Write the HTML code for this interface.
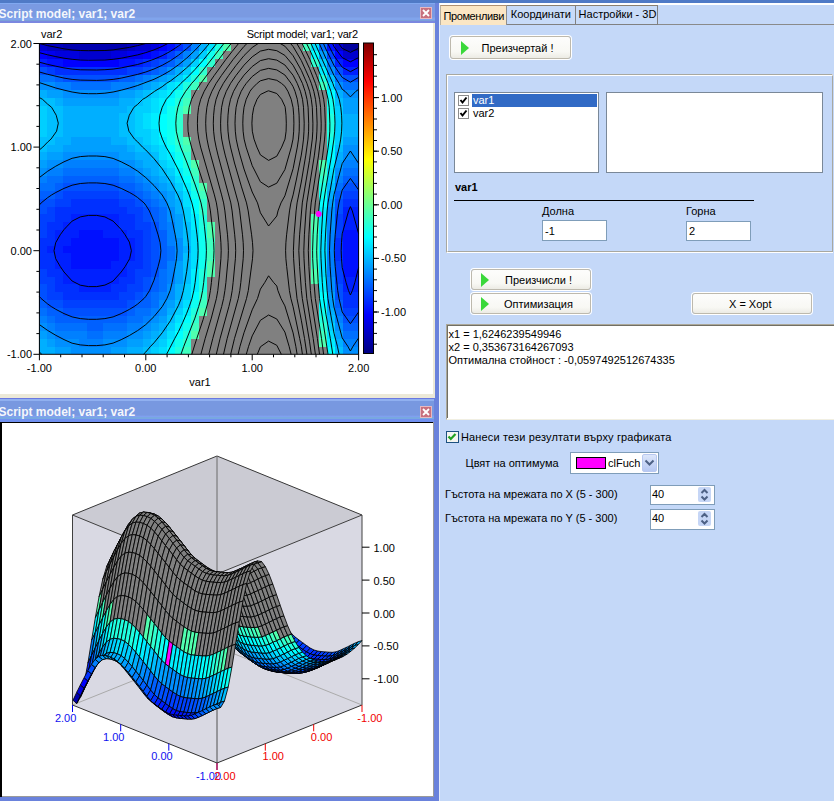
<!DOCTYPE html>
<html><head><meta charset="utf-8"><style>
html,body{margin:0;padding:0}
body{width:834px;height:801px;position:relative;overflow:hidden;background:#c4d8f8;font-family:"Liberation Sans", sans-serif}
.abs{position:absolute}
.t{position:absolute;white-space:nowrap;line-height:1}
.title{position:absolute;background:linear-gradient(#80a8f0 0,#80a8f0 1px,#7a9ae2 2px,#7a9ae2 14px,#80a4ec 17px,#7aa0d8 18.5px,#7b88e0 19px,#7b88e0 20px)}
.ttext{position:absolute;left:-1.5px;color:#fff;font-weight:bold;font-size:12px;line-height:1;white-space:nowrap;opacity:.92}
.close{position:absolute;width:12px;height:12px;background:#c8707e;border:1px solid #e8b8c0;box-sizing:border-box}
.btn{position:absolute;box-sizing:border-box;border:1px solid #bdb9ad;border-radius:3px;background:linear-gradient(#fdfdfc,#f8f8f4 70%,#ecebe4);box-shadow:0 0 0 1px #fff}
.play{position:absolute;width:0;height:0;border-top:7px solid transparent;border-bottom:7px solid transparent;border-left:8.5px solid #3ad83a}
.edit{position:absolute;box-sizing:border-box;background:#fff;border:1px solid #7f9db9}
.cb{width:11px;height:11px;box-sizing:border-box;border:1px solid #8c8c8c;background:#fff}
.spin{width:13px;height:15px;box-sizing:border-box;border-radius:2px;background:#c6d6f6}
</style></head><body>
<!-- top blue strip -->
<div class="abs" style="left:0;top:0;width:834px;height:3px;background:#4f7ac6"></div>
<!-- ============ top-left window ============ -->
<div class="abs" style="left:0;top:3px;width:438.5px;height:395px;background:#6a82dc"></div>
<div class="abs" style="left:0;top:3px;width:435px;height:20px;background:linear-gradient(#80a8f0 0,#80a8f0 1.4px,#7a9ae2 1.4px,#7a9ae2 14px,#80a4ec 15px,#80a4ec 17px,#7aa0d8 17px,#7aa0d8 18.5px,#7b88e0 18.5px)"></div>
<div class="ttext" style="top:8px">Script model; var1; var2</div>
<div class="close" style="left:420px;top:7px"></div><svg class="abs" style="left:420px;top:7px" width="12" height="12"><path d="M3 3L9 9M9 3L3 9" stroke="#fff" stroke-width="1.8"/></svg>
<div class="abs" style="left:0;top:23px;width:435px;height:374.5px;background:#ece9d8"></div>
<div class="abs" style="left:0;top:23px;width:433px;height:371px;background:#fff;overflow:hidden">
  <div class="abs" style="left:0;top:-23px"><svg class="abs" style="left:0;top:0" width="434" height="400" font-family='"Liberation Sans", sans-serif'><path fill="#00afff" shape-rendering="crispEdges" d="M39.4 346.5h16.0v7.8h-16.0zM127.2 346.5h16.0v7.8h-16.0zM39.4 338.8h8.0v7.8h-8.0zM143.1 338.8h8.0v7.8h-8.0zM334.7 338.8h8.0v7.8h-8.0zM151.1 331.0h8.0v7.8h-8.0zM159.1 323.2h8.0v7.8h-8.0zM167.1 307.7h8.0v7.8h-8.0zM326.7 307.7h8.0v7.8h-8.0zM175.1 292.1h8.0v7.8h-8.0zM175.1 284.4h8.0v7.8h-8.0zM183.0 245.5h8.0v7.8h-8.0zM175.1 206.7h8.0v7.8h-8.0zM175.1 198.9h8.0v7.8h-8.0zM326.7 191.1h8.0v7.8h-8.0zM167.1 183.4h8.0v7.8h-8.0zM159.1 175.6h8.0v7.8h-8.0zM151.1 167.8h8.0v7.8h-8.0zM143.1 160.1h16.0v7.8h-16.0zM39.4 152.3h8.0v7.8h-8.0zM135.2 152.3h16.0v7.8h-16.0zM334.7 152.3h8.0v7.8h-8.0zM47.4 144.5h16.0v7.8h-16.0zM127.2 144.5h8.0v7.8h-8.0zM55.4 136.7h16.0v7.8h-16.0zM111.2 136.7h16.0v7.8h-16.0zM63.3 129.0h55.9v7.8h-55.9zM342.6 129.0h16.0v7.8h-16.0zM63.3 121.2h55.9v7.8h-55.9zM342.6 121.2h16.0v7.8h-16.0zM63.3 113.4h55.9v7.8h-55.9zM342.6 113.4h16.0v7.8h-16.0zM63.3 105.7h63.8v7.8h-63.8zM55.4 97.9h8.0v7.8h-8.0zM119.2 97.9h16.0v7.8h-16.0zM39.4 90.1h8.0v7.8h-8.0zM135.2 90.1h8.0v7.8h-8.0zM334.7 90.1h8.0v7.8h-8.0zM151.1 82.4h8.0v7.8h-8.0zM167.1 74.6h8.0v7.8h-8.0zM175.1 66.8h8.0v7.8h-8.0zM199.0 43.5h8.0v7.8h-8.0z"/>
<path fill="#009fff" shape-rendering="crispEdges" d="M55.4 346.5h16.0v7.8h-16.0zM111.2 346.5h16.0v7.8h-16.0zM47.4 338.8h8.0v7.8h-8.0zM127.2 338.8h16.0v7.8h-16.0zM39.4 331.0h8.0v7.8h-8.0zM143.1 331.0h8.0v7.8h-8.0zM334.7 331.0h8.0v7.8h-8.0zM151.1 323.2h8.0v7.8h-8.0zM159.1 315.4h8.0v7.8h-8.0zM167.1 299.9h8.0v7.8h-8.0zM326.7 299.9h8.0v7.8h-8.0zM326.7 292.1h8.0v7.8h-8.0zM175.1 276.6h8.0v7.8h-8.0zM175.1 268.8h8.0v7.8h-8.0zM175.1 261.1h8.0v7.8h-8.0zM175.1 230.0h8.0v7.8h-8.0zM175.1 222.2h8.0v7.8h-8.0zM175.1 214.4h8.0v7.8h-8.0zM167.1 198.9h8.0v7.8h-8.0zM326.7 198.9h8.0v7.8h-8.0zM167.1 191.1h8.0v7.8h-8.0zM159.1 183.4h8.0v7.8h-8.0zM151.1 175.6h8.0v7.8h-8.0zM143.1 167.8h8.0v7.8h-8.0zM39.4 160.1h8.0v7.8h-8.0zM135.2 160.1h8.0v7.8h-8.0zM334.7 160.1h8.0v7.8h-8.0zM47.4 152.3h16.0v7.8h-16.0zM119.2 152.3h16.0v7.8h-16.0zM63.3 144.5h63.8v7.8h-63.8zM71.3 136.7h39.9v7.8h-39.9zM342.6 136.7h16.0v7.8h-16.0zM342.6 105.7h16.0v7.8h-16.0zM63.3 97.9h55.9v7.8h-55.9zM342.6 97.9h16.0v7.8h-16.0zM47.4 90.1h16.0v7.8h-16.0zM119.2 90.1h16.0v7.8h-16.0zM143.1 82.4h8.0v7.8h-8.0zM159.1 74.6h8.0v7.8h-8.0zM183.0 59.0h8.0v7.8h-8.0zM191.0 51.3h8.0v7.8h-8.0zM318.7 51.3h8.0v7.8h-8.0z"/>
<path fill="#008fff" shape-rendering="crispEdges" d="M71.3 346.5h39.9v7.8h-39.9zM342.6 346.5h16.0v7.8h-16.0zM55.4 338.8h23.9v7.8h-23.9zM103.2 338.8h23.9v7.8h-23.9zM47.4 331.0h8.0v7.8h-8.0zM127.2 331.0h16.0v7.8h-16.0zM39.4 323.2h8.0v7.8h-8.0zM143.1 323.2h8.0v7.8h-8.0zM334.7 323.2h8.0v7.8h-8.0zM151.1 315.4h8.0v7.8h-8.0zM159.1 307.7h8.0v7.8h-8.0zM159.1 299.9h8.0v7.8h-8.0zM167.1 292.1h8.0v7.8h-8.0zM167.1 284.4h8.0v7.8h-8.0zM326.7 284.4h8.0v7.8h-8.0zM326.7 276.6h8.0v7.8h-8.0zM175.1 253.3h8.0v7.8h-8.0zM175.1 245.5h8.0v7.8h-8.0zM175.1 237.8h8.0v7.8h-8.0zM326.7 222.2h8.0v7.8h-8.0zM167.1 214.4h8.0v7.8h-8.0zM326.7 214.4h8.0v7.8h-8.0zM167.1 206.7h8.0v7.8h-8.0zM326.7 206.7h8.0v7.8h-8.0zM159.1 191.1h8.0v7.8h-8.0zM151.1 183.4h8.0v7.8h-8.0zM143.1 175.6h8.0v7.8h-8.0zM39.4 167.8h8.0v7.8h-8.0zM135.2 167.8h8.0v7.8h-8.0zM334.7 167.8h8.0v7.8h-8.0zM47.4 160.1h16.0v7.8h-16.0zM119.2 160.1h16.0v7.8h-16.0zM63.3 152.3h55.9v7.8h-55.9zM342.6 152.3h16.0v7.8h-16.0zM342.6 144.5h16.0v7.8h-16.0zM63.3 90.1h55.9v7.8h-55.9zM342.6 90.1h16.0v7.8h-16.0zM39.4 82.4h16.0v7.8h-16.0zM135.2 82.4h8.0v7.8h-8.0zM334.7 82.4h8.0v7.8h-8.0zM151.1 74.6h8.0v7.8h-8.0zM167.1 66.8h8.0v7.8h-8.0zM326.7 66.8h8.0v7.8h-8.0z"/>
<path fill="#00bfff" shape-rendering="crispEdges" d="M143.1 346.5h8.0v7.8h-8.0zM334.7 346.5h8.0v7.8h-8.0zM151.1 338.8h8.0v7.8h-8.0zM159.1 331.0h8.0v7.8h-8.0zM167.1 315.4h8.0v7.8h-8.0zM326.7 315.4h8.0v7.8h-8.0zM175.1 299.9h8.0v7.8h-8.0zM183.0 276.6h8.0v7.8h-8.0zM183.0 268.8h8.0v7.8h-8.0zM183.0 261.1h8.0v7.8h-8.0zM183.0 253.3h8.0v7.8h-8.0zM183.0 237.8h8.0v7.8h-8.0zM183.0 230.0h8.0v7.8h-8.0zM183.0 222.2h8.0v7.8h-8.0zM175.1 191.1h8.0v7.8h-8.0zM326.7 183.4h8.0v7.8h-8.0zM167.1 175.6h8.0v7.8h-8.0zM159.1 167.8h8.0v7.8h-8.0zM151.1 152.3h8.0v7.8h-8.0zM39.4 144.5h8.0v7.8h-8.0zM135.2 144.5h16.0v7.8h-16.0zM334.7 144.5h8.0v7.8h-8.0zM39.4 136.7h16.0v7.8h-16.0zM127.2 136.7h16.0v7.8h-16.0zM47.4 129.0h16.0v7.8h-16.0zM119.2 129.0h16.0v7.8h-16.0zM47.4 121.2h16.0v7.8h-16.0zM119.2 121.2h16.0v7.8h-16.0zM47.4 113.4h16.0v7.8h-16.0zM119.2 113.4h16.0v7.8h-16.0zM47.4 105.7h16.0v7.8h-16.0zM127.2 105.7h8.0v7.8h-8.0zM39.4 97.9h16.0v7.8h-16.0zM135.2 97.9h8.0v7.8h-8.0zM334.7 97.9h8.0v7.8h-8.0zM143.1 90.1h8.0v7.8h-8.0zM159.1 82.4h8.0v7.8h-8.0zM326.7 74.6h8.0v7.8h-8.0z"/>
<path fill="#00cfff" shape-rendering="crispEdges" d="M151.1 346.5h8.0v7.8h-8.0zM159.1 338.8h8.0v7.8h-8.0zM167.1 323.2h8.0v7.8h-8.0zM326.7 323.2h8.0v7.8h-8.0zM175.1 307.7h8.0v7.8h-8.0zM183.0 292.1h8.0v7.8h-8.0zM183.0 284.4h8.0v7.8h-8.0zM183.0 214.4h8.0v7.8h-8.0zM183.0 206.7h8.0v7.8h-8.0zM175.1 183.4h8.0v7.8h-8.0zM326.7 175.6h8.0v7.8h-8.0zM167.1 167.8h8.0v7.8h-8.0zM159.1 160.1h8.0v7.8h-8.0zM151.1 144.5h8.0v7.8h-8.0zM143.1 136.7h8.0v7.8h-8.0zM334.7 136.7h8.0v7.8h-8.0zM39.4 129.0h8.0v7.8h-8.0zM135.2 129.0h16.0v7.8h-16.0zM334.7 129.0h8.0v7.8h-8.0zM39.4 121.2h8.0v7.8h-8.0zM135.2 121.2h8.0v7.8h-8.0zM334.7 121.2h8.0v7.8h-8.0zM39.4 113.4h8.0v7.8h-8.0zM135.2 113.4h8.0v7.8h-8.0zM334.7 113.4h8.0v7.8h-8.0zM39.4 105.7h8.0v7.8h-8.0zM135.2 105.7h16.0v7.8h-16.0zM334.7 105.7h8.0v7.8h-8.0zM143.1 97.9h8.0v7.8h-8.0zM151.1 90.1h8.0v7.8h-8.0zM175.1 74.6h8.0v7.8h-8.0zM183.0 66.8h8.0v7.8h-8.0zM191.0 59.0h8.0v7.8h-8.0zM318.7 59.0h8.0v7.8h-8.0zM199.0 51.3h8.0v7.8h-8.0z"/>
<path fill="#00dfff" shape-rendering="crispEdges" d="M159.1 346.5h8.0v7.8h-8.0zM167.1 331.0h8.0v7.8h-8.0zM326.7 331.0h8.0v7.8h-8.0zM175.1 315.4h8.0v7.8h-8.0zM183.0 299.9h8.0v7.8h-8.0zM318.7 268.8h8.0v7.8h-8.0zM191.0 261.1h8.0v7.8h-8.0zM318.7 261.1h8.0v7.8h-8.0zM191.0 253.3h8.0v7.8h-8.0zM318.7 253.3h8.0v7.8h-8.0zM191.0 245.5h8.0v7.8h-8.0zM318.7 245.5h8.0v7.8h-8.0zM191.0 237.8h8.0v7.8h-8.0zM318.7 237.8h8.0v7.8h-8.0zM191.0 230.0h8.0v7.8h-8.0zM318.7 230.0h8.0v7.8h-8.0zM183.0 198.9h8.0v7.8h-8.0zM183.0 191.1h8.0v7.8h-8.0zM175.1 175.6h8.0v7.8h-8.0zM326.7 167.8h8.0v7.8h-8.0zM167.1 160.1h8.0v7.8h-8.0zM159.1 152.3h8.0v7.8h-8.0zM159.1 144.5h8.0v7.8h-8.0zM151.1 136.7h8.0v7.8h-8.0zM151.1 129.0h8.0v7.8h-8.0zM143.1 121.2h8.0v7.8h-8.0zM143.1 113.4h8.0v7.8h-8.0zM151.1 105.7h8.0v7.8h-8.0zM151.1 97.9h8.0v7.8h-8.0zM159.1 90.1h8.0v7.8h-8.0zM167.1 82.4h8.0v7.8h-8.0zM326.7 82.4h8.0v7.8h-8.0zM207.0 43.5h8.0v7.8h-8.0zM310.7 43.5h8.0v7.8h-8.0z"/>
<path fill="#00ffff" shape-rendering="crispEdges" d="M167.1 346.5h8.0v7.8h-8.0zM326.7 346.5h8.0v7.8h-8.0zM175.1 331.0h8.0v7.8h-8.0zM183.0 315.4h8.0v7.8h-8.0zM318.7 299.9h8.0v7.8h-8.0zM191.0 292.1h8.0v7.8h-8.0zM318.7 292.1h8.0v7.8h-8.0zM191.0 206.7h8.0v7.8h-8.0zM191.0 198.9h8.0v7.8h-8.0zM318.7 198.9h8.0v7.8h-8.0zM183.0 175.6h8.0v7.8h-8.0zM175.1 160.1h8.0v7.8h-8.0zM326.7 152.3h8.0v7.8h-8.0zM167.1 144.5h8.0v7.8h-8.0zM326.7 144.5h8.0v7.8h-8.0zM159.1 129.0h8.0v7.8h-8.0zM159.1 121.2h8.0v7.8h-8.0zM159.1 113.4h8.0v7.8h-8.0zM167.1 97.9h8.0v7.8h-8.0zM326.7 90.1h8.0v7.8h-8.0zM191.0 66.8h8.0v7.8h-8.0zM199.0 59.0h8.0v7.8h-8.0zM310.7 51.3h8.0v7.8h-8.0z"/>
<path fill="#20ffdf" shape-rendering="crispEdges" d="M175.1 346.5h8.0v7.8h-8.0zM183.0 331.0h8.0v7.8h-8.0zM318.7 315.4h8.0v7.8h-8.0zM191.0 307.7h8.0v7.8h-8.0zM199.0 284.4h8.0v7.8h-8.0zM199.0 276.6h8.0v7.8h-8.0zM199.0 268.8h8.0v7.8h-8.0zM199.0 222.2h8.0v7.8h-8.0zM199.0 214.4h8.0v7.8h-8.0zM191.0 183.4h8.0v7.8h-8.0zM318.7 183.4h8.0v7.8h-8.0zM183.0 160.1h8.0v7.8h-8.0zM175.1 144.5h8.0v7.8h-8.0zM326.7 129.0h8.0v7.8h-8.0zM326.7 121.2h8.0v7.8h-8.0zM326.7 113.4h8.0v7.8h-8.0zM175.1 97.9h8.0v7.8h-8.0zM183.0 82.4h8.0v7.8h-8.0zM191.0 74.6h8.0v7.8h-8.0zM318.7 74.6h8.0v7.8h-8.0zM215.0 43.5h8.0v7.8h-8.0z"/>
<path fill="#40ffbf" shape-rendering="crispEdges" d="M183.0 346.5h8.0v7.8h-8.0zM318.7 331.0h8.0v7.8h-8.0zM191.0 323.2h8.0v7.8h-8.0zM199.0 299.9h8.0v7.8h-8.0zM310.7 261.1h8.0v7.8h-8.0zM207.0 253.3h8.0v7.8h-8.0zM310.7 253.3h8.0v7.8h-8.0zM207.0 245.5h8.0v7.8h-8.0zM310.7 245.5h8.0v7.8h-8.0zM207.0 237.8h8.0v7.8h-8.0zM310.7 237.8h8.0v7.8h-8.0zM310.7 230.0h8.0v7.8h-8.0zM199.0 191.1h8.0v7.8h-8.0zM191.0 167.8h8.0v7.8h-8.0zM318.7 167.8h8.0v7.8h-8.0zM183.0 144.5h8.0v7.8h-8.0zM183.0 97.9h8.0v7.8h-8.0zM191.0 82.4h8.0v7.8h-8.0zM318.7 82.4h8.0v7.8h-8.0zM215.0 51.3h8.0v7.8h-8.0zM302.7 43.5h8.0v7.8h-8.0z"/>
<path fill="#808080" shape-rendering="crispEdges" d="M191.0 346.5h135.7v7.8h-135.7zM191.0 338.8h127.7v7.8h-127.7zM199.0 331.0h119.7v7.8h-119.7zM199.0 323.2h119.7v7.8h-119.7zM199.0 315.4h119.7v7.8h-119.7zM207.0 307.7h111.7v7.8h-111.7zM207.0 299.9h111.7v7.8h-111.7zM207.0 292.1h111.7v7.8h-111.7zM207.0 284.4h111.7v7.8h-111.7zM207.0 276.6h103.7v7.8h-103.7zM215.0 268.8h95.8v7.8h-95.8zM215.0 261.1h95.8v7.8h-95.8zM215.0 253.3h95.8v7.8h-95.8zM215.0 245.5h95.8v7.8h-95.8zM215.0 237.8h95.8v7.8h-95.8zM215.0 230.0h95.8v7.8h-95.8zM215.0 222.2h95.8v7.8h-95.8zM207.0 214.4h103.7v7.8h-103.7zM207.0 206.7h111.7v7.8h-111.7zM207.0 198.9h111.7v7.8h-111.7zM207.0 191.1h111.7v7.8h-111.7zM207.0 183.4h111.7v7.8h-111.7zM199.0 175.6h119.7v7.8h-119.7zM199.0 167.8h119.7v7.8h-119.7zM199.0 160.1h119.7v7.8h-119.7zM191.0 152.3h135.7v7.8h-135.7zM191.0 144.5h135.7v7.8h-135.7zM191.0 136.7h135.7v7.8h-135.7zM183.0 129.0h143.6v7.8h-143.6zM183.0 121.2h143.6v7.8h-143.6zM183.0 113.4h143.6v7.8h-143.6zM191.0 105.7h135.7v7.8h-135.7zM191.0 97.9h135.7v7.8h-135.7zM191.0 90.1h135.7v7.8h-135.7zM199.0 82.4h119.7v7.8h-119.7zM207.0 74.6h111.7v7.8h-111.7zM207.0 66.8h111.7v7.8h-111.7zM215.0 59.0h95.8v7.8h-95.8zM222.9 51.3h87.8v7.8h-87.8zM230.9 43.5h71.8v7.8h-71.8z"/>
<path fill="#0080ff" shape-rendering="crispEdges" d="M79.3 338.8h23.9v7.8h-23.9zM342.6 338.8h16.0v7.8h-16.0zM55.4 331.0h31.9v7.8h-31.9zM103.2 331.0h23.9v7.8h-23.9zM47.4 323.2h8.0v7.8h-8.0zM127.2 323.2h16.0v7.8h-16.0zM39.4 315.4h8.0v7.8h-8.0zM143.1 315.4h8.0v7.8h-8.0zM334.7 315.4h8.0v7.8h-8.0zM151.1 307.7h8.0v7.8h-8.0zM159.1 292.1h8.0v7.8h-8.0zM167.1 276.6h8.0v7.8h-8.0zM167.1 268.8h8.0v7.8h-8.0zM326.7 268.8h8.0v7.8h-8.0zM167.1 261.1h8.0v7.8h-8.0zM326.7 261.1h8.0v7.8h-8.0zM326.7 253.3h8.0v7.8h-8.0zM326.7 245.5h8.0v7.8h-8.0zM167.1 237.8h8.0v7.8h-8.0zM326.7 237.8h8.0v7.8h-8.0zM167.1 230.0h8.0v7.8h-8.0zM326.7 230.0h8.0v7.8h-8.0zM167.1 222.2h8.0v7.8h-8.0zM159.1 198.9h8.0v7.8h-8.0zM151.1 191.1h8.0v7.8h-8.0zM143.1 183.4h8.0v7.8h-8.0zM39.4 175.6h8.0v7.8h-8.0zM135.2 175.6h8.0v7.8h-8.0zM334.7 175.6h8.0v7.8h-8.0zM47.4 167.8h16.0v7.8h-16.0zM119.2 167.8h16.0v7.8h-16.0zM63.3 160.1h55.9v7.8h-55.9zM342.6 160.1h16.0v7.8h-16.0zM55.4 82.4h16.0v7.8h-16.0zM111.2 82.4h23.9v7.8h-23.9zM143.1 74.6h8.0v7.8h-8.0zM175.1 59.0h8.0v7.8h-8.0zM183.0 51.3h8.0v7.8h-8.0zM191.0 43.5h8.0v7.8h-8.0z"/>
<path fill="#00efff" shape-rendering="crispEdges" d="M167.1 338.8h8.0v7.8h-8.0zM326.7 338.8h8.0v7.8h-8.0zM175.1 323.2h8.0v7.8h-8.0zM183.0 307.7h8.0v7.8h-8.0zM191.0 284.4h8.0v7.8h-8.0zM318.7 284.4h8.0v7.8h-8.0zM191.0 276.6h8.0v7.8h-8.0zM318.7 276.6h8.0v7.8h-8.0zM191.0 268.8h8.0v7.8h-8.0zM191.0 222.2h8.0v7.8h-8.0zM318.7 222.2h8.0v7.8h-8.0zM191.0 214.4h8.0v7.8h-8.0zM318.7 214.4h8.0v7.8h-8.0zM318.7 206.7h8.0v7.8h-8.0zM183.0 183.4h8.0v7.8h-8.0zM175.1 167.8h8.0v7.8h-8.0zM326.7 160.1h8.0v7.8h-8.0zM167.1 152.3h8.0v7.8h-8.0zM159.1 136.7h8.0v7.8h-8.0zM151.1 121.2h8.0v7.8h-8.0zM151.1 113.4h8.0v7.8h-8.0zM159.1 105.7h8.0v7.8h-8.0zM159.1 97.9h8.0v7.8h-8.0zM167.1 90.1h8.0v7.8h-8.0zM175.1 82.4h8.0v7.8h-8.0zM183.0 74.6h8.0v7.8h-8.0zM318.7 66.8h8.0v7.8h-8.0z"/>
<path fill="#10ffef" shape-rendering="crispEdges" d="M175.1 338.8h8.0v7.8h-8.0zM183.0 323.2h8.0v7.8h-8.0zM318.7 307.7h8.0v7.8h-8.0zM191.0 299.9h8.0v7.8h-8.0zM199.0 261.1h8.0v7.8h-8.0zM199.0 253.3h8.0v7.8h-8.0zM199.0 245.5h8.0v7.8h-8.0zM199.0 237.8h8.0v7.8h-8.0zM199.0 230.0h8.0v7.8h-8.0zM191.0 191.1h8.0v7.8h-8.0zM318.7 191.1h8.0v7.8h-8.0zM183.0 167.8h8.0v7.8h-8.0zM175.1 152.3h8.0v7.8h-8.0zM167.1 136.7h8.0v7.8h-8.0zM326.7 136.7h8.0v7.8h-8.0zM167.1 129.0h8.0v7.8h-8.0zM167.1 121.2h8.0v7.8h-8.0zM167.1 113.4h8.0v7.8h-8.0zM167.1 105.7h8.0v7.8h-8.0zM326.7 105.7h8.0v7.8h-8.0zM326.7 97.9h8.0v7.8h-8.0zM175.1 90.1h8.0v7.8h-8.0zM207.0 51.3h8.0v7.8h-8.0z"/>
<path fill="#30ffcf" shape-rendering="crispEdges" d="M183.0 338.8h8.0v7.8h-8.0zM318.7 323.2h8.0v7.8h-8.0zM191.0 315.4h8.0v7.8h-8.0zM199.0 292.1h8.0v7.8h-8.0zM199.0 206.7h8.0v7.8h-8.0zM199.0 198.9h8.0v7.8h-8.0zM191.0 175.6h8.0v7.8h-8.0zM318.7 175.6h8.0v7.8h-8.0zM183.0 152.3h8.0v7.8h-8.0zM175.1 136.7h8.0v7.8h-8.0zM175.1 129.0h8.0v7.8h-8.0zM175.1 121.2h8.0v7.8h-8.0zM175.1 113.4h8.0v7.8h-8.0zM175.1 105.7h8.0v7.8h-8.0zM183.0 90.1h8.0v7.8h-8.0zM199.0 66.8h8.0v7.8h-8.0zM207.0 59.0h8.0v7.8h-8.0zM310.7 59.0h8.0v7.8h-8.0z"/>
<path fill="#50ffaf" shape-rendering="crispEdges" d="M318.7 338.8h8.0v7.8h-8.0zM191.0 331.0h8.0v7.8h-8.0zM199.0 307.7h8.0v7.8h-8.0zM310.7 276.6h8.0v7.8h-8.0zM207.0 268.8h8.0v7.8h-8.0zM310.7 268.8h8.0v7.8h-8.0zM207.0 261.1h8.0v7.8h-8.0zM207.0 230.0h8.0v7.8h-8.0zM207.0 222.2h8.0v7.8h-8.0zM310.7 222.2h8.0v7.8h-8.0zM310.7 214.4h8.0v7.8h-8.0zM199.0 183.4h8.0v7.8h-8.0zM191.0 160.1h8.0v7.8h-8.0zM318.7 160.1h8.0v7.8h-8.0zM183.0 136.7h8.0v7.8h-8.0zM183.0 105.7h8.0v7.8h-8.0zM199.0 74.6h8.0v7.8h-8.0zM222.9 43.5h8.0v7.8h-8.0z"/>
<path fill="#0070ff" shape-rendering="crispEdges" d="M87.3 331.0h16.0v7.8h-16.0zM342.6 331.0h16.0v7.8h-16.0zM55.4 323.2h31.9v7.8h-31.9zM103.2 323.2h23.9v7.8h-23.9zM47.4 315.4h8.0v7.8h-8.0zM127.2 315.4h16.0v7.8h-16.0zM39.4 307.7h8.0v7.8h-8.0zM135.2 307.7h16.0v7.8h-16.0zM334.7 307.7h8.0v7.8h-8.0zM151.1 299.9h8.0v7.8h-8.0zM151.1 292.1h8.0v7.8h-8.0zM159.1 284.4h8.0v7.8h-8.0zM159.1 276.6h8.0v7.8h-8.0zM159.1 268.8h8.0v7.8h-8.0zM167.1 253.3h8.0v7.8h-8.0zM167.1 245.5h8.0v7.8h-8.0zM159.1 222.2h8.0v7.8h-8.0zM159.1 214.4h8.0v7.8h-8.0zM159.1 206.7h8.0v7.8h-8.0zM151.1 198.9h8.0v7.8h-8.0zM143.1 191.1h8.0v7.8h-8.0zM39.4 183.4h16.0v7.8h-16.0zM135.2 183.4h8.0v7.8h-8.0zM334.7 183.4h8.0v7.8h-8.0zM47.4 175.6h16.0v7.8h-16.0zM119.2 175.6h16.0v7.8h-16.0zM63.3 167.8h55.9v7.8h-55.9zM342.6 167.8h16.0v7.8h-16.0zM71.3 82.4h39.9v7.8h-39.9zM342.6 82.4h16.0v7.8h-16.0zM39.4 74.6h16.0v7.8h-16.0zM135.2 74.6h8.0v7.8h-8.0zM334.7 74.6h8.0v7.8h-8.0zM159.1 66.8h8.0v7.8h-8.0zM326.7 59.0h8.0v7.8h-8.0zM318.7 43.5h8.0v7.8h-8.0z"/>
<path fill="#0060ff" shape-rendering="crispEdges" d="M87.3 323.2h16.0v7.8h-16.0zM342.6 323.2h16.0v7.8h-16.0zM55.4 315.4h71.8v7.8h-71.8zM47.4 307.7h16.0v7.8h-16.0zM127.2 307.7h8.0v7.8h-8.0zM39.4 299.9h8.0v7.8h-8.0zM135.2 299.9h16.0v7.8h-16.0zM334.7 299.9h8.0v7.8h-8.0zM143.1 292.1h8.0v7.8h-8.0zM151.1 284.4h8.0v7.8h-8.0zM151.1 276.6h8.0v7.8h-8.0zM159.1 261.1h8.0v7.8h-8.0zM159.1 253.3h8.0v7.8h-8.0zM159.1 245.5h8.0v7.8h-8.0zM159.1 237.8h8.0v7.8h-8.0zM159.1 230.0h8.0v7.8h-8.0zM151.1 214.4h8.0v7.8h-8.0zM151.1 206.7h8.0v7.8h-8.0zM143.1 198.9h8.0v7.8h-8.0zM39.4 191.1h16.0v7.8h-16.0zM135.2 191.1h8.0v7.8h-8.0zM334.7 191.1h8.0v7.8h-8.0zM55.4 183.4h8.0v7.8h-8.0zM119.2 183.4h16.0v7.8h-16.0zM63.3 175.6h55.9v7.8h-55.9zM342.6 175.6h16.0v7.8h-16.0zM55.4 74.6h8.0v7.8h-8.0zM119.2 74.6h16.0v7.8h-16.0zM151.1 66.8h8.0v7.8h-8.0zM167.1 59.0h8.0v7.8h-8.0zM175.1 51.3h8.0v7.8h-8.0z"/>
<path fill="#0050ff" shape-rendering="crispEdges" d="M342.6 315.4h16.0v7.8h-16.0zM63.3 307.7h63.8v7.8h-63.8zM47.4 299.9h16.0v7.8h-16.0zM127.2 299.9h8.0v7.8h-8.0zM39.4 292.1h8.0v7.8h-8.0zM135.2 292.1h8.0v7.8h-8.0zM334.7 292.1h8.0v7.8h-8.0zM39.4 284.4h8.0v7.8h-8.0zM143.1 284.4h8.0v7.8h-8.0zM334.7 284.4h8.0v7.8h-8.0zM143.1 276.6h8.0v7.8h-8.0zM151.1 268.8h8.0v7.8h-8.0zM151.1 261.1h8.0v7.8h-8.0zM151.1 253.3h8.0v7.8h-8.0zM151.1 245.5h8.0v7.8h-8.0zM151.1 237.8h8.0v7.8h-8.0zM151.1 230.0h8.0v7.8h-8.0zM151.1 222.2h8.0v7.8h-8.0zM143.1 214.4h8.0v7.8h-8.0zM39.4 206.7h8.0v7.8h-8.0zM143.1 206.7h8.0v7.8h-8.0zM334.7 206.7h8.0v7.8h-8.0zM39.4 198.9h16.0v7.8h-16.0zM135.2 198.9h8.0v7.8h-8.0zM334.7 198.9h8.0v7.8h-8.0zM55.4 191.1h8.0v7.8h-8.0zM119.2 191.1h16.0v7.8h-16.0zM63.3 183.4h55.9v7.8h-55.9zM342.6 183.4h16.0v7.8h-16.0zM63.3 74.6h55.9v7.8h-55.9zM342.6 74.6h16.0v7.8h-16.0zM39.4 66.8h8.0v7.8h-8.0zM143.1 66.8h8.0v7.8h-8.0zM334.7 66.8h8.0v7.8h-8.0zM159.1 59.0h8.0v7.8h-8.0zM183.0 43.5h8.0v7.8h-8.0z"/>
<path fill="#0040ff" shape-rendering="crispEdges" d="M342.6 307.7h16.0v7.8h-16.0zM63.3 299.9h63.8v7.8h-63.8zM47.4 292.1h16.0v7.8h-16.0zM119.2 292.1h16.0v7.8h-16.0zM47.4 284.4h8.0v7.8h-8.0zM127.2 284.4h16.0v7.8h-16.0zM39.4 276.6h16.0v7.8h-16.0zM135.2 276.6h8.0v7.8h-8.0zM334.7 276.6h8.0v7.8h-8.0zM39.4 268.8h8.0v7.8h-8.0zM135.2 268.8h16.0v7.8h-16.0zM334.7 268.8h8.0v7.8h-8.0zM143.1 261.1h8.0v7.8h-8.0zM334.7 261.1h8.0v7.8h-8.0zM143.1 253.3h8.0v7.8h-8.0zM143.1 245.5h8.0v7.8h-8.0zM143.1 237.8h8.0v7.8h-8.0zM39.4 230.0h8.0v7.8h-8.0zM143.1 230.0h8.0v7.8h-8.0zM334.7 230.0h8.0v7.8h-8.0zM39.4 222.2h8.0v7.8h-8.0zM135.2 222.2h16.0v7.8h-16.0zM334.7 222.2h8.0v7.8h-8.0zM39.4 214.4h16.0v7.8h-16.0zM135.2 214.4h8.0v7.8h-8.0zM334.7 214.4h8.0v7.8h-8.0zM47.4 206.7h8.0v7.8h-8.0zM127.2 206.7h16.0v7.8h-16.0zM55.4 198.9h16.0v7.8h-16.0zM119.2 198.9h16.0v7.8h-16.0zM63.3 191.1h55.9v7.8h-55.9zM342.6 191.1h16.0v7.8h-16.0zM47.4 66.8h8.0v7.8h-8.0zM127.2 66.8h16.0v7.8h-16.0zM151.1 59.0h8.0v7.8h-8.0zM167.1 51.3h8.0v7.8h-8.0zM326.7 51.3h8.0v7.8h-8.0z"/>
<path fill="#0030ff" shape-rendering="crispEdges" d="M342.6 299.9h16.0v7.8h-16.0zM63.3 292.1h55.9v7.8h-55.9zM342.6 292.1h16.0v7.8h-16.0zM55.4 284.4h23.9v7.8h-23.9zM111.2 284.4h16.0v7.8h-16.0zM55.4 276.6h8.0v7.8h-8.0zM119.2 276.6h16.0v7.8h-16.0zM47.4 268.8h16.0v7.8h-16.0zM127.2 268.8h8.0v7.8h-8.0zM39.4 261.1h16.0v7.8h-16.0zM127.2 261.1h16.0v7.8h-16.0zM39.4 253.3h16.0v7.8h-16.0zM135.2 253.3h8.0v7.8h-8.0zM334.7 253.3h8.0v7.8h-8.0zM39.4 245.5h8.0v7.8h-8.0zM135.2 245.5h8.0v7.8h-8.0zM334.7 245.5h8.0v7.8h-8.0zM39.4 237.8h16.0v7.8h-16.0zM135.2 237.8h8.0v7.8h-8.0zM334.7 237.8h8.0v7.8h-8.0zM47.4 230.0h8.0v7.8h-8.0zM127.2 230.0h16.0v7.8h-16.0zM47.4 222.2h16.0v7.8h-16.0zM119.2 222.2h16.0v7.8h-16.0zM55.4 214.4h16.0v7.8h-16.0zM119.2 214.4h16.0v7.8h-16.0zM55.4 206.7h71.8v7.8h-71.8zM71.3 198.9h47.9v7.8h-47.9zM342.6 198.9h16.0v7.8h-16.0zM55.4 66.8h71.8v7.8h-71.8zM143.1 59.0h8.0v7.8h-8.0zM175.1 43.5h8.0v7.8h-8.0z"/>
<path fill="#0020ff" shape-rendering="crispEdges" d="M79.3 284.4h31.9v7.8h-31.9zM342.6 284.4h16.0v7.8h-16.0zM63.3 276.6h55.9v7.8h-55.9zM342.6 276.6h16.0v7.8h-16.0zM63.3 268.8h63.8v7.8h-63.8zM55.4 261.1h16.0v7.8h-16.0zM111.2 261.1h16.0v7.8h-16.0zM55.4 253.3h16.0v7.8h-16.0zM119.2 253.3h16.0v7.8h-16.0zM47.4 245.5h16.0v7.8h-16.0zM119.2 245.5h16.0v7.8h-16.0zM55.4 237.8h16.0v7.8h-16.0zM119.2 237.8h16.0v7.8h-16.0zM55.4 230.0h23.9v7.8h-23.9zM103.2 230.0h23.9v7.8h-23.9zM63.3 222.2h55.9v7.8h-55.9zM342.6 222.2h16.0v7.8h-16.0zM71.3 214.4h47.9v7.8h-47.9zM342.6 214.4h16.0v7.8h-16.0zM342.6 206.7h16.0v7.8h-16.0zM342.6 66.8h16.0v7.8h-16.0zM39.4 59.0h8.0v7.8h-8.0zM135.2 59.0h8.0v7.8h-8.0zM334.7 59.0h8.0v7.8h-8.0zM159.1 51.3h8.0v7.8h-8.0z"/>
<path fill="#0010ff" shape-rendering="crispEdges" d="M342.6 268.8h16.0v7.8h-16.0zM71.3 261.1h39.9v7.8h-39.9zM342.6 261.1h16.0v7.8h-16.0zM71.3 253.3h47.9v7.8h-47.9zM342.6 253.3h16.0v7.8h-16.0zM63.3 245.5h55.9v7.8h-55.9zM342.6 245.5h16.0v7.8h-16.0zM71.3 237.8h47.9v7.8h-47.9zM342.6 237.8h16.0v7.8h-16.0zM79.3 230.0h23.9v7.8h-23.9zM342.6 230.0h16.0v7.8h-16.0zM47.4 59.0h16.0v7.8h-16.0zM119.2 59.0h16.0v7.8h-16.0zM151.1 51.3h8.0v7.8h-8.0zM167.1 43.5h8.0v7.8h-8.0zM326.7 43.5h8.0v7.8h-8.0z"/>
<path fill="#0000ff" shape-rendering="crispEdges" d="M63.3 59.0h55.9v7.8h-55.9zM342.6 59.0h16.0v7.8h-16.0zM39.4 51.3h8.0v7.8h-8.0zM143.1 51.3h8.0v7.8h-8.0zM334.7 51.3h8.0v7.8h-8.0zM159.1 43.5h8.0v7.8h-8.0z"/>
<path fill="#0000ef" shape-rendering="crispEdges" d="M47.4 51.3h8.0v7.8h-8.0zM127.2 51.3h16.0v7.8h-16.0z"/>
<path fill="#0000df" shape-rendering="crispEdges" d="M55.4 51.3h23.9v7.8h-23.9zM111.2 51.3h16.0v7.8h-16.0zM151.1 43.5h8.0v7.8h-8.0z"/>
<path fill="#0000cf" shape-rendering="crispEdges" d="M79.3 51.3h31.9v7.8h-31.9zM342.6 51.3h16.0v7.8h-16.0zM39.4 43.5h8.0v7.8h-8.0zM135.2 43.5h16.0v7.8h-16.0zM334.7 43.5h8.0v7.8h-8.0z"/>
<path fill="#0000bf" shape-rendering="crispEdges" d="M47.4 43.5h16.0v7.8h-16.0zM127.2 43.5h8.0v7.8h-8.0z"/>
<path fill="#0000af" shape-rendering="crispEdges" d="M63.3 43.5h63.8v7.8h-63.8z"/>
<path fill="#00009f" shape-rendering="crispEdges" d="M342.6 43.5h16.0v7.8h-16.0z"/>
<path d="M358.6 48.3L350.4 52.3L342.2 48.3L338.6 43.5M145.7 43.5L137.6 45.6L129.4 47.4L113.1 49.9L104.9 50.5L88.5 50.7L80.3 50.5L72.1 50.0L64.0 48.8L47.6 45.6L39.4 43.5M167.8 43.5L162.2 46.4L154.0 49.9L145.8 52.6L137.6 54.9L121.2 58.2L113.1 59.3L104.9 60.0L88.5 60.2L80.3 60.0L72.1 59.3L64.0 58.2L55.8 56.6L47.6 54.8L39.4 52.7M358.6 57.6L350.4 61.8L342.2 57.6L334.0 46.6L332.5 43.5M358.6 267.7L354.8 282.6L352.4 290.5L350.4 295.0L348.5 290.5L346.1 282.6L342.2 267.5L341.5 258.7L341.2 250.7L341.5 242.7L342.2 233.8L348.6 210.9L350.4 206.6L352.3 210.9L358.6 233.7M108.6 218.8L113.1 221.1L121.2 229.5L125.1 234.8L129.4 242.1L131.4 250.7L129.7 258.7L125.1 266.6L121.2 272.0L113.1 281.0L110.2 282.6L104.9 285.1L96.7 286.6L88.5 286.6L80.3 285.2L72.1 281.0L64.0 272.0L60.3 266.6L55.7 258.7L54.0 250.7L55.7 242.7L60.2 234.8L64.0 229.6L66.6 226.8L72.1 221.1L80.3 216.9L88.5 215.4L96.7 215.4L104.9 216.9L108.6 218.8M181.7 43.5L178.5 46.0L170.4 51.3L162.2 55.7L154.0 59.2L145.8 62.1L137.6 64.5L121.2 67.9L113.1 69.1L104.9 69.7L96.7 70.0L80.3 69.8L72.1 69.1L64.0 67.9L55.8 66.2L47.6 64.4L39.4 62.2M358.6 67.3L350.4 71.7L342.2 67.2L334.0 55.8L327.7 43.5M358.6 312.0L350.4 323.7L342.2 312.0L339.0 298.5L337.7 290.5L335.2 266.6L334.6 258.7L334.3 250.7L334.6 242.7L335.2 234.8L337.7 210.9L339.0 202.9L342.2 190.0L350.4 178.4L358.6 189.9M39.4 205.0L41.2 202.9L47.6 197.7L51.7 194.9L55.8 192.5L64.0 188.4L72.1 185.2L80.3 183.5L88.5 182.9L96.7 182.9L104.9 183.5L113.1 185.2L121.2 188.4L129.4 192.4L133.8 194.9L137.6 197.5L144.0 202.9L145.8 205.2L149.4 210.9L154.0 221.8L158.1 234.8L160.1 242.7L160.9 250.7L160.1 258.7L158.1 266.6L154.0 280.2L149.6 290.5L145.8 296.4L144.0 298.5L137.6 304.1L134.2 306.5L129.4 309.4L121.2 313.6L113.1 316.9L104.9 318.6L96.7 319.3L88.5 319.3L80.3 318.6L72.1 316.9L64.0 313.6L55.8 309.3L51.2 306.5L47.6 303.9L41.1 298.5L39.4 296.5M192.4 43.5L186.7 48.7L178.5 55.2L170.4 60.7L162.2 65.3L154.0 69.0L145.8 72.0L137.6 74.4L121.2 78.1L113.1 79.4L104.9 80.1L96.7 80.4L80.3 80.1L72.1 79.4L64.0 78.1L47.6 74.3L39.4 72.0M358.6 77.4L350.4 82.2L342.2 77.4L334.0 65.4L325.9 49.0L323.4 43.5M358.6 338.0L353.0 346.3L350.4 351.0L347.8 346.3L342.2 337.9L334.0 307.1L332.7 298.5L331.8 290.5L330.1 266.6L329.5 250.7L330.1 234.8L331.8 210.9L332.7 202.9L334.0 194.6L342.2 163.5L350.4 151.0L358.6 163.4M39.4 177.5L47.6 171.3L55.8 166.2L64.0 161.8L72.1 158.3L80.3 156.6L88.5 156.0L96.7 156.0L104.9 156.6L113.1 158.4L121.2 161.8L129.4 166.0L137.6 171.1L145.8 177.6L154.0 185.5L162.2 195.0L166.9 202.9L170.1 210.9L171.9 218.8L175.2 234.8L176.5 242.7L177.1 250.7L176.5 258.7L175.2 266.6L172.1 282.6L170.2 290.5L166.9 298.5L162.2 306.7L154.0 316.6L145.8 324.6L137.6 330.6L129.4 335.5L121.2 339.7L113.1 343.1L104.9 344.9L96.7 345.6L88.5 345.6L80.3 344.9L72.1 343.2L64.0 339.6L55.8 335.3L47.6 330.4L39.4 324.6M201.4 43.5L194.9 50.4L186.7 58.1L178.5 64.8L170.4 70.6L162.2 75.3L154.0 79.3L137.6 85.5L129.4 88.0L121.2 90.2L113.1 92.0L104.9 93.2L96.7 93.7L88.5 93.7L80.3 93.3L72.1 92.0L64.0 90.1L55.8 88.0L39.4 82.6M358.6 89.4L355.9 91.3L350.4 96.9L345.0 91.3L342.2 89.3L339.1 83.3L334.0 75.4L325.9 58.4L319.3 43.5M41.8 354.3L39.4 352.1M209.4 43.5L203.1 50.9L194.9 59.8L186.7 67.8L178.5 74.8L170.4 81.0L166.5 83.3L162.2 86.7L154.6 91.3L145.8 97.6L142.7 99.3L137.6 104.4L133.9 107.3L129.3 115.2L127.1 123.2L128.9 131.2L134.5 139.1L137.6 141.8L142.5 147.1L145.8 150.0L154.0 158.7L162.2 168.8L170.4 181.4L177.8 194.9L181.2 202.9L183.3 210.9L186.7 230.2L188.3 242.7L188.7 250.7L188.3 258.7L186.7 271.3L183.4 290.5L181.2 298.5L178.5 305.3L170.4 320.8L162.2 332.8L154.0 342.8L150.6 346.3L145.8 352.0L143.4 354.3M339.1 354.3L337.4 346.3L334.0 333.2L327.9 298.5L327.1 290.5L325.9 273.8L324.9 250.7L325.1 242.7L325.9 227.9L327.1 210.9L328.0 202.9L334.0 168.4L339.3 147.1L340.7 139.1L341.6 131.2L341.9 123.2L341.6 115.2L340.8 107.3L339.2 99.3L336.4 91.3L334.0 86.9L332.8 83.3L315.1 43.5M39.4 149.9L42.8 147.1L47.6 142.1L51.0 139.1L56.6 131.2L58.3 123.2L56.2 115.2L51.6 107.3L47.6 104.1L42.5 99.3L39.4 97.6M216.7 43.5L203.1 60.3L194.9 69.6L186.7 78.0L180.9 83.3L178.5 86.0L172.9 91.3L170.4 94.8L166.3 99.3L162.2 107.3L159.8 115.2L159.0 123.2L159.7 131.2L162.4 139.1L166.1 147.1L170.4 154.4L178.5 170.1L186.7 188.7L189.2 194.9L191.9 202.9L193.8 210.9L195.0 218.8L197.0 234.8L197.8 242.7L198.1 250.7L197.8 258.7L195.1 282.6L193.8 290.5L192.0 298.5L189.3 306.5L186.7 313.3L182.8 322.4L178.5 331.6L174.8 338.4L166.6 354.3M332.8 354.3L330.3 338.4L325.9 314.2L323.6 298.5L322.3 282.6L321.0 258.7L320.8 250.7L321.4 234.8L322.8 210.9L323.6 202.9L325.9 187.8L331.6 155.1L333.9 139.1L334.7 131.2L335.0 123.2L334.7 115.2L334.0 107.3L332.9 99.3L330.9 91.3L328.1 83.3L321.5 67.4L311.0 43.5M223.9 43.5L203.1 70.1L194.9 79.9L191.7 83.3L185.6 91.3L180.7 99.3L177.9 107.3L176.4 115.2L175.8 123.2L176.3 131.2L178.1 139.1L180.6 147.1L186.7 162.0L194.9 184.0L198.6 194.9L201.0 202.9L202.6 210.9L204.5 226.8L206.1 242.7L206.4 250.7L206.1 258.7L203.7 282.6L202.6 290.5L201.0 298.5L198.7 306.5L194.9 318.1L183.8 346.3L181.0 354.3M328.0 354.3L319.5 298.5L318.2 282.6L316.9 258.7L316.7 250.7L317.2 234.8L318.7 210.9L319.5 202.9L328.2 147.1L329.2 139.1L329.8 131.2L329.9 123.2L329.2 107.3L328.1 99.3L326.2 91.3L323.7 83.3L320.6 75.4L314.0 59.4L309.5 49.3L306.6 43.5M231.2 43.5L224.8 51.5L200.8 83.3L195.6 91.3L191.6 99.3L189.2 107.3L188.2 115.2L187.8 123.2L188.1 131.2L189.4 139.1L191.5 147.1L203.1 182.6L206.8 194.9L209.0 202.9L210.4 210.9L212.2 226.8L213.7 242.7L214.0 250.7L213.7 258.7L211.4 282.6L210.4 290.5L209.0 298.5L203.1 319.6L196.8 338.4L191.8 354.3M323.6 354.3L321.5 338.4L315.3 298.5L314.0 282.6L312.7 258.7L312.6 250.7L313.1 234.8L314.6 210.9L315.3 202.9L322.7 155.1L324.6 139.1L325.2 131.2L325.3 123.2L324.7 107.3L323.7 99.3L322.0 91.3L319.6 83.3L316.5 75.4L309.8 59.4L302.1 43.5M238.6 43.5L232.1 51.5L225.9 59.4L214.3 75.4L208.8 83.3L204.2 91.3L200.7 99.3L198.6 107.3L197.7 115.2L197.4 123.2L197.7 131.2L198.8 139.1L200.6 147.1L214.4 194.9L216.4 202.9L217.7 210.9L220.3 234.8L220.9 242.7L221.2 250.7L220.9 258.7L219.5 274.9L217.8 290.5L216.4 298.5L211.3 318.1L205.2 338.4L200.9 354.3M319.5 354.3L317.4 338.4L311.2 298.5L310.4 290.5L308.9 266.6L308.3 250.7L308.9 234.8L310.4 210.9L311.2 202.9L318.6 155.1L320.5 139.1L321.1 131.2L321.2 123.2L320.6 107.3L319.6 99.3L317.9 91.3L315.4 83.3L309.5 68.4L305.3 59.4L301.3 51.1L296.8 43.5M247.0 43.5L244.0 46.4L233.2 59.4L221.5 75.4L216.2 83.3L211.9 91.3L208.7 99.3L206.9 107.3L206.0 115.2L205.7 123.2L206.0 131.2L207.0 139.1L208.6 147.1L210.7 155.1L221.6 194.9L223.6 202.9L224.9 210.9L227.5 234.8L228.1 242.7L228.4 250.7L228.1 258.7L225.9 282.6L224.9 290.5L223.6 298.5L221.7 306.5L212.8 338.4L208.8 354.3M315.4 354.3L313.2 338.4L306.8 298.5L305.4 282.6L304.0 258.7L303.8 250.7L304.4 234.8L306.0 210.9L306.8 202.9L314.4 155.1L316.4 139.1L316.9 131.2L317.1 123.2L316.5 107.3L315.5 99.3L313.8 91.3L311.3 83.3L309.5 78.7L301.3 60.5L293.1 46.5L290.5 43.5M258.2 43.5L252.2 47.5L244.0 55.6L235.8 65.7L228.7 75.4L223.4 83.3L219.1 91.3L216.1 99.3L214.4 107.3L213.6 115.2L213.3 123.2L213.6 131.2L214.5 139.1L216.1 147.1L218.0 155.1L230.8 202.9L232.1 210.9L234.7 234.8L235.4 242.7L235.7 250.7L235.4 258.7L233.1 282.6L232.2 290.5L230.8 298.5L228.9 306.5L220.1 338.4L216.3 354.3M311.3 354.3L309.5 341.2L302.3 298.5L301.4 290.5L299.6 266.6L298.8 250.7L299.6 234.8L302.3 202.9L309.5 160.3L312.3 139.1L312.8 131.2L312.9 123.2L312.3 107.3L311.3 99.3L309.6 91.3L306.9 83.3L301.3 70.3L293.1 55.7L284.9 46.2L280.2 43.5M306.9 354.3L304.5 338.4L301.3 320.2L297.0 298.5L295.3 282.6L293.6 258.7L293.4 250.7L294.1 234.8L296.1 210.9L297.1 202.9L301.3 182.0L305.8 155.1L308.0 139.1L308.6 131.2L308.7 123.2L308.1 107.3L307.0 99.3L305.1 91.3L302.4 83.3L298.6 75.4L293.1 65.3L284.9 55.4L276.8 50.7L268.6 49.3L260.4 51.1L252.2 56.8L244.0 65.2L235.8 75.7L230.6 83.3L226.3 91.3L223.3 99.3L221.6 107.3L220.9 115.2L220.6 123.2L220.8 131.2L221.7 139.1L223.3 147.1L225.2 155.1L238.3 202.9L239.7 210.9L242.5 234.8L243.2 242.7L243.5 250.7L243.2 258.7L240.8 282.6L239.8 290.5L238.3 298.5L227.2 338.4L223.5 354.3M302.4 354.3L301.3 346.3L299.7 338.4L293.1 306.8L290.9 298.5L289.4 290.5L286.7 266.6L285.9 258.7L285.6 250.7L285.9 242.7L286.6 234.8L289.5 210.9L290.9 202.9L293.1 194.9L296.5 179.0L301.3 155.1L302.5 147.1L303.5 139.1L304.0 131.2L304.2 123.2L303.5 107.3L302.5 99.3L300.4 91.3L297.2 83.3L293.1 75.3L284.9 65.0L276.8 60.1L268.6 58.7L260.4 60.6L252.2 66.5L244.0 75.2L238.1 83.3L233.6 91.3L230.5 99.3L228.8 107.3L228.0 115.2L227.7 123.2L228.0 131.2L228.9 139.1L230.5 147.1L234.5 163.0L241.5 186.9L246.5 202.9L248.2 210.9L251.6 234.8L252.5 242.7L253.0 250.7L252.5 258.7L248.3 290.5L246.5 298.5L234.5 338.4L230.7 354.3M297.1 354.3L295.8 346.3L293.1 332.9L284.9 305.9L281.0 298.5L277.9 290.5L276.8 286.0L273.7 282.6L268.6 275.8L264.7 282.6L260.4 289.1L257.5 298.5L252.2 309.8L244.0 332.7L240.0 346.3L238.1 354.3M284.9 75.0L276.8 69.9L268.6 68.4L260.4 70.4L252.2 76.5L246.3 83.3L244.0 86.6L241.2 91.3L238.0 99.3L236.1 107.3L235.3 115.2L235.0 123.2L235.3 131.2L236.2 139.1L237.9 147.1L240.0 155.1L244.0 169.0L247.5 179.0L252.2 192.0L257.5 202.9L260.4 212.8L268.6 226.0L276.8 216.0L278.0 210.9L281.0 202.9L284.9 195.8L293.1 168.7L297.3 147.1L298.5 139.1L299.2 131.2L299.3 123.2L299.1 115.2L298.5 107.3L297.3 99.3L295.0 91.3L293.1 86.7L291.1 83.3L284.9 75.0M291.1 354.3L289.1 346.3L284.9 332.1L276.8 319.0L268.6 315.0L260.4 320.3L252.2 335.9L248.6 346.3L246.3 354.3M276.8 80.3L268.6 78.6L260.4 80.8L257.2 83.3L252.2 88.3L250.0 91.3L246.2 99.3L244.0 107.3L243.1 115.2L242.8 123.2L243.1 131.2L244.1 139.1L246.1 147.1L252.2 165.6L260.4 181.8L268.6 187.1L276.8 183.2L284.9 169.6L291.3 147.1L293.0 139.1L293.7 131.2L293.9 123.2L293.7 115.2L293.1 107.7L291.2 99.3L287.9 91.3L284.9 86.3L281.4 83.3L276.8 80.3M281.3 354.3L276.8 345.3L268.6 341.1L260.4 346.8L257.3 354.3M268.6 90.8L267.1 91.3L260.4 94.5L257.0 99.3L253.8 107.3L252.4 115.2L251.9 123.2L252.3 131.2L254.0 139.1L256.9 147.1L260.4 154.9L268.6 160.4L276.8 156.2L281.7 147.1L285.0 139.1L286.1 131.2L286.3 123.2L286.0 115.2L285.2 107.3L284.9 106.3L281.6 99.3L276.8 93.5L268.6 90.8" fill="none" stroke="#000" stroke-width="0.95"/><circle cx="318.7" cy="214.1" r="3" fill="#ff00ff"/><rect x="39.4" y="43.5" width="319.2" height="310.8" fill="none" stroke="#000" stroke-width="1"/>
<line x1="39.4" y1="354.3" x2="39.4" y2="360.3" stroke="#000"/>
<line x1="60.7" y1="354.3" x2="60.7" y2="357.3" stroke="#000"/>
<line x1="82.0" y1="354.3" x2="82.0" y2="357.3" stroke="#000"/>
<line x1="103.2" y1="354.3" x2="103.2" y2="357.3" stroke="#000"/>
<line x1="124.5" y1="354.3" x2="124.5" y2="357.3" stroke="#000"/>
<line x1="145.8" y1="354.3" x2="145.8" y2="360.3" stroke="#000"/>
<line x1="167.1" y1="354.3" x2="167.1" y2="357.3" stroke="#000"/>
<line x1="188.4" y1="354.3" x2="188.4" y2="357.3" stroke="#000"/>
<line x1="209.6" y1="354.3" x2="209.6" y2="357.3" stroke="#000"/>
<line x1="230.9" y1="354.3" x2="230.9" y2="357.3" stroke="#000"/>
<line x1="252.2" y1="354.3" x2="252.2" y2="360.3" stroke="#000"/>
<line x1="273.5" y1="354.3" x2="273.5" y2="357.3" stroke="#000"/>
<line x1="294.8" y1="354.3" x2="294.8" y2="357.3" stroke="#000"/>
<line x1="316.0" y1="354.3" x2="316.0" y2="357.3" stroke="#000"/>
<line x1="337.3" y1="354.3" x2="337.3" y2="357.3" stroke="#000"/>
<line x1="358.6" y1="354.3" x2="358.6" y2="360.3" stroke="#000"/>
<line x1="33.4" y1="354.3" x2="39.4" y2="354.3" stroke="#000"/>
<line x1="36.4" y1="333.6" x2="39.4" y2="333.6" stroke="#000"/>
<line x1="36.4" y1="312.9" x2="39.4" y2="312.9" stroke="#000"/>
<line x1="36.4" y1="292.1" x2="39.4" y2="292.1" stroke="#000"/>
<line x1="36.4" y1="271.4" x2="39.4" y2="271.4" stroke="#000"/>
<line x1="33.4" y1="250.7" x2="39.4" y2="250.7" stroke="#000"/>
<line x1="36.4" y1="230.0" x2="39.4" y2="230.0" stroke="#000"/>
<line x1="36.4" y1="209.3" x2="39.4" y2="209.3" stroke="#000"/>
<line x1="36.4" y1="188.5" x2="39.4" y2="188.5" stroke="#000"/>
<line x1="36.4" y1="167.8" x2="39.4" y2="167.8" stroke="#000"/>
<line x1="33.4" y1="147.1" x2="39.4" y2="147.1" stroke="#000"/>
<line x1="36.4" y1="126.4" x2="39.4" y2="126.4" stroke="#000"/>
<line x1="36.4" y1="105.7" x2="39.4" y2="105.7" stroke="#000"/>
<line x1="36.4" y1="84.9" x2="39.4" y2="84.9" stroke="#000"/>
<line x1="36.4" y1="64.2" x2="39.4" y2="64.2" stroke="#000"/>
<line x1="33.4" y1="43.5" x2="39.4" y2="43.5" stroke="#000"/>
<text x="39.4" y="371.5" font-size="11" fill="#000" text-anchor="middle">-1.00</text>
<text x="32" y="358.3" font-size="11" fill="#000" text-anchor="end">-1.00</text>
<text x="145.8" y="371.5" font-size="11" fill="#000" text-anchor="middle">0.00</text>
<text x="32" y="254.7" font-size="11" fill="#000" text-anchor="end">0.00</text>
<text x="252.20000000000005" y="371.5" font-size="11" fill="#000" text-anchor="middle">1.00</text>
<text x="32" y="151.1" font-size="11" fill="#000" text-anchor="end">1.00</text>
<text x="358.6" y="371.5" font-size="11" fill="#000" text-anchor="middle">2.00</text>
<text x="32" y="47.5" font-size="11" fill="#000" text-anchor="end">2.00</text>
<text x="200" y="386" font-size="11" fill="#000" text-anchor="middle">var1</text>
<text x="41" y="38" font-size="11" fill="#000" text-anchor="start">var2</text>
<text x="358" y="38" font-size="11" text-anchor="end" letter-spacing="-0.2">Script model; var1; var2</text><defs><linearGradient id="jetg" x1="0" y1="1" x2="0" y2="0">
<stop offset="0.000" stop-color="#00007f"/>
<stop offset="0.125" stop-color="#0000ff"/>
<stop offset="0.250" stop-color="#007fff"/>
<stop offset="0.375" stop-color="#00ffff"/>
<stop offset="0.500" stop-color="#7fff7f"/>
<stop offset="0.625" stop-color="#ffff00"/>
<stop offset="0.750" stop-color="#ff7f00"/>
<stop offset="0.875" stop-color="#ff0000"/>
<stop offset="1.000" stop-color="#7f0000"/>
</linearGradient></defs>
<rect x="363.5" y="43.0" width="10.0" height="310.5" fill="url(#jetg)" stroke="#000"/>
<line x1="373.5" y1="344.2" x2="377" y2="344.2" stroke="#000"/>
<line x1="373.5" y1="333.4" x2="377" y2="333.4" stroke="#000"/>
<line x1="373.5" y1="322.7" x2="377" y2="322.7" stroke="#000"/>
<line x1="373.5" y1="312.0" x2="377" y2="312.0" stroke="#000"/>
<line x1="373.5" y1="301.3" x2="377" y2="301.3" stroke="#000"/>
<line x1="373.5" y1="290.6" x2="377" y2="290.6" stroke="#000"/>
<line x1="373.5" y1="279.8" x2="377" y2="279.8" stroke="#000"/>
<line x1="373.5" y1="269.1" x2="377" y2="269.1" stroke="#000"/>
<line x1="373.5" y1="258.4" x2="377" y2="258.4" stroke="#000"/>
<line x1="373.5" y1="247.7" x2="377" y2="247.7" stroke="#000"/>
<line x1="373.5" y1="237.0" x2="377" y2="237.0" stroke="#000"/>
<line x1="373.5" y1="226.2" x2="377" y2="226.2" stroke="#000"/>
<line x1="373.5" y1="215.5" x2="377" y2="215.5" stroke="#000"/>
<line x1="373.5" y1="204.8" x2="377" y2="204.8" stroke="#000"/>
<line x1="373.5" y1="194.1" x2="377" y2="194.1" stroke="#000"/>
<line x1="373.5" y1="183.4" x2="377" y2="183.4" stroke="#000"/>
<line x1="373.5" y1="172.6" x2="377" y2="172.6" stroke="#000"/>
<line x1="373.5" y1="161.9" x2="377" y2="161.9" stroke="#000"/>
<line x1="373.5" y1="151.2" x2="377" y2="151.2" stroke="#000"/>
<line x1="373.5" y1="140.5" x2="377" y2="140.5" stroke="#000"/>
<line x1="373.5" y1="129.8" x2="377" y2="129.8" stroke="#000"/>
<line x1="373.5" y1="119.0" x2="377" y2="119.0" stroke="#000"/>
<line x1="373.5" y1="108.3" x2="377" y2="108.3" stroke="#000"/>
<line x1="373.5" y1="97.6" x2="377" y2="97.6" stroke="#000"/>
<line x1="373.5" y1="86.9" x2="377" y2="86.9" stroke="#000"/>
<line x1="373.5" y1="76.2" x2="377" y2="76.2" stroke="#000"/>
<line x1="373.5" y1="65.4" x2="377" y2="65.4" stroke="#000"/>
<line x1="373.5" y1="54.7" x2="377" y2="54.7" stroke="#000"/>
<line x1="373.5" y1="97.6" x2="379" y2="97.6" stroke="#000"/>
<text x="381" y="101.60000000000001" font-size="11" fill="#000" text-anchor="start">1.00</text>
<line x1="373.5" y1="151.2" x2="379" y2="151.2" stroke="#000"/>
<text x="381" y="155.20000000000002" font-size="11" fill="#000" text-anchor="start">0.50</text>
<line x1="373.5" y1="204.8" x2="379" y2="204.8" stroke="#000"/>
<text x="381" y="208.8" font-size="11" fill="#000" text-anchor="start">0.00</text>
<line x1="373.5" y1="258.4" x2="379" y2="258.4" stroke="#000"/>
<text x="381" y="262.40000000000003" font-size="11" fill="#000" text-anchor="start">-0.50</text>
<line x1="373.5" y1="312.0" x2="379" y2="312.0" stroke="#000"/>
<text x="381" y="316.0" font-size="11" fill="#000" text-anchor="start">-1.00</text></svg></div>
</div>
<!-- ============ bottom-left window ============ -->
<div class="abs" style="left:0;top:397.5px;width:438.5px;height:403.5px;background:#6a82dc"></div>
<div class="abs" style="left:0;top:398px;width:434px;height:23.5px;background:linear-gradient(#6a78e0 0,#6a78e0 1.5px,#90b0f0 1.5px,#90b0f0 3px,#7898e0 3px,#7898e0 17px,#80a0f0 18.5px,#80a0f0 19.5px,#78a8e0 19.5px,#78a8e0 21px,#7090f0 21px)"></div>
<div class="ttext" style="top:406px">Script model; var1; var2</div>
<div class="close" style="left:420px;top:405.5px"></div><svg class="abs" style="left:420px;top:405.5px" width="12" height="12"><path d="M3 3L9 9M9 3L3 9" stroke="#fff" stroke-width="1.8"/></svg>
<div class="abs" style="left:0;top:421.5px;width:433.5px;height:375.5px;background:#9a9a9a"></div>
<div class="abs" style="left:2px;top:423px;width:430.5px;height:373px;background:#fff;overflow:hidden">
  <div class="abs" style="left:-2px;top:-423px"><svg class="abs" style="left:0;top:0" width="434" height="801" font-family='"Liberation Sans", sans-serif'><polygon points="72.5,515.0 217.0,456.0 362.0,515.0 362.0,705.0 217.0,763.0 72.5,705.0" fill="#d9d9e3" />
<polygon points="72.5,515.0 217.0,456.0 362.0,515.0 217.0,574.0" fill="#cbcbd3" />
<line x1="72.5" y1="515.0" x2="217.0" y2="456.0" stroke="#383838" stroke-width="1"/>
<line x1="217.0" y1="456.0" x2="362.0" y2="515.0" stroke="#383838" stroke-width="1"/>
<line x1="217.0" y1="456.0" x2="217.0" y2="647.0" stroke="#6a6a6a" stroke-width="1"/>
<line x1="72.5" y1="515.0" x2="72.5" y2="705.0" stroke="#404040" stroke-width="1"/>
<line x1="362.0" y1="515.0" x2="362.0" y2="705.0" stroke="#404040" stroke-width="1"/>
<line x1="72.5" y1="515.0" x2="217.0" y2="574.0" stroke="#404040" stroke-width="1"/>
<line x1="217.0" y1="574.0" x2="362.0" y2="515.0" stroke="#404040" stroke-width="1"/>
<line x1="217.0" y1="574.0" x2="217.0" y2="763.0" stroke="#505050" stroke-width="1"/>
<line x1="72.5" y1="705.0" x2="217.0" y2="647.0" stroke="#aaa" stroke-width="1"/>
<line x1="217.0" y1="647.0" x2="362.0" y2="705.0" stroke="#aaa" stroke-width="1"/>
<line x1="72.5" y1="705.0" x2="217.0" y2="763.0" stroke="#303030" stroke-width="1"/>
<line x1="217.0" y1="763.0" x2="362.0" y2="705.0" stroke="#303030" stroke-width="1"/><g stroke="#000" stroke-width="0.85"><path fill="#0000cf" d="M221.7 628.8L218.0 632.8L214.3 640.6L218.0 636.7z"/>
<path fill="#0000ff" d="M225.4 621.3L221.7 625.2L218.0 632.8L221.7 628.8z"/>
<path fill="#0000bf" d="M218.0 632.8L214.3 636.3L210.6 644.1L214.3 640.6z"/>
<path fill="#0020ff" d="M229.1 614.1L225.4 618.0L221.7 625.2L225.4 621.3z"/>
<path fill="#0000ef" d="M221.7 625.2L217.9 628.8L214.3 636.3L218.0 632.8z"/>
<path fill="#0000bf" d="M214.3 636.3L210.5 639.5L206.8 647.4L210.6 644.1z"/>
<path fill="#0050ff" d="M232.8 607.1L229.1 611.0L225.4 618.0L229.1 614.1z"/>
<path fill="#0020ff" d="M225.4 618.0L221.6 621.5L217.9 628.8L221.7 625.2z"/>
<path fill="#0000df" d="M217.9 628.8L214.2 632.0L210.5 639.5L214.3 636.3z"/>
<path fill="#0000af" d="M210.5 639.5L206.8 642.4L203.1 650.2L206.8 647.4z"/>
<path fill="#0070ff" d="M236.5 600.7L232.7 604.6L229.1 611.0L232.8 607.1z"/>
<path fill="#0040ff" d="M229.1 611.0L225.3 614.5L221.6 621.5L225.4 618.0z"/>
<path fill="#0010ff" d="M221.6 621.5L217.9 624.8L214.2 632.0L217.9 628.8z"/>
<path fill="#0000df" d="M214.2 632.0L210.5 634.8L206.8 642.4L210.5 639.5z"/>
<path fill="#0000af" d="M206.8 642.4L203.1 644.5L199.4 652.4L203.1 650.2z"/>
<path fill="#009fff" d="M240.2 595.8L236.4 599.7L232.7 604.6L236.5 600.7z"/>
<path fill="#0000df" d="M210.5 634.8L206.8 637.0L203.1 644.5L206.8 642.4z"/>
<path fill="#0070ff" d="M232.7 604.6L229.0 608.1L225.3 614.5L229.1 611.0z"/>
<path fill="#0040ff" d="M225.3 614.5L221.6 617.8L217.9 624.8L221.6 621.5z"/>
<path fill="#0010ff" d="M217.9 624.8L214.2 627.6L210.5 634.8L214.2 632.0z"/>
<path fill="#0000af" d="M203.1 644.5L199.4 646.3L195.7 654.1L199.4 652.4z"/>
<path fill="#00afff" d="M243.8 592.8L240.1 596.7L236.4 599.7L240.2 595.8z"/>
<path fill="#008fff" d="M236.4 599.7L232.7 603.2L229.0 608.1L232.7 604.6z"/>
<path fill="#0060ff" d="M229.0 608.1L225.3 611.4L221.6 617.8L225.3 614.5z"/>
<path fill="#0030ff" d="M221.6 617.8L217.9 620.6L214.2 627.6L217.9 624.8z"/>
<path fill="#0000ff" d="M214.2 627.6L210.5 629.7L206.8 637.0L210.5 634.8z"/>
<path fill="#0000cf" d="M206.8 637.0L203.1 638.7L199.4 646.3L203.1 644.5z"/>
<path fill="#0000af" d="M199.4 646.3L195.7 647.7L192.0 655.6L195.7 654.1z"/>
<path fill="#00afff" d="M240.1 596.7L236.4 600.3L232.7 603.2L236.4 599.7z"/>
<path fill="#0080ff" d="M232.7 603.2L229.0 606.4L225.3 611.4L229.0 608.1z"/>
<path fill="#00bfff" d="M247.5 591.8L243.8 595.7L240.1 596.7L243.8 592.8z"/>
<path fill="#0060ff" d="M225.3 611.4L221.6 614.2L217.9 620.6L221.6 617.8z"/>
<path fill="#0030ff" d="M217.9 620.6L214.2 622.8L210.5 629.7L214.2 627.6z"/>
<path fill="#0000ff" d="M210.5 629.7L206.8 631.5L203.1 638.7L206.8 637.0z"/>
<path fill="#0000cf" d="M203.1 638.7L199.4 640.2L195.7 647.7L199.4 646.3z"/>
<path fill="#0000af" d="M195.7 647.7L191.9 649.0L188.3 656.8L192.0 655.6z"/>
<path fill="#00cfff" d="M251.2 592.1L247.5 596.1L243.8 595.7L247.5 591.8z"/>
<path fill="#009fff" d="M236.4 600.3L232.7 603.5L229.0 606.4L232.7 603.2z"/>
<path fill="#0080ff" d="M229.0 606.4L225.3 609.3L221.6 614.2L225.3 611.4z"/>
<path fill="#0050ff" d="M221.6 614.2L217.9 616.4L214.2 622.8L217.9 620.6z"/>
<path fill="#0000cf" d="M199.4 640.2L195.6 641.5L191.9 649.0L195.7 647.7z"/>
<path fill="#0000af" d="M191.9 649.0L188.2 649.8L184.5 657.6L188.3 656.8z"/>
<path fill="#00bfff" d="M243.8 595.7L240.1 599.2L236.4 600.3L240.1 596.7z"/>
<path fill="#0030ff" d="M214.2 622.8L210.5 624.5L206.8 631.5L210.5 629.7z"/>
<path fill="#0000ff" d="M206.8 631.5L203.1 633.0L199.4 640.2L203.1 638.7z"/>
<path fill="#00cfff" d="M254.9 593.2L251.2 597.1L247.5 596.1L251.2 592.1z"/>
<path fill="#00bfff" d="M247.5 596.1L243.8 599.6L240.1 599.2L243.8 595.7z"/>
<path fill="#00afff" d="M240.1 599.2L236.4 602.5L232.7 603.5L236.4 600.3z"/>
<path fill="#008fff" d="M232.7 603.5L229.0 606.3L225.3 609.3L229.0 606.4z"/>
<path fill="#0080ff" d="M225.3 609.3L221.6 611.4L217.9 616.4L221.6 614.2z"/>
<path fill="#0050ff" d="M217.9 616.4L214.2 618.1L210.5 624.5L214.2 622.8z"/>
<path fill="#0030ff" d="M210.5 624.5L206.7 626.0L203.1 633.0L206.8 631.5z"/>
<path fill="#0000ff" d="M203.1 633.0L199.3 634.2L195.6 641.5L199.4 640.2z"/>
<path fill="#0000df" d="M195.6 641.5L191.9 642.3L188.2 649.8L191.9 649.0z"/>
<path fill="#0000af" d="M188.2 649.8L184.5 650.0L180.8 657.8L184.5 657.6z"/>
<path fill="#00cfff" d="M258.6 595.0L254.9 599.0L251.2 597.1L254.9 593.2z"/>
<path fill="#00bfff" d="M251.2 597.1L247.5 600.6L243.8 599.6L247.5 596.1z"/>
<path fill="#00bfff" d="M243.8 599.6L240.1 602.8L236.4 602.5L240.1 599.2z"/>
<path fill="#008fff" d="M229.0 606.3L225.3 608.5L221.6 611.4L225.3 609.3z"/>
<path fill="#0070ff" d="M221.6 611.4L217.8 613.2L214.2 618.1L217.9 616.4z"/>
<path fill="#0000df" d="M191.9 642.3L188.2 642.4L184.5 650.0L188.2 649.8z"/>
<path fill="#00afff" d="M236.4 602.5L232.7 605.3L229.0 606.3L232.7 603.5z"/>
<path fill="#0050ff" d="M214.2 618.1L210.4 619.6L206.7 626.0L210.5 624.5z"/>
<path fill="#0030ff" d="M206.7 626.0L203.0 627.2L199.3 634.2L203.1 633.0z"/>
<path fill="#0000ff" d="M199.3 634.2L195.6 635.0L191.9 642.3L195.6 641.5z"/>
<path fill="#0000bf" d="M184.5 650.0L180.8 649.7L177.1 657.6L180.8 657.8z"/>
<path fill="#00cfff" d="M262.3 597.9L258.6 601.8L254.9 599.0L258.6 595.0z"/>
<path fill="#00bfff" d="M254.9 599.0L251.2 602.5L247.5 600.6L251.2 597.1z"/>
<path fill="#00bfff" d="M247.5 600.6L243.8 603.9L240.1 602.8L243.8 599.6z"/>
<path fill="#00afff" d="M240.1 602.8L236.4 605.7L232.7 605.3L236.4 602.5z"/>
<path fill="#009fff" d="M232.7 605.3L228.9 607.5L225.3 608.5L229.0 606.3z"/>
<path fill="#008fff" d="M225.3 608.5L221.5 610.2L217.8 613.2L221.6 611.4z"/>
<path fill="#0070ff" d="M217.8 613.2L214.1 614.7L210.4 619.6L214.2 618.1z"/>
<path fill="#0050ff" d="M210.4 619.6L206.7 620.8L203.0 627.2L206.7 626.0z"/>
<path fill="#0030ff" d="M203.0 627.2L199.3 628.0L195.6 635.0L199.3 634.2z"/>
<path fill="#0010ff" d="M195.6 635.0L191.9 635.2L188.2 642.4L191.9 642.3z"/>
<path fill="#0000df" d="M188.2 642.4L184.5 642.2L180.8 649.7L184.5 650.0z"/>
<path fill="#0000bf" d="M180.8 649.7L177.1 649.2L173.4 657.1L177.1 657.6z"/>
<path fill="#00bfff" d="M266.0 601.7L262.3 605.6L258.6 601.8L262.3 597.9z"/>
<path fill="#00bfff" d="M258.6 601.8L254.9 605.3L251.2 602.5L254.9 599.0z"/>
<path fill="#00bfff" d="M251.2 602.5L247.5 605.7L243.8 603.9L247.5 600.6z"/>
<path fill="#00afff" d="M243.8 603.9L240.1 606.7L236.4 605.7L240.1 602.8z"/>
<path fill="#00afff" d="M236.4 605.7L232.6 607.8L228.9 607.5L232.7 605.3z"/>
<path fill="#009fff" d="M228.9 607.5L225.2 609.2L221.5 610.2L225.3 608.5z"/>
<path fill="#008fff" d="M221.5 610.2L217.8 611.7L214.1 614.7L217.8 613.2z"/>
<path fill="#0070ff" d="M214.1 614.7L210.4 615.9L206.7 620.8L210.4 619.6z"/>
<path fill="#0050ff" d="M206.7 620.8L203.0 621.6L199.3 628.0L203.0 627.2z"/>
<path fill="#0030ff" d="M199.3 628.0L195.6 628.2L191.9 635.2L195.6 635.0z"/>
<path fill="#0010ff" d="M191.9 635.2L188.2 635.0L184.5 642.2L188.2 642.4z"/>
<path fill="#0000ef" d="M184.5 642.2L180.8 641.7L177.1 649.2L180.8 649.7z"/>
<path fill="#0000cf" d="M177.1 649.2L173.4 648.1L169.7 656.0L173.4 657.1z"/>
<path fill="#00bfff" d="M254.9 605.3L251.2 608.6L247.5 605.7L251.2 602.5z"/>
<path fill="#00afff" d="M247.5 605.7L243.7 608.6L240.1 606.7L243.8 603.9z"/>
<path fill="#00afff" d="M240.1 606.7L236.3 608.9L232.6 607.8L236.4 605.7z"/>
<path fill="#008fff" d="M217.8 611.7L214.1 613.0L210.4 615.9L214.1 614.7z"/>
<path fill="#0080ff" d="M210.4 615.9L206.7 616.7L203.0 621.6L206.7 620.8z"/>
<path fill="#0000ff" d="M180.8 641.7L177.1 640.6L173.4 648.1L177.1 649.2z"/>
<path fill="#00afff" d="M269.7 606.0L266.0 609.9L262.3 605.6L266.0 601.7z"/>
<path fill="#00bfff" d="M262.3 605.6L258.6 609.1L254.9 605.3L258.6 601.8z"/>
<path fill="#00afff" d="M232.6 607.8L228.9 609.6L225.2 609.2L228.9 607.5z"/>
<path fill="#009fff" d="M225.2 609.2L221.5 610.7L217.8 611.7L221.5 610.2z"/>
<path fill="#0060ff" d="M203.0 621.6L199.3 621.8L195.6 628.2L199.3 628.0z"/>
<path fill="#0040ff" d="M195.6 628.2L191.9 628.0L188.2 635.0L191.9 635.2z"/>
<path fill="#0000df" d="M173.4 648.1L169.6 646.4L165.9 654.3L169.7 656.0z"/>
<path fill="#0020ff" d="M188.2 635.0L184.5 634.4L180.8 641.7L184.5 642.2z"/>
<path fill="#00afff" d="M273.4 610.6L269.7 614.5L266.0 609.9L269.7 606.0z"/>
<path fill="#00afff" d="M266.0 609.9L262.3 613.4L258.6 609.1L262.3 605.6z"/>
<path fill="#00afff" d="M258.6 609.1L254.8 612.3L251.2 608.6L254.9 605.3z"/>
<path fill="#00afff" d="M251.2 608.6L247.4 611.4L243.7 608.6L247.5 605.7z"/>
<path fill="#00afff" d="M243.7 608.6L240.0 610.7L236.3 608.9L240.1 606.7z"/>
<path fill="#00afff" d="M236.3 608.9L232.6 610.6L228.9 609.6L232.6 607.8z"/>
<path fill="#00afff" d="M228.9 609.6L225.2 611.0L221.5 610.7L225.2 609.2z"/>
<path fill="#009fff" d="M221.5 610.7L217.8 611.9L214.1 613.0L217.8 611.7z"/>
<path fill="#008fff" d="M214.1 613.0L210.4 613.8L206.7 616.7L210.4 615.9z"/>
<path fill="#0080ff" d="M206.7 616.7L203.0 616.9L199.3 621.8L203.0 621.6z"/>
<path fill="#0060ff" d="M199.3 621.8L195.6 621.6L191.9 628.0L195.6 628.2z"/>
<path fill="#0040ff" d="M191.9 628.0L188.2 627.4L184.5 634.4L188.2 635.0z"/>
<path fill="#0020ff" d="M184.5 634.4L180.7 633.4L177.1 640.6L180.8 641.7z"/>
<path fill="#0000ff" d="M177.1 640.6L173.3 638.9L169.6 646.4L173.4 648.1z"/>
<path fill="#0000ef" d="M169.6 646.4L165.9 643.9L162.2 651.8L165.9 654.3z"/>
<path fill="#00afff" d="M247.4 611.4L243.7 613.6L240.0 610.7L243.7 608.6z"/>
<path fill="#009fff" d="M277.1 615.2L273.4 619.2L269.7 614.5L273.4 610.6z"/>
<path fill="#00afff" d="M240.0 610.7L236.3 612.4L232.6 610.6L236.3 608.9z"/>
<path fill="#00afff" d="M232.6 610.6L228.9 612.1L225.2 611.0L228.9 609.6z"/>
<path fill="#008fff" d="M210.4 613.8L206.7 613.9L203.0 616.9L206.7 616.7z"/>
<path fill="#0080ff" d="M203.0 616.9L199.3 616.6L195.6 621.6L199.3 621.8z"/>
<path fill="#009fff" d="M269.7 614.5L265.9 618.0L262.3 613.4L266.0 609.9z"/>
<path fill="#009fff" d="M262.3 613.4L258.5 616.7L254.8 612.3L258.6 609.1z"/>
<path fill="#00afff" d="M254.8 612.3L251.1 615.2L247.4 611.4L251.2 608.6z"/>
<path fill="#00afff" d="M225.2 611.0L221.5 612.3L217.8 611.9L221.5 610.7z"/>
<path fill="#009fff" d="M217.8 611.9L214.1 612.7L210.4 613.8L214.1 613.0z"/>
<path fill="#0070ff" d="M195.6 621.6L191.8 621.0L188.2 627.4L191.9 628.0z"/>
<path fill="#0050ff" d="M188.2 627.4L184.4 626.4L180.7 633.4L184.5 634.4z"/>
<path fill="#0030ff" d="M180.7 633.4L177.0 631.7L173.3 638.9L177.1 640.6z"/>
<path fill="#0020ff" d="M173.3 638.9L169.6 636.4L165.9 643.9L169.6 646.4z"/>
<path fill="#0000ff" d="M165.9 643.9L162.2 640.4L158.5 648.2L162.2 651.8z"/>
<path fill="#008fff" d="M280.8 619.9L277.1 623.8L273.4 619.2L277.1 615.2z"/>
<path fill="#008fff" d="M273.4 619.2L269.6 622.7L265.9 618.0L269.7 614.5z"/>
<path fill="#008fff" d="M265.9 618.0L262.2 621.3L258.5 616.7L262.3 613.4z"/>
<path fill="#009fff" d="M251.1 615.2L247.4 617.3L243.7 613.6L247.4 611.4z"/>
<path fill="#00afff" d="M243.7 613.6L240.0 615.3L236.3 612.4L240.0 610.7z"/>
<path fill="#00afff" d="M236.3 612.4L232.6 613.9L228.9 612.1L232.6 610.6z"/>
<path fill="#00afff" d="M228.9 612.1L225.2 613.3L221.5 612.3L225.2 611.0z"/>
<path fill="#00afff" d="M221.5 612.3L217.8 613.1L214.1 612.7L217.8 611.9z"/>
<path fill="#009fff" d="M206.7 613.9L202.9 613.7L199.3 616.6L203.0 616.9z"/>
<path fill="#008fff" d="M199.3 616.6L195.5 616.1L191.8 621.0L195.6 621.6z"/>
<path fill="#0070ff" d="M191.8 621.0L188.1 620.0L184.4 626.4L188.2 627.4z"/>
<path fill="#0030ff" d="M169.6 636.4L165.9 632.9L162.2 640.4L165.9 643.9z"/>
<path fill="#0020ff" d="M162.2 640.4L158.5 635.7L154.8 643.6L158.5 648.2z"/>
<path fill="#009fff" d="M258.5 616.7L254.8 619.5L251.1 615.2L254.8 612.3z"/>
<path fill="#00afff" d="M214.1 612.7L210.4 612.9L206.7 613.9L210.4 613.8z"/>
<path fill="#0060ff" d="M184.4 626.4L180.7 624.7L177.0 631.7L180.7 633.4z"/>
<path fill="#0040ff" d="M177.0 631.7L173.3 629.1L169.6 636.4L173.3 638.9z"/>
<path fill="#00afff" d="M240.0 615.3L236.3 616.8L232.6 613.9L236.3 612.4z"/>
<path fill="#0080ff" d="M284.5 624.6L280.7 628.5L277.1 623.8L280.8 619.9z"/>
<path fill="#0080ff" d="M277.1 623.8L273.3 627.3L269.6 622.7L273.4 619.2z"/>
<path fill="#0080ff" d="M269.6 622.7L265.9 625.9L262.2 621.3L265.9 618.0z"/>
<path fill="#008fff" d="M262.2 621.3L258.5 624.1L254.8 619.5L258.5 616.7z"/>
<path fill="#008fff" d="M254.8 619.5L251.1 621.7L247.4 617.3L251.1 615.2z"/>
<path fill="#009fff" d="M247.4 617.3L243.7 619.1L240.0 615.3L243.7 613.6z"/>
<path fill="#00afff" d="M232.6 613.9L228.9 615.2L225.2 613.3L228.9 612.1z"/>
<path fill="#00afff" d="M225.2 613.3L221.5 614.1L217.8 613.1L221.5 612.3z"/>
<path fill="#00afff" d="M217.8 613.1L214.1 613.2L210.4 612.9L214.1 612.7z"/>
<path fill="#00afff" d="M210.4 612.9L206.6 612.7L202.9 613.7L206.7 613.9z"/>
<path fill="#00afff" d="M202.9 613.7L199.2 613.2L195.5 616.1L199.3 616.6z"/>
<path fill="#009fff" d="M195.5 616.1L191.8 615.1L188.1 620.0L191.8 621.0z"/>
<path fill="#0080ff" d="M188.1 620.0L184.4 618.3L180.7 624.7L184.4 626.4z"/>
<path fill="#0070ff" d="M180.7 624.7L177.0 622.1L173.3 629.1L177.0 631.7z"/>
<path fill="#0060ff" d="M173.3 629.1L169.6 625.6L165.9 632.9L169.6 636.4z"/>
<path fill="#0050ff" d="M165.9 632.9L162.2 628.2L158.5 635.7L162.2 640.4z"/>
<path fill="#0040ff" d="M158.5 635.7L154.8 629.7L151.1 637.6L154.8 643.6z"/>
<path fill="#0070ff" d="M273.3 627.3L269.6 630.6L265.9 625.9L269.6 622.7z"/>
<path fill="#00afff" d="M236.3 616.8L232.6 618.0L228.9 615.2L232.6 613.9z"/>
<path fill="#00afff" d="M228.9 615.2L225.2 616.0L221.5 614.1L225.2 613.3z"/>
<path fill="#00afff" d="M199.2 613.2L195.5 612.1L191.8 615.1L195.5 616.1z"/>
<path fill="#0070ff" d="M162.2 628.2L158.5 622.2L154.8 629.7L158.5 635.7z"/>
<path fill="#0070ff" d="M288.2 629.5L284.4 633.4L280.7 628.5L284.5 624.6z"/>
<path fill="#0070ff" d="M280.7 628.5L277.0 632.0L273.3 627.3L277.1 623.8z"/>
<path fill="#0080ff" d="M265.9 625.9L262.2 628.8L258.5 624.1L262.2 621.3z"/>
<path fill="#008fff" d="M258.5 624.1L254.8 626.2L251.1 621.7L254.8 619.5z"/>
<path fill="#009fff" d="M243.7 619.1L240.0 620.6L236.3 616.8L240.0 615.3z"/>
<path fill="#00afff" d="M221.5 614.1L217.7 614.3L214.1 613.2L217.8 613.1z"/>
<path fill="#00bfff" d="M214.1 613.2L210.3 613.0L206.6 612.7L210.4 612.9z"/>
<path fill="#009fff" d="M191.8 615.1L188.1 613.3L184.4 618.3L188.1 620.0z"/>
<path fill="#0060ff" d="M154.8 629.7L151.1 622.4L147.4 630.3L151.1 637.6z"/>
<path fill="#008fff" d="M251.1 621.7L247.4 623.4L243.7 619.1L247.4 617.3z"/>
<path fill="#00bfff" d="M206.6 612.7L202.9 612.2L199.2 613.2L202.9 613.7z"/>
<path fill="#008fff" d="M184.4 618.3L180.7 615.7L177.0 622.1L180.7 624.7z"/>
<path fill="#0080ff" d="M177.0 622.1L173.3 618.6L169.6 625.6L173.3 629.1z"/>
<path fill="#0070ff" d="M169.6 625.6L165.9 620.9L162.2 628.2L165.9 632.9z"/>
<path fill="#0060ff" d="M291.8 633.9L288.1 637.8L284.4 633.4L288.2 629.5z"/>
<path fill="#0060ff" d="M284.4 633.4L280.7 636.9L277.0 632.0L280.7 628.5z"/>
<path fill="#0060ff" d="M277.0 632.0L273.3 635.3L269.6 630.6L273.3 627.3z"/>
<path fill="#0070ff" d="M269.6 630.6L265.9 633.4L262.2 628.8L265.9 625.9z"/>
<path fill="#0080ff" d="M262.2 628.8L258.5 630.9L254.8 626.2L258.5 624.1z"/>
<path fill="#0080ff" d="M254.8 626.2L251.1 628.0L247.4 623.4L251.1 621.7z"/>
<path fill="#009fff" d="M240.0 620.6L236.3 621.8L232.6 618.0L236.3 616.8z"/>
<path fill="#00afff" d="M232.6 618.0L228.8 618.8L225.2 616.0L228.9 615.2z"/>
<path fill="#00afff" d="M225.2 616.0L221.4 616.1L217.7 614.3L221.5 614.1z"/>
<path fill="#00bfff" d="M217.7 614.3L214.0 614.1L210.3 613.0L214.1 613.2z"/>
<path fill="#00bfff" d="M210.3 613.0L206.6 612.5L202.9 612.2L206.6 612.7z"/>
<path fill="#00bfff" d="M202.9 612.2L199.2 611.1L195.5 612.1L199.2 613.2z"/>
<path fill="#00bfff" d="M195.5 612.1L191.8 610.4L188.1 613.3L191.8 615.1z"/>
<path fill="#00bfff" d="M188.1 613.3L184.4 610.8L180.7 615.7L184.4 618.3z"/>
<path fill="#00afff" d="M180.7 615.7L177.0 612.2L173.3 618.6L177.0 622.1z"/>
<path fill="#009fff" d="M173.3 618.6L169.6 613.9L165.9 620.9L169.6 625.6z"/>
<path fill="#008fff" d="M165.9 620.9L162.2 614.9L158.5 622.2L162.2 628.2z"/>
<path fill="#008fff" d="M158.5 622.2L154.7 614.9L151.1 622.4L154.8 629.7z"/>
<path fill="#008fff" d="M151.1 622.4L147.3 613.8L143.6 621.7L147.4 630.3z"/>
<path fill="#008fff" d="M247.4 623.4L243.7 624.9L240.0 620.6L243.7 619.1z"/>
<path fill="#0070ff" d="M265.9 633.4L262.2 635.6L258.5 630.9L262.2 628.8z"/>
<path fill="#00afff" d="M228.8 618.8L225.1 619.0L221.4 616.1L225.2 616.0z"/>
<path fill="#00bfff" d="M221.4 616.1L217.7 615.9L214.0 614.1L217.7 614.3z"/>
<path fill="#0050ff" d="M295.5 637.3L291.8 641.3L288.1 637.8L291.8 633.9z"/>
<path fill="#0050ff" d="M288.1 637.8L284.4 641.3L280.7 636.9L284.4 633.4z"/>
<path fill="#0050ff" d="M280.7 636.9L277.0 640.2L273.3 635.3L277.0 632.0z"/>
<path fill="#0060ff" d="M273.3 635.3L269.6 638.1L265.9 633.4L269.6 630.6z"/>
<path fill="#0070ff" d="M258.5 630.9L254.8 632.7L251.1 628.0L254.8 626.2z"/>
<path fill="#0080ff" d="M251.1 628.0L247.4 629.5L243.7 624.9L247.4 623.4z"/>
<path fill="#008fff" d="M243.7 624.9L239.9 626.1L236.3 621.8L240.0 620.6z"/>
<path fill="#009fff" d="M236.3 621.8L232.5 622.6L228.8 618.8L232.6 618.0z"/>
<path fill="#00bfff" d="M214.0 614.1L210.3 613.5L206.6 612.5L210.3 613.0z"/>
<path fill="#00cfff" d="M206.6 612.5L202.9 611.4L199.2 611.1L202.9 612.2z"/>
<path fill="#00cfff" d="M199.2 611.1L195.5 609.4L191.8 610.4L195.5 612.1z"/>
<path fill="#00cfff" d="M191.8 610.4L188.1 607.9L184.4 610.8L188.1 613.3z"/>
<path fill="#00cfff" d="M184.4 610.8L180.7 607.3L177.0 612.2L180.7 615.7z"/>
<path fill="#00bfff" d="M177.0 612.2L173.3 607.5L169.6 613.9L173.3 618.6z"/>
<path fill="#00bfff" d="M169.6 613.9L165.8 607.9L162.2 614.9L165.9 620.9z"/>
<path fill="#00bfff" d="M162.2 614.9L158.4 607.6L154.7 614.9L158.5 622.2z"/>
<path fill="#00bfff" d="M154.7 614.9L151.0 606.3L147.3 613.8L151.1 622.4z"/>
<path fill="#00bfff" d="M147.3 613.8L143.6 604.1L139.9 611.9L143.6 621.7z"/>
<path fill="#0040ff" d="M284.4 641.3L280.7 644.6L277.0 640.2L280.7 636.9z"/>
<path fill="#0060ff" d="M269.6 638.1L265.9 640.3L262.2 635.6L265.9 633.4z"/>
<path fill="#0060ff" d="M262.2 635.6L258.5 637.3L254.8 632.7L258.5 630.9z"/>
<path fill="#00bfff" d="M225.1 619.0L221.4 618.8L217.7 615.9L221.4 616.1z"/>
<path fill="#00bfff" d="M217.7 615.9L214.0 615.4L210.3 613.5L214.0 614.1z"/>
<path fill="#00cfff" d="M210.3 613.5L206.6 612.5L202.9 611.4L206.6 612.5z"/>
<path fill="#00efff" d="M188.1 607.9L184.4 604.4L180.7 607.3L184.4 610.8z"/>
<path fill="#00efff" d="M180.7 607.3L176.9 602.6L173.3 607.5L177.0 612.2z"/>
<path fill="#00dfff" d="M173.3 607.5L169.5 601.5L165.8 607.9L169.6 613.9z"/>
<path fill="#00efff" d="M151.0 606.3L147.3 596.5L143.6 604.1L147.3 613.8z"/>
<path fill="#0050ff" d="M299.2 640.1L295.5 644.1L291.8 641.3L295.5 637.3z"/>
<path fill="#0040ff" d="M291.8 641.3L288.1 644.8L284.4 641.3L288.1 637.8z"/>
<path fill="#0050ff" d="M277.0 640.2L273.3 643.0L269.6 638.1L273.3 635.3z"/>
<path fill="#0070ff" d="M254.8 632.7L251.1 634.1L247.4 629.5L251.1 628.0z"/>
<path fill="#0080ff" d="M247.4 629.5L243.6 630.7L239.9 626.1L243.7 624.9z"/>
<path fill="#008fff" d="M239.9 626.1L236.2 626.9L232.5 622.6L236.3 621.8z"/>
<path fill="#00afff" d="M232.5 622.6L228.8 622.8L225.1 619.0L228.8 618.8z"/>
<path fill="#00dfff" d="M202.9 611.4L199.2 609.7L195.5 609.4L199.2 611.1z"/>
<path fill="#00dfff" d="M165.8 607.9L162.1 600.7L158.4 607.6L162.2 614.9z"/>
<path fill="#00ffff" d="M143.6 604.1L139.9 593.5L136.2 601.3L139.9 611.9z"/>
<path fill="#00dfff" d="M195.5 609.4L191.8 606.9L188.1 607.9L191.8 610.4z"/>
<path fill="#00efff" d="M158.4 607.6L154.7 599.1L151.0 606.3L154.7 614.9z"/>
<path fill="#0040ff" d="M302.9 642.9L299.2 646.8L295.5 644.1L299.2 640.1z"/>
<path fill="#0040ff" d="M295.5 644.1L291.8 647.6L288.1 644.8L291.8 641.3z"/>
<path fill="#0040ff" d="M288.1 644.8L284.4 648.0L280.7 644.6L284.4 641.3z"/>
<path fill="#0040ff" d="M280.7 644.6L277.0 647.4L273.3 643.0L277.0 640.2z"/>
<path fill="#0050ff" d="M273.3 643.0L269.6 645.2L265.9 640.3L269.6 638.1z"/>
<path fill="#0060ff" d="M265.9 640.3L262.2 642.0L258.5 637.3L262.2 635.6z"/>
<path fill="#0060ff" d="M258.5 637.3L254.7 638.8L251.1 634.1L254.8 632.7z"/>
<path fill="#0070ff" d="M251.1 634.1L247.3 635.4L243.6 630.7L247.4 629.5z"/>
<path fill="#008fff" d="M243.6 630.7L239.9 631.5L236.2 626.9L239.9 626.1z"/>
<path fill="#009fff" d="M236.2 626.9L232.5 627.1L228.8 622.8L232.5 622.6z"/>
<path fill="#00afff" d="M228.8 622.8L225.1 622.6L221.4 618.8L225.1 619.0z"/>
<path fill="#00bfff" d="M221.4 618.8L217.7 618.2L214.0 615.4L217.7 615.9z"/>
<path fill="#00cfff" d="M214.0 615.4L210.3 614.3L206.6 612.5L210.3 613.5z"/>
<path fill="#00dfff" d="M206.6 612.5L202.9 610.8L199.2 609.7L202.9 611.4z"/>
<path fill="#00efff" d="M199.2 609.7L195.5 607.2L191.8 606.9L195.5 609.4z"/>
<path fill="#00ffff" d="M191.8 606.9L188.1 603.3L184.4 604.4L188.1 607.9z"/>
<path fill="#00ffff" d="M184.4 604.4L180.6 599.7L176.9 602.6L180.7 607.3z"/>
<path fill="#10ffef" d="M176.9 602.6L173.2 596.6L169.5 601.5L173.3 607.5z"/>
<path fill="#10ffef" d="M169.5 601.5L165.8 594.3L162.1 600.7L165.8 607.9z"/>
<path fill="#10ffef" d="M162.1 600.7L158.4 592.1L154.7 599.1L158.4 607.6z"/>
<path fill="#20ffdf" d="M154.7 599.1L151.0 589.3L147.3 596.5L151.0 606.3z"/>
<path fill="#30ffcf" d="M147.3 596.5L143.6 586.0L139.9 593.5L143.6 604.1z"/>
<path fill="#40ffbf" d="M139.9 593.5L136.2 582.8L132.5 590.6L136.2 601.3z"/>
<path fill="#00cfff" d="M217.7 618.2L214.0 617.2L210.3 614.3L214.0 615.4z"/>
<path fill="#20ffdf" d="M180.6 599.7L176.9 593.7L173.2 596.6L176.9 602.6z"/>
<path fill="#0040ff" d="M306.6 645.6L302.9 649.5L299.2 646.8L302.9 642.9z"/>
<path fill="#0040ff" d="M277.0 647.4L273.3 649.6L269.6 645.2L273.3 643.0z"/>
<path fill="#0050ff" d="M262.2 642.0L258.4 643.5L254.7 638.8L258.5 637.3z"/>
<path fill="#0070ff" d="M254.7 638.8L251.0 640.0L247.3 635.4L251.1 634.1z"/>
<path fill="#0080ff" d="M247.3 635.4L243.6 636.2L239.9 631.5L243.6 630.7z"/>
<path fill="#008fff" d="M239.9 631.5L236.2 631.7L232.5 627.1L236.2 626.9z"/>
<path fill="#00dfff" d="M210.3 614.3L206.6 612.6L202.9 610.8L206.6 612.5z"/>
<path fill="#30ffcf" d="M173.2 596.6L169.5 589.3L165.8 594.3L169.5 601.5z"/>
<path fill="#0030ff" d="M299.2 646.8L295.5 650.3L291.8 647.6L295.5 644.1z"/>
<path fill="#0030ff" d="M291.8 647.6L288.1 650.8L284.4 648.0L288.1 644.8z"/>
<path fill="#0030ff" d="M284.4 648.0L280.7 650.9L277.0 647.4L280.7 644.6z"/>
<path fill="#0050ff" d="M269.6 645.2L265.8 646.9L262.2 642.0L265.9 640.3z"/>
<path fill="#009fff" d="M232.5 627.1L228.8 626.9L225.1 622.6L228.8 622.8z"/>
<path fill="#00bfff" d="M225.1 622.6L221.4 622.0L217.7 618.2L221.4 618.8z"/>
<path fill="#00efff" d="M202.9 610.8L199.2 608.2L195.5 607.2L199.2 609.7z"/>
<path fill="#00ffff" d="M195.5 607.2L191.7 603.7L188.1 603.3L191.8 606.9z"/>
<path fill="#10ffef" d="M188.1 603.3L184.3 598.6L180.6 599.7L184.4 604.4z"/>
<path fill="#40ffbf" d="M165.8 594.3L162.1 585.7L158.4 592.1L162.1 600.7z"/>
<path fill="#50ffaf" d="M158.4 592.1L154.7 582.3L151.0 589.3L154.7 599.1z"/>
<path fill="#808080" d="M151.0 589.3L147.3 578.7L143.6 586.0L147.3 596.5z"/>
<path fill="#808080" d="M143.6 586.0L139.9 575.3L136.2 582.8L139.9 593.5z"/>
<path fill="#808080" d="M136.2 582.8L132.5 572.3L128.8 580.1L132.5 590.6z"/>
<path fill="#0030ff" d="M310.3 648.1L306.6 652.0L302.9 649.5L306.6 645.6z"/>
<path fill="#0030ff" d="M302.9 649.5L299.2 653.1L295.5 650.3L299.2 646.8z"/>
<path fill="#0030ff" d="M295.5 650.3L291.8 653.6L288.1 650.8L291.8 647.6z"/>
<path fill="#0030ff" d="M280.7 650.9L276.9 653.0L273.3 649.6L277.0 647.4z"/>
<path fill="#0040ff" d="M273.3 649.6L269.5 651.3L265.8 646.9L269.6 645.2z"/>
<path fill="#0060ff" d="M258.4 643.5L254.7 644.7L251.0 640.0L254.7 638.8z"/>
<path fill="#0070ff" d="M251.0 640.0L247.3 640.8L243.6 636.2L247.3 635.4z"/>
<path fill="#0080ff" d="M243.6 636.2L239.9 636.3L236.2 631.7L239.9 631.5z"/>
<path fill="#00bfff" d="M221.4 622.0L217.7 621.0L214.0 617.2L217.7 618.2z"/>
<path fill="#00dfff" d="M214.0 617.2L210.3 615.5L206.6 612.6L210.3 614.3z"/>
<path fill="#00efff" d="M206.6 612.6L202.8 610.1L199.2 608.2L202.9 610.8z"/>
<path fill="#00ffff" d="M199.2 608.2L195.4 604.7L191.7 603.7L195.5 607.2z"/>
<path fill="#20ffdf" d="M191.7 603.7L188.0 599.0L184.3 598.6L188.1 603.3z"/>
<path fill="#30ffcf" d="M184.3 598.6L180.6 592.7L176.9 593.7L180.6 599.7z"/>
<path fill="#50ffaf" d="M176.9 593.7L173.2 586.4L169.5 589.3L173.2 596.6z"/>
<path fill="#808080" d="M169.5 589.3L165.8 580.7L162.1 585.7L165.8 594.3z"/>
<path fill="#808080" d="M162.1 585.7L158.4 575.9L154.7 582.3L158.4 592.1z"/>
<path fill="#808080" d="M139.9 575.3L136.2 564.8L132.5 572.3L136.2 582.8z"/>
<path fill="#808080" d="M132.5 572.3L128.7 562.6L125.1 570.5L128.8 580.1z"/>
<path fill="#0030ff" d="M288.1 650.8L284.4 653.7L280.7 650.9L284.4 648.0z"/>
<path fill="#0040ff" d="M265.8 646.9L262.1 648.4L258.4 643.5L262.2 642.0z"/>
<path fill="#008fff" d="M236.2 631.7L232.5 631.5L228.8 626.9L232.5 627.1z"/>
<path fill="#00afff" d="M228.8 626.9L225.1 626.3L221.4 622.0L225.1 622.6z"/>
<path fill="#808080" d="M154.7 582.3L151.0 571.7L147.3 578.7L151.0 589.3z"/>
<path fill="#808080" d="M147.3 578.7L143.6 568.0L139.9 575.3L143.6 586.0z"/>
<path fill="#0070ff" d="M247.3 640.8L243.6 641.0L239.9 636.3L243.6 636.2z"/>
<path fill="#0030ff" d="M314.0 650.0L310.3 653.9L306.6 652.0L310.3 648.1z"/>
<path fill="#0030ff" d="M306.6 652.0L302.9 655.5L299.2 653.1L302.9 649.5z"/>
<path fill="#0020ff" d="M299.2 653.1L295.5 656.3L291.8 653.6L295.5 650.3z"/>
<path fill="#0020ff" d="M291.8 653.6L288.1 656.4L284.4 653.7L288.1 650.8z"/>
<path fill="#0020ff" d="M284.4 653.7L280.6 655.8L276.9 653.0L280.7 650.9z"/>
<path fill="#0030ff" d="M276.9 653.0L273.2 654.8L269.5 651.3L273.3 649.6z"/>
<path fill="#0040ff" d="M269.5 651.3L265.8 652.8L262.1 648.4L265.8 646.9z"/>
<path fill="#0050ff" d="M262.1 648.4L258.4 649.6L254.7 644.7L258.4 643.5z"/>
<path fill="#0060ff" d="M254.7 644.7L251.0 645.5L247.3 640.8L251.0 640.0z"/>
<path fill="#0080ff" d="M239.9 636.3L236.2 636.1L232.5 631.5L236.2 631.7z"/>
<path fill="#009fff" d="M232.5 631.5L228.8 630.9L225.1 626.3L228.8 626.9z"/>
<path fill="#00afff" d="M225.1 626.3L221.4 625.3L217.7 621.0L221.4 622.0z"/>
<path fill="#00cfff" d="M217.7 621.0L213.9 619.2L210.3 615.5L214.0 617.2z"/>
<path fill="#00efff" d="M210.3 615.5L206.5 613.0L202.8 610.1L206.6 612.6z"/>
<path fill="#00ffff" d="M202.8 610.1L199.1 606.6L195.4 604.7L199.2 608.2z"/>
<path fill="#20ffdf" d="M195.4 604.7L191.7 600.0L188.0 599.0L191.7 603.7z"/>
<path fill="#40ffbf" d="M188.0 599.0L184.3 593.0L180.6 592.7L184.3 598.6z"/>
<path fill="#808080" d="M180.6 592.7L176.9 585.4L173.2 586.4L176.9 593.7z"/>
<path fill="#808080" d="M173.2 586.4L169.5 577.8L165.8 580.7L169.5 589.3z"/>
<path fill="#808080" d="M165.8 580.7L162.1 571.0L158.4 575.9L162.1 585.7z"/>
<path fill="#808080" d="M158.4 575.9L154.7 565.3L151.0 571.7L154.7 582.3z"/>
<path fill="#808080" d="M136.2 564.8L132.4 555.1L128.7 562.6L132.5 572.3z"/>
<path fill="#808080" d="M128.7 562.6L125.0 554.8L121.3 562.6L125.1 570.5z"/>
<path fill="#808080" d="M151.0 571.7L147.3 561.0L143.6 568.0L147.3 578.7z"/>
<path fill="#808080" d="M143.6 568.0L139.8 557.5L136.2 564.8L139.9 575.3z"/>
<path fill="#0020ff" d="M302.9 655.5L299.2 658.8L295.5 656.3L299.2 653.1z"/>
<path fill="#00ffff" d="M206.5 613.0L202.8 609.4L199.1 606.6L202.8 610.1z"/>
<path fill="#20ffdf" d="M199.1 606.6L195.4 601.9L191.7 600.0L195.4 604.7z"/>
<path fill="#40ffbf" d="M191.7 600.0L188.0 594.1L184.3 593.0L188.0 599.0z"/>
<path fill="#808080" d="M169.5 577.8L165.8 568.0L162.1 571.0L165.8 580.7z"/>
<path fill="#808080" d="M132.4 555.1L128.7 547.3L125.0 554.8L128.7 562.6z"/>
<path fill="#0030ff" d="M317.7 651.0L314.0 655.0L310.3 653.9L314.0 650.0z"/>
<path fill="#0030ff" d="M310.3 653.9L306.6 657.4L302.9 655.5L306.6 652.0z"/>
<path fill="#0020ff" d="M295.5 656.3L291.7 659.1L288.1 656.4L291.8 653.6z"/>
<path fill="#0020ff" d="M288.1 656.4L284.3 658.6L280.6 655.8L284.4 653.7z"/>
<path fill="#0030ff" d="M273.2 654.8L269.5 656.2L265.8 652.8L269.5 651.3z"/>
<path fill="#0040ff" d="M265.8 652.8L262.1 654.0L258.4 649.6L262.1 648.4z"/>
<path fill="#0050ff" d="M258.4 649.6L254.7 650.4L251.0 645.5L254.7 644.7z"/>
<path fill="#0060ff" d="M251.0 645.5L247.3 645.7L243.6 641.0L247.3 640.8z"/>
<path fill="#0070ff" d="M243.6 641.0L239.9 640.8L236.2 636.1L239.9 636.3z"/>
<path fill="#008fff" d="M236.2 636.1L232.5 635.6L228.8 630.9L232.5 631.5z"/>
<path fill="#00afff" d="M228.8 630.9L225.1 629.9L221.4 625.3L225.1 626.3z"/>
<path fill="#808080" d="M184.3 593.0L180.6 585.7L176.9 585.4L180.6 592.7z"/>
<path fill="#808080" d="M162.1 571.0L158.4 560.4L154.7 565.3L158.4 575.9z"/>
<path fill="#808080" d="M125.0 554.8L121.3 549.8L117.6 557.7L121.3 562.6z"/>
<path fill="#0020ff" d="M280.6 655.8L276.9 657.6L273.2 654.8L276.9 653.0z"/>
<path fill="#00bfff" d="M221.4 625.3L217.6 623.6L213.9 619.2L217.7 621.0z"/>
<path fill="#00dfff" d="M213.9 619.2L210.2 616.7L206.5 613.0L210.3 615.5z"/>
<path fill="#808080" d="M176.9 585.4L173.2 576.8L169.5 577.8L173.2 586.4z"/>
<path fill="#808080" d="M154.7 565.3L150.9 554.6L147.3 561.0L151.0 571.7z"/>
<path fill="#808080" d="M147.3 561.0L143.5 550.5L139.8 557.5L143.6 568.0z"/>
<path fill="#808080" d="M139.8 557.5L136.1 547.8L132.4 555.1L136.2 564.8z"/>
<path fill="#20ffdf" d="M202.8 609.4L199.1 604.7L195.4 601.9L199.1 606.6z"/>
<path fill="#40ffbf" d="M195.4 601.9L191.7 595.9L188.0 594.1L191.7 600.0z"/>
<path fill="#0030ff" d="M321.4 651.6L317.7 655.5L314.0 655.0L317.7 651.0z"/>
<path fill="#0020ff" d="M306.6 657.4L302.8 660.7L299.2 658.8L302.9 655.5z"/>
<path fill="#0020ff" d="M299.2 658.8L295.4 661.6L291.7 659.1L295.5 656.3z"/>
<path fill="#0020ff" d="M291.7 659.1L288.0 661.3L284.3 658.6L288.1 656.4z"/>
<path fill="#0040ff" d="M262.1 654.0L258.4 654.8L254.7 650.4L258.4 649.6z"/>
<path fill="#0050ff" d="M254.7 650.4L251.0 650.6L247.3 645.7L251.0 645.5z"/>
<path fill="#0060ff" d="M247.3 645.7L243.6 645.5L239.9 640.8L243.6 641.0z"/>
<path fill="#0080ff" d="M239.9 640.8L236.2 640.2L232.5 635.6L236.2 636.1z"/>
<path fill="#009fff" d="M232.5 635.6L228.7 634.5L225.1 629.9L228.8 630.9z"/>
<path fill="#808080" d="M188.0 594.1L184.3 586.8L180.6 585.7L184.3 593.0z"/>
<path fill="#808080" d="M165.8 568.0L162.1 557.5L158.4 560.4L162.1 571.0z"/>
<path fill="#808080" d="M128.7 547.3L125.0 542.3L121.3 549.8L125.0 554.8z"/>
<path fill="#0030ff" d="M314.0 655.0L310.3 658.5L306.6 657.4L310.3 653.9z"/>
<path fill="#0020ff" d="M284.3 658.6L280.6 660.3L276.9 657.6L280.6 655.8z"/>
<path fill="#0030ff" d="M269.5 656.2L265.8 657.5L262.1 654.0L265.8 652.8z"/>
<path fill="#00afff" d="M225.1 629.9L221.3 628.2L217.6 623.6L221.4 625.3z"/>
<path fill="#00ffff" d="M210.2 616.7L206.5 613.2L202.8 609.4L206.5 613.0z"/>
<path fill="#808080" d="M180.6 585.7L176.9 577.1L173.2 576.8L176.9 585.4z"/>
<path fill="#808080" d="M173.2 576.8L169.5 567.0L165.8 568.0L169.5 577.8z"/>
<path fill="#808080" d="M158.4 560.4L154.6 549.7L150.9 554.6L154.7 565.3z"/>
<path fill="#808080" d="M150.9 554.6L147.2 544.1L143.5 550.5L147.3 561.0z"/>
<path fill="#808080" d="M143.5 550.5L139.8 540.9L136.1 547.8L139.8 557.5z"/>
<path fill="#808080" d="M136.1 547.8L132.4 540.0L128.7 547.3L132.4 555.1z"/>
<path fill="#0020ff" d="M276.9 657.6L273.2 659.0L269.5 656.2L273.2 654.8z"/>
<path fill="#00cfff" d="M217.6 623.6L213.9 621.0L210.2 616.7L213.9 619.2z"/>
<path fill="#808080" d="M121.3 549.8L117.6 549.2L113.9 557.0L117.6 557.7z"/>
<path fill="#40ffbf" d="M199.1 604.7L195.4 598.8L191.7 595.9L195.4 601.9z"/>
<path fill="#0040ff" d="M325.1 651.9L321.4 655.8L317.7 655.5L321.4 651.6z"/>
<path fill="#0010ff" d="M295.4 661.6L291.7 663.7L288.0 661.3L291.7 659.1z"/>
<path fill="#0040ff" d="M258.4 654.8L254.7 655.0L251.0 650.6L254.7 650.4z"/>
<path fill="#008fff" d="M236.2 640.2L232.4 639.2L228.7 634.5L232.5 635.6z"/>
<path fill="#808080" d="M191.7 595.9L188.0 588.6L184.3 586.8L188.0 594.1z"/>
<path fill="#0030ff" d="M317.7 655.5L313.9 659.0L310.3 658.5L314.0 655.0z"/>
<path fill="#0020ff" d="M310.3 658.5L306.5 661.7L302.8 660.7L306.6 657.4z"/>
<path fill="#0010ff" d="M302.8 660.7L299.1 663.5L295.4 661.6L299.2 658.8z"/>
<path fill="#0020ff" d="M288.0 661.3L284.3 663.0L280.6 660.3L284.3 658.6z"/>
<path fill="#0030ff" d="M265.8 657.5L262.1 658.3L258.4 654.8L262.1 654.0z"/>
<path fill="#0070ff" d="M243.6 645.5L239.8 644.9L236.2 640.2L239.9 640.8z"/>
<path fill="#009fff" d="M228.7 634.5L225.0 632.8L221.3 628.2L225.1 629.9z"/>
<path fill="#10ffef" d="M206.5 613.2L202.8 608.5L199.1 604.7L202.8 609.4z"/>
<path fill="#808080" d="M184.3 586.8L180.6 578.2L176.9 577.1L180.6 585.7z"/>
<path fill="#808080" d="M176.9 577.1L173.2 567.3L169.5 567.0L173.2 576.8z"/>
<path fill="#808080" d="M162.1 557.5L158.3 546.8L154.6 549.7L158.4 560.4z"/>
<path fill="#808080" d="M154.6 549.7L150.9 539.2L147.2 544.1L150.9 554.6z"/>
<path fill="#808080" d="M147.2 544.1L143.5 534.5L139.8 540.9L143.5 550.5z"/>
<path fill="#808080" d="M139.8 540.9L136.1 533.0L132.4 540.0L136.1 547.8z"/>
<path fill="#0020ff" d="M280.6 660.3L276.9 661.8L273.2 659.0L276.9 657.6z"/>
<path fill="#0020ff" d="M273.2 659.0L269.5 660.3L265.8 657.5L269.5 656.2z"/>
<path fill="#0050ff" d="M251.0 650.6L247.3 650.4L243.6 645.5L247.3 645.7z"/>
<path fill="#00cfff" d="M221.3 628.2L217.6 625.6L213.9 621.0L217.6 623.6z"/>
<path fill="#00efff" d="M213.9 621.0L210.2 617.5L206.5 613.2L210.2 616.7z"/>
<path fill="#808080" d="M169.5 567.0L165.7 556.4L162.1 557.5L165.8 568.0z"/>
<path fill="#808080" d="M132.4 540.0L128.7 535.0L125.0 542.3L128.7 547.3z"/>
<path fill="#808080" d="M125.0 542.3L121.3 541.6L117.6 549.2L121.3 549.8z"/>
<path fill="#808080" d="M117.6 549.2L113.9 552.3L110.2 560.1L113.9 557.0z"/>
<path fill="#808080" d="M195.4 598.8L191.7 591.5L188.0 588.6L191.7 595.9z"/>
<path fill="#0020ff" d="M313.9 659.0L310.2 662.2L306.5 661.7L310.3 658.5z"/>
<path fill="#0010ff" d="M299.1 663.5L295.4 665.7L291.7 663.7L295.4 661.6z"/>
<path fill="#0010ff" d="M291.7 663.7L288.0 665.5L284.3 663.0L288.0 661.3z"/>
<path fill="#0080ff" d="M239.8 644.9L236.1 643.9L232.4 639.2L236.2 640.2z"/>
<path fill="#009fff" d="M232.4 639.2L228.7 637.5L225.0 632.8L228.7 634.5z"/>
<path fill="#30ffcf" d="M202.8 608.5L199.1 602.5L195.4 598.8L199.1 604.7z"/>
<path fill="#808080" d="M188.0 588.6L184.3 580.0L180.6 578.2L184.3 586.8z"/>
<path fill="#808080" d="M180.6 578.2L176.8 568.4L173.2 567.3L176.9 577.1z"/>
<path fill="#808080" d="M158.3 546.8L154.6 536.3L150.9 539.2L154.6 549.7z"/>
<path fill="#808080" d="M150.9 539.2L147.2 529.5L143.5 534.5L147.2 544.1z"/>
<path fill="#808080" d="M143.5 534.5L139.8 526.6L136.1 533.0L139.8 540.9z"/>
<path fill="#0040ff" d="M328.8 652.2L325.1 656.1L321.4 655.8L325.1 651.9z"/>
<path fill="#0030ff" d="M321.4 655.8L317.6 659.3L313.9 659.0L317.7 655.5z"/>
<path fill="#0010ff" d="M306.5 661.7L302.8 664.6L299.1 663.5L302.8 660.7z"/>
<path fill="#0020ff" d="M284.3 663.0L280.6 664.5L276.9 661.8L280.6 660.3z"/>
<path fill="#0020ff" d="M276.9 661.8L273.2 663.0L269.5 660.3L273.2 659.0z"/>
<path fill="#0020ff" d="M269.5 660.3L265.8 661.1L262.1 658.3L265.8 657.5z"/>
<path fill="#0030ff" d="M262.1 658.3L258.4 658.5L254.7 655.0L258.4 654.8z"/>
<path fill="#0040ff" d="M254.7 655.0L250.9 654.8L247.3 650.4L251.0 650.6z"/>
<path fill="#0060ff" d="M247.3 650.4L243.5 649.8L239.8 644.9L243.6 645.5z"/>
<path fill="#00bfff" d="M225.0 632.8L221.3 630.3L217.6 625.6L221.3 628.2z"/>
<path fill="#00dfff" d="M217.6 625.6L213.9 622.1L210.2 617.5L213.9 621.0z"/>
<path fill="#00ffff" d="M210.2 617.5L206.5 612.8L202.8 608.5L206.5 613.2z"/>
<path fill="#808080" d="M173.2 567.3L169.4 556.8L165.7 556.4L169.5 567.0z"/>
<path fill="#808080" d="M136.1 533.0L132.4 528.0L128.7 535.0L132.4 540.0z"/>
<path fill="#808080" d="M121.3 541.6L117.6 544.7L113.9 552.3L117.6 549.2z"/>
<path fill="#808080" d="M113.9 552.3L110.2 559.2L106.5 567.0L110.2 560.1z"/>
<path fill="#808080" d="M165.7 556.4L162.0 545.7L158.3 546.8L162.1 557.5z"/>
<path fill="#808080" d="M128.7 535.0L125.0 534.4L121.3 541.6L125.0 542.3z"/>
<path fill="#808080" d="M191.7 591.5L187.9 582.9L184.3 580.0L188.0 588.6z"/>
<path fill="#808080" d="M184.3 580.0L180.5 570.2L176.8 568.4L180.6 578.2z"/>
<path fill="#808080" d="M154.6 536.3L150.9 526.6L147.2 529.5L150.9 539.2z"/>
<path fill="#808080" d="M147.2 529.5L143.5 521.7L139.8 526.6L143.5 534.5z"/>
<path fill="#0040ff" d="M332.5 652.3L328.7 656.2L325.1 656.1L328.8 652.2z"/>
<path fill="#0030ff" d="M325.1 656.1L321.3 659.6L317.6 659.3L321.4 655.8z"/>
<path fill="#0020ff" d="M317.6 659.3L313.9 662.6L310.2 662.2L313.9 659.0z"/>
<path fill="#0020ff" d="M310.2 662.2L306.5 665.1L302.8 664.6L306.5 661.7z"/>
<path fill="#0010ff" d="M302.8 664.6L299.1 666.7L295.4 665.7L299.1 663.5z"/>
<path fill="#0010ff" d="M295.4 665.7L291.7 667.4L288.0 665.5L291.7 663.7z"/>
<path fill="#0010ff" d="M288.0 665.5L284.3 667.0L280.6 664.5L284.3 663.0z"/>
<path fill="#0020ff" d="M280.6 664.5L276.9 665.7L273.2 663.0L276.9 661.8z"/>
<path fill="#0020ff" d="M273.2 663.0L269.5 663.8L265.8 661.1L269.5 660.3z"/>
<path fill="#0030ff" d="M265.8 661.1L262.1 661.2L258.4 658.5L262.1 658.3z"/>
<path fill="#0040ff" d="M258.4 658.5L254.6 658.2L250.9 654.8L254.7 655.0z"/>
<path fill="#0050ff" d="M250.9 654.8L247.2 654.2L243.5 649.8L247.3 650.4z"/>
<path fill="#0070ff" d="M243.5 649.8L239.8 648.8L236.1 643.9L239.8 644.9z"/>
<path fill="#008fff" d="M236.1 643.9L232.4 642.2L228.7 637.5L232.4 639.2z"/>
<path fill="#00afff" d="M228.7 637.5L225.0 634.9L221.3 630.3L225.0 632.8z"/>
<path fill="#00cfff" d="M221.3 630.3L217.6 626.8L213.9 622.1L217.6 625.6z"/>
<path fill="#00ffff" d="M213.9 622.1L210.2 617.4L206.5 612.8L210.2 617.5z"/>
<path fill="#30ffcf" d="M206.5 612.8L202.8 606.8L199.1 602.5L202.8 608.5z"/>
<path fill="#808080" d="M199.1 602.5L195.4 595.2L191.7 591.5L195.4 598.8z"/>
<path fill="#808080" d="M176.8 568.4L173.1 557.8L169.4 556.8L173.2 567.3z"/>
<path fill="#808080" d="M139.8 526.6L136.1 521.6L132.4 528.0L136.1 533.0z"/>
<path fill="#808080" d="M117.6 544.7L113.8 551.6L110.2 559.2L113.9 552.3z"/>
<path fill="#808080" d="M110.2 559.2L106.4 571.7L102.7 579.5L106.5 567.0z"/>
<path fill="#808080" d="M169.4 556.8L165.7 546.1L162.0 545.7L165.7 556.4z"/>
<path fill="#808080" d="M162.0 545.7L158.3 535.2L154.6 536.3L158.3 546.8z"/>
<path fill="#808080" d="M132.4 528.0L128.7 527.4L125.0 534.4L128.7 535.0z"/>
<path fill="#808080" d="M125.0 534.4L121.3 537.5L117.6 544.7L121.3 541.6z"/>
<path fill="#808080" d="M187.9 582.9L184.2 573.1L180.5 570.2L184.3 580.0z"/>
<path fill="#808080" d="M150.9 526.6L147.2 518.8L143.5 521.7L147.2 529.5z"/>
<path fill="#0050ff" d="M336.2 651.8L332.4 655.7L328.7 656.2L332.5 652.3z"/>
<path fill="#0030ff" d="M321.3 659.6L317.6 662.9L313.9 662.6L317.6 659.3z"/>
<path fill="#0020ff" d="M313.9 662.6L310.2 665.4L306.5 665.1L310.2 662.2z"/>
<path fill="#0010ff" d="M306.5 665.1L302.8 667.2L299.1 666.7L302.8 664.6z"/>
<path fill="#0010ff" d="M291.7 667.4L288.0 668.9L284.3 667.0L288.0 665.5z"/>
<path fill="#0010ff" d="M284.3 667.0L280.6 668.2L276.9 665.7L280.6 664.5z"/>
<path fill="#0020ff" d="M276.9 665.7L273.2 666.6L269.5 663.8L273.2 663.0z"/>
<path fill="#0020ff" d="M269.5 663.8L265.7 664.0L262.1 661.2L265.8 661.1z"/>
<path fill="#0060ff" d="M247.2 654.2L243.5 653.2L239.8 648.8L243.5 649.8z"/>
<path fill="#00bfff" d="M225.0 634.9L221.3 631.4L217.6 626.8L221.3 630.3z"/>
<path fill="#00efff" d="M217.6 626.8L213.9 622.1L210.2 617.4L213.9 622.1z"/>
<path fill="#20ffdf" d="M210.2 617.4L206.5 611.4L202.8 606.8L206.5 612.8z"/>
<path fill="#808080" d="M180.5 570.2L176.8 559.7L173.1 557.8L176.8 568.4z"/>
<path fill="#808080" d="M143.5 521.7L139.8 516.7L136.1 521.6L139.8 526.6z"/>
<path fill="#808080" d="M113.8 551.6L110.1 564.2L106.4 571.7L110.2 559.2z"/>
<path fill="#808080" d="M106.4 571.7L102.7 589.2L99.0 597.1L102.7 579.5z"/>
<path fill="#0040ff" d="M328.7 656.2L325.0 659.7L321.3 659.6L325.1 656.1z"/>
<path fill="#0010ff" d="M299.1 666.7L295.4 668.5L291.7 667.4L295.4 665.7z"/>
<path fill="#0040ff" d="M254.6 658.2L250.9 657.7L247.2 654.2L250.9 654.8z"/>
<path fill="#0080ff" d="M239.8 648.8L236.1 647.1L232.4 642.2L236.1 643.9z"/>
<path fill="#009fff" d="M232.4 642.2L228.7 639.6L225.0 634.9L228.7 637.5z"/>
<path fill="#50ffaf" d="M202.8 606.8L199.1 599.6L195.4 595.2L199.1 602.5z"/>
<path fill="#808080" d="M195.4 595.2L191.6 586.6L187.9 582.9L191.7 591.5z"/>
<path fill="#808080" d="M173.1 557.8L169.4 547.1L165.7 546.1L169.4 556.8z"/>
<path fill="#808080" d="M165.7 546.1L162.0 535.6L158.3 535.2L162.0 545.7z"/>
<path fill="#808080" d="M158.3 535.2L154.6 525.6L150.9 526.6L154.6 536.3z"/>
<path fill="#0030ff" d="M262.1 661.2L258.3 661.0L254.6 658.2L258.4 658.5z"/>
<path fill="#808080" d="M136.1 521.6L132.4 521.0L128.7 527.4L132.4 528.0z"/>
<path fill="#808080" d="M128.7 527.4L124.9 530.5L121.3 537.5L125.0 534.4z"/>
<path fill="#808080" d="M121.3 537.5L117.5 544.4L113.8 551.6L117.6 544.7z"/>
<path fill="#0010ff" d="M280.6 668.2L276.8 669.0L273.2 666.6L276.9 665.7z"/>
<path fill="#00dfff" d="M221.3 631.4L217.6 626.7L213.9 622.1L217.6 626.8z"/>
<path fill="#10ffef" d="M213.9 622.1L210.2 616.1L206.5 611.4L210.2 617.4z"/>
<path fill="#808080" d="M184.2 573.1L180.5 562.5L176.8 559.7L180.5 570.2z"/>
<path fill="#808080" d="M147.2 518.8L143.5 513.8L139.8 516.7L143.5 521.7z"/>
<path fill="#808080" d="M110.1 564.2L106.4 581.7L102.7 589.2L106.4 571.7z"/>
<path fill="#0060ff" d="M339.8 650.4L336.1 654.3L332.4 655.7L336.2 651.8z"/>
<path fill="#0020ff" d="M310.2 665.4L306.5 667.5L302.8 667.2L306.5 665.1z"/>
<path fill="#0020ff" d="M273.2 666.6L269.4 666.7L265.7 664.0L269.5 663.8z"/>
<path fill="#0040ff" d="M332.4 655.7L328.7 659.2L325.0 659.7L328.7 656.2z"/>
<path fill="#0030ff" d="M325.0 659.7L321.3 663.0L317.6 662.9L321.3 659.6z"/>
<path fill="#0010ff" d="M302.8 667.2L299.1 669.0L295.4 668.5L299.1 666.7z"/>
<path fill="#0010ff" d="M288.0 668.9L284.3 670.1L280.6 668.2L284.3 667.0z"/>
<path fill="#0050ff" d="M250.9 657.7L247.2 656.6L243.5 653.2L247.2 654.2z"/>
<path fill="#0070ff" d="M243.5 653.2L239.8 651.5L236.1 647.1L239.8 648.8z"/>
<path fill="#00afff" d="M228.7 639.6L225.0 636.1L221.3 631.4L225.0 634.9z"/>
<path fill="#40ffbf" d="M206.5 611.4L202.7 604.2L199.1 599.6L202.8 606.8z"/>
<path fill="#808080" d="M191.6 586.6L187.9 576.9L184.2 573.1L187.9 582.9z"/>
<path fill="#808080" d="M176.8 559.7L173.1 549.0L169.4 547.1L173.1 557.8z"/>
<path fill="#808080" d="M169.4 547.1L165.7 536.6L162.0 535.6L165.7 546.1z"/>
<path fill="#808080" d="M162.0 535.6L158.3 525.9L154.6 525.6L158.3 535.2z"/>
<path fill="#808080" d="M154.6 525.6L150.9 517.7L147.2 518.8L150.9 526.6z"/>
<path fill="#0020ff" d="M317.6 662.9L313.9 665.7L310.2 665.4L313.9 662.6z"/>
<path fill="#0010ff" d="M295.4 668.5L291.7 669.9L288.0 668.9L291.7 667.4z"/>
<path fill="#0030ff" d="M265.7 664.0L262.0 663.8L258.3 661.0L262.1 661.2z"/>
<path fill="#0040ff" d="M258.3 661.0L254.6 660.5L250.9 657.7L254.6 658.2z"/>
<path fill="#008fff" d="M236.1 647.1L232.4 644.5L228.7 639.6L232.4 642.2z"/>
<path fill="#808080" d="M199.1 599.6L195.3 591.0L191.6 586.6L195.4 595.2z"/>
<path fill="#808080" d="M139.8 516.7L136.1 516.1L132.4 521.0L136.1 521.6z"/>
<path fill="#808080" d="M132.4 521.0L128.6 524.1L124.9 530.5L128.7 527.4z"/>
<path fill="#808080" d="M124.9 530.5L121.2 537.4L117.5 544.4L121.3 537.5z"/>
<path fill="#808080" d="M117.5 544.4L113.8 556.9L110.1 564.2L113.8 551.6z"/>
<path fill="#50ffaf" d="M102.7 589.2L99.0 610.0L95.3 617.9L99.0 597.1z"/>
<path fill="#00ffff" d="M217.6 626.7L213.8 620.7L210.2 616.1L213.9 622.1z"/>
<path fill="#0020ff" d="M276.8 669.0L273.1 669.2L269.4 666.7L273.2 666.6z"/>
<path fill="#0070ff" d="M343.5 648.7L339.8 652.6L336.1 654.3L339.8 650.4z"/>
<path fill="#0040ff" d="M328.7 659.2L325.0 662.4L321.3 663.0L325.0 659.7z"/>
<path fill="#0010ff" d="M284.3 670.1L280.5 670.9L276.8 669.0L280.6 668.2z"/>
<path fill="#00cfff" d="M225.0 636.1L221.3 631.4L217.6 626.7L221.3 631.4z"/>
<path fill="#30ffcf" d="M210.2 616.1L206.4 608.8L202.7 604.2L206.5 611.4z"/>
<path fill="#808080" d="M180.5 562.5L176.8 551.8L173.1 549.0L176.8 559.7z"/>
<path fill="#808080" d="M173.1 549.0L169.4 538.5L165.7 536.6L169.4 547.1z"/>
<path fill="#808080" d="M165.7 536.6L162.0 527.0L158.3 525.9L162.0 535.6z"/>
<path fill="#808080" d="M158.3 525.9L154.6 518.1L150.9 517.7L154.6 525.6z"/>
<path fill="#0050ff" d="M336.1 654.3L332.4 657.9L328.7 659.2L332.4 655.7z"/>
<path fill="#0020ff" d="M313.9 665.7L310.2 667.8L306.5 667.5L310.2 665.4z"/>
<path fill="#0020ff" d="M306.5 667.5L302.8 669.3L299.1 669.0L302.8 667.2z"/>
<path fill="#0010ff" d="M299.1 669.0L295.4 670.4L291.7 669.9L295.4 668.5z"/>
<path fill="#0020ff" d="M269.4 666.7L265.7 666.5L262.0 663.8L265.7 664.0z"/>
<path fill="#0030ff" d="M321.3 663.0L317.6 665.8L313.9 665.7L317.6 662.9z"/>
<path fill="#0010ff" d="M291.7 669.9L287.9 671.2L284.3 670.1L288.0 668.9z"/>
<path fill="#0030ff" d="M262.0 663.8L258.3 663.3L254.6 660.5L258.3 661.0z"/>
<path fill="#0040ff" d="M254.6 660.5L250.9 659.4L247.2 656.6L250.9 657.7z"/>
<path fill="#0060ff" d="M247.2 656.6L243.5 654.9L239.8 651.5L243.5 653.2z"/>
<path fill="#0080ff" d="M239.8 651.5L236.1 648.9L232.4 644.5L236.1 647.1z"/>
<path fill="#009fff" d="M232.4 644.5L228.7 641.0L225.0 636.1L228.7 639.6z"/>
<path fill="#808080" d="M202.7 604.2L199.0 595.6L195.3 591.0L199.1 599.6z"/>
<path fill="#808080" d="M195.3 591.0L191.6 581.2L187.9 576.9L191.6 586.6z"/>
<path fill="#808080" d="M187.9 576.9L184.2 566.3L180.5 562.5L184.2 573.1z"/>
<path fill="#808080" d="M150.9 517.7L147.2 512.8L143.5 513.8L147.2 518.8z"/>
<path fill="#808080" d="M143.5 513.8L139.7 513.1L136.1 516.1L139.8 516.7z"/>
<path fill="#808080" d="M136.1 516.1L132.3 519.2L128.6 524.1L132.4 521.0z"/>
<path fill="#808080" d="M128.6 524.1L124.9 531.0L121.2 537.4L124.9 530.5z"/>
<path fill="#808080" d="M121.2 537.4L117.5 549.9L113.8 556.9L117.5 544.4z"/>
<path fill="#808080" d="M113.8 556.9L110.1 574.4L106.4 581.7L110.1 564.2z"/>
<path fill="#808080" d="M106.4 581.7L102.7 602.5L99.0 610.0L102.7 589.2z"/>
<path fill="#00efff" d="M99.0 610.0L95.3 632.6L91.6 640.4L95.3 617.9z"/>
<path fill="#00efff" d="M221.3 631.4L217.5 625.5L213.8 620.7L217.6 626.7z"/>
<path fill="#20ffdf" d="M213.8 620.7L210.1 613.5L206.4 608.8L210.2 616.1z"/>
<path fill="#808080" d="M176.8 551.8L173.1 541.3L169.4 538.5L173.1 549.0z"/>
<path fill="#808080" d="M169.4 538.5L165.7 528.8L162.0 527.0L165.7 536.6z"/>
<path fill="#808080" d="M162.0 527.0L158.3 519.1L154.6 518.1L158.3 525.9z"/>
<path fill="#0040ff" d="M332.4 657.9L328.7 661.1L325.0 662.4L328.7 659.2z"/>
<path fill="#0010ff" d="M280.5 670.9L276.8 671.1L273.1 669.2L276.8 669.0z"/>
<path fill="#0020ff" d="M273.1 669.2L269.4 669.0L265.7 666.5L269.4 666.7z"/>
<path fill="#0080ff" d="M347.2 647.0L343.5 650.9L339.8 652.6L343.5 648.7z"/>
<path fill="#0060ff" d="M339.8 652.6L336.1 656.1L332.4 657.9L336.1 654.3z"/>
<path fill="#0030ff" d="M325.0 662.4L321.3 665.3L317.6 665.8L321.3 663.0z"/>
<path fill="#0020ff" d="M317.6 665.8L313.9 668.0L310.2 667.8L313.9 665.7z"/>
<path fill="#0020ff" d="M302.8 669.3L299.1 670.8L295.4 670.4L299.1 669.0z"/>
<path fill="#0010ff" d="M295.4 670.4L291.6 671.7L287.9 671.2L291.7 669.9z"/>
<path fill="#0010ff" d="M287.9 671.2L284.2 672.0L280.5 670.9L284.3 670.1z"/>
<path fill="#0030ff" d="M265.7 666.5L262.0 666.0L258.3 663.3L262.0 663.8z"/>
<path fill="#0040ff" d="M258.3 663.3L254.6 662.2L250.9 659.4L254.6 660.5z"/>
<path fill="#008fff" d="M236.1 648.9L232.4 645.4L228.7 641.0L232.4 644.5z"/>
<path fill="#00bfff" d="M228.7 641.0L224.9 636.3L221.3 631.4L225.0 636.1z"/>
<path fill="#808080" d="M206.4 608.8L202.7 600.2L199.0 595.6L202.7 604.2z"/>
<path fill="#808080" d="M199.0 595.6L195.3 585.8L191.6 581.2L195.3 591.0z"/>
<path fill="#808080" d="M154.6 518.1L150.8 513.1L147.2 512.8L150.9 517.7z"/>
<path fill="#808080" d="M139.7 513.1L136.0 516.2L132.3 519.2L136.1 516.1z"/>
<path fill="#808080" d="M132.3 519.2L128.6 526.1L124.9 531.0L128.6 524.1z"/>
<path fill="#808080" d="M124.9 531.0L121.2 543.5L117.5 549.9L121.2 537.4z"/>
<path fill="#808080" d="M117.5 549.9L113.8 567.4L110.1 574.4L113.8 556.9z"/>
<path fill="#10ffef" d="M102.7 602.5L99.0 625.1L95.3 632.6L99.0 610.0z"/>
<path fill="#0080ff" d="M95.3 632.6L91.6 655.4L87.9 663.2L91.6 640.4z"/>
<path fill="#0020ff" d="M310.2 667.8L306.5 669.6L302.8 669.3L306.5 667.5z"/>
<path fill="#0050ff" d="M250.9 659.4L247.2 657.7L243.5 654.9L247.2 656.6z"/>
<path fill="#0070ff" d="M243.5 654.9L239.8 652.4L236.1 648.9L239.8 651.5z"/>
<path fill="#808080" d="M191.6 581.2L187.9 570.6L184.2 566.3L187.9 576.9z"/>
<path fill="#808080" d="M184.2 566.3L180.5 555.6L176.8 551.8L180.5 562.5z"/>
<path fill="#808080" d="M147.2 512.8L143.4 512.1L139.7 513.1L143.5 513.8z"/>
<path fill="#808080" d="M110.1 574.4L106.4 595.2L102.7 602.5L106.4 581.7z"/>
<path fill="#808080" d="M173.1 541.3L169.4 531.7L165.7 528.8L169.4 538.5z"/>
<path fill="#808080" d="M165.7 528.8L161.9 521.0L158.3 519.1L162.0 527.0z"/>
<path fill="#008fff" d="M350.9 645.1L347.2 649.0L343.5 650.9L347.2 647.0z"/>
<path fill="#0050ff" d="M336.1 656.1L332.4 659.3L328.7 661.1L332.4 657.9z"/>
<path fill="#0030ff" d="M321.3 665.3L317.6 667.4L313.9 668.0L317.6 665.8z"/>
<path fill="#0010ff" d="M291.6 671.7L287.9 672.5L284.2 672.0L287.9 671.2z"/>
<path fill="#0030ff" d="M269.4 669.0L265.7 668.4L262.0 666.0L265.7 666.5z"/>
<path fill="#0040ff" d="M262.0 666.0L258.3 664.9L254.6 662.2L258.3 663.3z"/>
<path fill="#00afff" d="M232.4 645.4L228.6 640.7L224.9 636.3L228.7 641.0z"/>
<path fill="#00dfff" d="M224.9 636.3L221.2 630.3L217.5 625.5L221.3 631.4z"/>
<path fill="#10ffef" d="M217.5 625.5L213.8 618.2L210.1 613.5L213.8 620.7z"/>
<path fill="#50ffaf" d="M210.1 613.5L206.4 604.9L202.7 600.2L206.4 608.8z"/>
<path fill="#808080" d="M202.7 600.2L199.0 590.4L195.3 585.8L199.0 595.6z"/>
<path fill="#808080" d="M158.3 519.1L154.5 514.1L150.8 513.1L154.6 518.1z"/>
<path fill="#808080" d="M136.0 516.2L132.3 523.1L128.6 526.1L132.3 519.2z"/>
<path fill="#808080" d="M128.6 526.1L124.9 538.6L121.2 543.5L124.9 531.0z"/>
<path fill="#808080" d="M121.2 543.5L117.5 561.0L113.8 567.4L117.5 549.9z"/>
<path fill="#00afff" d="M99.0 625.1L95.3 647.8L91.6 655.4L95.3 632.6z"/>
<path fill="#0020ff" d="M91.6 655.4L87.8 675.3L84.2 683.2L87.9 663.2z"/>
<path fill="#0040ff" d="M328.7 661.1L325.0 663.9L321.3 665.3L325.0 662.4z"/>
<path fill="#0020ff" d="M299.1 670.8L295.3 672.0L291.6 671.7L295.4 670.4z"/>
<path fill="#0010ff" d="M284.2 672.0L280.5 672.1L276.8 671.1L280.5 670.9z"/>
<path fill="#0020ff" d="M276.8 671.1L273.1 670.9L269.4 669.0L273.1 669.2z"/>
<path fill="#0070ff" d="M343.5 650.9L339.8 654.4L336.1 656.1L339.8 652.6z"/>
<path fill="#0020ff" d="M313.9 668.0L310.2 669.7L306.5 669.6L310.2 667.8z"/>
<path fill="#0020ff" d="M306.5 669.6L302.7 671.1L299.1 670.8L302.8 669.3z"/>
<path fill="#0050ff" d="M254.6 662.2L250.9 660.5L247.2 657.7L250.9 659.4z"/>
<path fill="#0080ff" d="M239.8 652.4L236.1 648.9L232.4 645.4L236.1 648.9z"/>
<path fill="#808080" d="M195.3 585.8L191.6 575.2L187.9 570.6L191.6 581.2z"/>
<path fill="#808080" d="M180.5 555.6L176.8 545.1L173.1 541.3L176.8 551.8z"/>
<path fill="#0060ff" d="M247.2 657.7L243.5 655.2L239.8 652.4L243.5 654.9z"/>
<path fill="#808080" d="M187.9 570.6L184.2 559.9L180.5 555.6L184.2 566.3z"/>
<path fill="#808080" d="M150.8 513.1L147.1 512.4L143.4 512.1L147.2 512.8z"/>
<path fill="#808080" d="M143.4 512.1L139.7 515.2L136.0 516.2L139.7 513.1z"/>
<path fill="#808080" d="M113.8 567.4L110.1 588.2L106.4 595.2L110.1 574.4z"/>
<path fill="#40ffbf" d="M106.4 595.2L102.7 617.8L99.0 625.1L102.7 602.5z"/>
<path fill="#808080" d="M169.4 531.7L165.6 523.8L161.9 521.0L165.7 528.8z"/>
<path fill="#0030ff" d="M265.7 668.4L262.0 667.4L258.3 664.9L262.0 666.0z"/>
<path fill="#00cfff" d="M228.6 640.7L224.9 634.8L221.2 630.3L224.9 636.3z"/>
<path fill="#808080" d="M206.4 604.9L202.7 595.1L199.0 590.4L202.7 600.2z"/>
<path fill="#808080" d="M161.9 521.0L158.2 516.0L154.5 514.1L158.3 519.1z"/>
<path fill="#808080" d="M132.3 523.1L128.6 535.6L124.9 538.6L128.6 526.1z"/>
<path fill="#808080" d="M124.9 538.6L121.2 556.1L117.5 561.0L121.2 543.5z"/>
<path fill="#0050ff" d="M95.3 647.8L91.5 667.8L87.8 675.3L91.6 655.4z"/>
<path fill="#0000cf" d="M87.8 675.3L84.1 689.4L80.4 697.3L84.2 683.2z"/>
<path fill="#0040ff" d="M325.0 663.9L321.3 666.1L317.6 667.4L321.3 665.3z"/>
<path fill="#0020ff" d="M295.3 672.0L291.6 672.8L287.9 672.5L291.6 671.7z"/>
<path fill="#0020ff" d="M287.9 672.5L284.2 672.7L280.5 672.1L284.2 672.0z"/>
<path fill="#009fff" d="M354.6 643.3L350.9 647.2L347.2 649.0L350.9 645.1z"/>
<path fill="#0080ff" d="M347.2 649.0L343.5 652.6L339.8 654.4L343.5 650.9z"/>
<path fill="#0060ff" d="M339.8 654.4L336.1 657.7L332.4 659.3L336.1 656.1z"/>
<path fill="#0050ff" d="M332.4 659.3L328.7 662.2L325.0 663.9L328.7 661.1z"/>
<path fill="#0030ff" d="M317.6 667.4L313.8 669.2L310.2 669.7L313.9 668.0z"/>
<path fill="#0020ff" d="M273.1 670.9L269.4 670.3L265.7 668.4L269.4 669.0z"/>
<path fill="#0050ff" d="M258.3 664.9L254.6 663.2L250.9 660.5L254.6 662.2z"/>
<path fill="#009fff" d="M236.1 648.9L232.3 644.2L228.6 640.7L232.4 645.4z"/>
<path fill="#00ffff" d="M221.2 630.3L217.5 623.1L213.8 618.2L217.5 625.5z"/>
<path fill="#40ffbf" d="M213.8 618.2L210.1 609.6L206.4 604.9L210.1 613.5z"/>
<path fill="#808080" d="M199.0 590.4L195.3 579.9L191.6 575.2L195.3 585.8z"/>
<path fill="#808080" d="M176.8 545.1L173.1 535.4L169.4 531.7L173.1 541.3z"/>
<path fill="#0020ff" d="M310.2 669.7L306.4 671.2L302.7 671.1L306.5 669.6z"/>
<path fill="#0020ff" d="M302.7 671.1L299.0 672.3L295.3 672.0L299.1 670.8z"/>
<path fill="#0020ff" d="M280.5 672.1L276.8 671.9L273.1 670.9L276.8 671.1z"/>
<path fill="#0060ff" d="M250.9 660.5L247.2 658.0L243.5 655.2L247.2 657.7z"/>
<path fill="#0080ff" d="M243.5 655.2L239.7 651.7L236.1 648.9L239.8 652.4z"/>
<path fill="#808080" d="M191.6 575.2L187.9 564.5L184.2 559.9L187.9 570.6z"/>
<path fill="#808080" d="M184.2 559.9L180.5 549.4L176.8 545.1L180.5 555.6z"/>
<path fill="#808080" d="M154.5 514.1L150.8 513.5L147.1 512.4L150.8 513.1z"/>
<path fill="#808080" d="M147.1 512.4L143.4 515.5L139.7 515.2L143.4 512.1z"/>
<path fill="#808080" d="M139.7 515.2L136.0 522.1L132.3 523.1L136.0 516.2z"/>
<path fill="#808080" d="M117.5 561.0L113.8 581.8L110.1 588.2L113.8 567.4z"/>
<path fill="#808080" d="M110.1 588.2L106.4 610.8L102.7 617.8L106.4 595.2z"/>
<path fill="#00dfff" d="M102.7 617.8L98.9 640.6L95.3 647.8L99.0 625.1z"/>
<path fill="#808080" d="M165.6 523.8L161.9 518.9L158.2 516.0L161.9 521.0z"/>
<path fill="#808080" d="M128.6 535.6L124.9 553.2L121.2 556.1L124.9 538.6z"/>
<path fill="#0000ff" d="M91.5 667.8L87.8 681.9L84.1 689.4L87.8 675.3z"/>
<path fill="#00afff" d="M358.3 641.7L354.6 645.6L350.9 647.2L354.6 643.3z"/>
<path fill="#0070ff" d="M343.5 652.6L339.8 655.8L336.1 657.7L339.8 654.4z"/>
<path fill="#0050ff" d="M328.7 662.2L324.9 664.3L321.3 666.1L325.0 663.9z"/>
<path fill="#0020ff" d="M291.6 672.8L287.9 673.0L284.2 672.7L287.9 672.5z"/>
<path fill="#0030ff" d="M269.4 670.3L265.7 669.3L262.0 667.4L265.7 668.4z"/>
<path fill="#0040ff" d="M262.0 667.4L258.3 665.7L254.6 663.2L258.3 664.9z"/>
<path fill="#00bfff" d="M232.3 644.2L228.6 638.2L224.9 634.8L228.6 640.7z"/>
<path fill="#00efff" d="M224.9 634.8L221.2 627.5L217.5 623.1L221.2 630.3z"/>
<path fill="#808080" d="M210.1 609.6L206.4 599.8L202.7 595.1L206.4 604.9z"/>
<path fill="#808080" d="M202.7 595.1L199.0 584.5L195.3 579.9L199.0 590.4z"/>
<path fill="#808080" d="M173.1 535.4L169.3 527.6L165.6 523.8L169.4 531.7z"/>
<path fill="#0040ff" d="M321.3 666.1L317.5 667.8L313.8 669.2L317.6 667.4z"/>
<path fill="#0030ff" d="M313.8 669.2L310.1 670.7L306.4 671.2L310.2 669.7z"/>
<path fill="#0020ff" d="M299.0 672.3L295.3 673.1L291.6 672.8L295.3 672.0z"/>
<path fill="#0020ff" d="M284.2 672.7L280.5 672.4L276.8 671.9L280.5 672.1z"/>
<path fill="#008fff" d="M350.9 647.2L347.2 650.7L343.5 652.6L347.2 649.0z"/>
<path fill="#0060ff" d="M336.1 657.7L332.4 660.5L328.7 662.2L332.4 659.3z"/>
<path fill="#0020ff" d="M306.4 671.2L302.7 672.4L299.0 672.3L302.7 671.1z"/>
<path fill="#0020ff" d="M276.8 671.9L273.1 671.4L269.4 670.3L273.1 670.9z"/>
<path fill="#0060ff" d="M254.6 663.2L250.8 660.7L247.2 658.0L250.9 660.5z"/>
<path fill="#0070ff" d="M247.2 658.0L243.4 654.4L239.7 651.7L243.5 655.2z"/>
<path fill="#009fff" d="M239.7 651.7L236.0 647.0L232.3 644.2L236.1 648.9z"/>
<path fill="#30ffcf" d="M217.5 623.1L213.8 614.5L210.1 609.6L213.8 618.2z"/>
<path fill="#808080" d="M195.3 579.9L191.6 569.2L187.9 564.5L191.6 575.2z"/>
<path fill="#808080" d="M187.9 564.5L184.2 554.0L180.5 549.4L184.2 559.9z"/>
<path fill="#808080" d="M180.5 549.4L176.7 539.8L173.1 535.4L176.8 545.1z"/>
<path fill="#808080" d="M158.2 516.0L154.5 515.3L150.8 513.5L154.5 514.1z"/>
<path fill="#808080" d="M150.8 513.5L147.1 516.6L143.4 515.5L147.1 512.4z"/>
<path fill="#808080" d="M143.4 515.5L139.7 522.4L136.0 522.1L139.7 515.2z"/>
<path fill="#808080" d="M136.0 522.1L132.3 534.6L128.6 535.6L132.3 523.1z"/>
<path fill="#808080" d="M121.2 556.1L117.5 576.9L113.8 581.8L117.5 561.0z"/>
<path fill="#808080" d="M113.8 581.8L110.1 604.4L106.4 610.8L110.1 588.2z"/>
<path fill="#00ffff" d="M106.4 610.8L102.6 633.6L98.9 640.6L102.7 617.8z"/>
<path fill="#0080ff" d="M98.9 640.6L95.2 660.5L91.5 667.8L95.3 647.8z"/>
<path fill="#0000af" d="M84.1 689.4L80.4 695.7L76.7 703.5L80.4 697.3z"/>
<path fill="#00afff" d="M362.0 640.6L358.3 644.5L354.6 645.6L358.3 641.7z"/>
<path fill="#009fff" d="M354.6 645.6L350.9 649.2L347.2 650.7L350.9 647.2z"/>
<path fill="#0080ff" d="M347.2 650.7L343.5 654.0L339.8 655.8L343.5 652.6z"/>
<path fill="#0070ff" d="M339.8 655.8L336.1 658.6L332.4 660.5L336.1 657.7z"/>
<path fill="#0060ff" d="M332.4 660.5L328.6 662.7L324.9 664.3L328.7 662.2z"/>
<path fill="#0040ff" d="M324.9 664.3L321.2 666.1L317.5 667.8L321.3 666.1z"/>
<path fill="#0040ff" d="M317.5 667.8L313.8 669.3L310.1 670.7L313.8 669.2z"/>
<path fill="#0030ff" d="M310.1 670.7L306.4 671.9L302.7 672.4L306.4 671.2z"/>
<path fill="#0020ff" d="M302.7 672.4L299.0 673.2L295.3 673.1L299.0 672.3z"/>
<path fill="#0020ff" d="M295.3 673.1L291.6 673.3L287.9 673.0L291.6 672.8z"/>
<path fill="#0020ff" d="M287.9 673.0L284.2 672.8L280.5 672.4L284.2 672.7z"/>
<path fill="#0030ff" d="M280.5 672.4L276.8 671.9L273.1 671.4L276.8 671.9z"/>
<path fill="#0030ff" d="M273.1 671.4L269.4 670.3L265.7 669.3L269.4 670.3z"/>
<path fill="#0040ff" d="M265.7 669.3L261.9 667.6L258.3 665.7L262.0 667.4z"/>
<path fill="#0050ff" d="M258.3 665.7L254.5 663.1L250.8 660.7L254.6 663.2z"/>
<path fill="#0070ff" d="M250.8 660.7L247.1 657.2L243.4 654.4L247.2 658.0z"/>
<path fill="#008fff" d="M243.4 654.4L239.7 649.8L236.0 647.0L239.7 651.7z"/>
<path fill="#00bfff" d="M236.0 647.0L232.3 641.0L228.6 638.2L232.3 644.2z"/>
<path fill="#00efff" d="M228.6 638.2L224.9 630.9L221.2 627.5L224.9 634.8z"/>
<path fill="#20ffdf" d="M221.2 627.5L217.5 618.9L213.8 614.5L217.5 623.1z"/>
<path fill="#808080" d="M213.8 614.5L210.1 604.7L206.4 599.8L210.1 609.6z"/>
<path fill="#808080" d="M206.4 599.8L202.7 589.2L199.0 584.5L202.7 595.1z"/>
<path fill="#808080" d="M199.0 584.5L195.3 573.8L191.6 569.2L195.3 579.9z"/>
<path fill="#808080" d="M191.6 569.2L187.8 558.7L184.2 554.0L187.9 564.5z"/>
<path fill="#808080" d="M184.2 554.0L180.4 544.4L176.7 539.8L180.5 549.4z"/>
<path fill="#808080" d="M176.7 539.8L173.0 531.9L169.3 527.6L173.1 535.4z"/>
<path fill="#808080" d="M169.3 527.6L165.6 522.6L161.9 518.9L165.6 523.8z"/>
<path fill="#808080" d="M161.9 518.9L158.2 518.2L154.5 515.3L158.2 516.0z"/>
<path fill="#808080" d="M154.5 515.3L150.8 518.4L147.1 516.6L150.8 513.5z"/>
<path fill="#808080" d="M147.1 516.6L143.4 523.5L139.7 522.4L143.4 515.5z"/>
<path fill="#808080" d="M139.7 522.4L136.0 535.0L132.3 534.6L136.0 522.1z"/>
<path fill="#808080" d="M132.3 534.6L128.6 552.2L124.9 553.2L128.6 535.6z"/>
<path fill="#808080" d="M124.9 553.2L121.2 574.0L117.5 576.9L121.2 556.1z"/>
<path fill="#808080" d="M117.5 576.9L113.7 599.5L110.1 604.4L113.8 581.8z"/>
<path fill="#30ffcf" d="M110.1 604.4L106.3 627.2L102.6 633.6L106.4 610.8z"/>
<path fill="#009fff" d="M102.6 633.6L98.9 653.5L95.2 660.5L98.9 640.6z"/>
<path fill="#0030ff" d="M95.2 660.5L91.5 674.7L87.8 681.9L91.5 667.8z"/>
<path fill="#0000df" d="M87.8 681.9L84.1 688.1L80.4 695.7L84.1 689.4z"/>
<path fill="#0000af" d="M80.4 695.7L76.7 692.4L73.0 700.3L76.7 703.5z"/>
<path fill="#008fff" d="M350.9 649.2L347.2 652.4L343.5 654.0L347.2 650.7z"/>
<path fill="#0070ff" d="M336.1 658.6L332.3 660.8L328.6 662.7L332.4 660.5z"/>
<path fill="#0030ff" d="M306.4 671.9L302.7 672.7L299.0 673.2L302.7 672.4z"/>
<path fill="#0030ff" d="M276.8 671.9L273.1 670.8L269.4 670.3L273.1 671.4z"/>
<path fill="#0070ff" d="M254.5 663.1L250.8 659.6L247.1 657.2L250.8 660.7z"/>
<path fill="#008fff" d="M247.1 657.2L243.4 652.5L239.7 649.8L243.4 654.4z"/>
<path fill="#00afff" d="M239.7 649.8L236.0 643.8L232.3 641.0L236.0 647.0z"/>
<path fill="#808080" d="M217.5 618.9L213.8 609.1L210.1 604.7L213.8 614.5z"/>
<path fill="#808080" d="M195.3 573.8L191.5 563.3L187.8 558.7L191.6 569.2z"/>
<path fill="#808080" d="M187.8 558.7L184.1 549.0L180.4 544.4L184.2 554.0z"/>
<path fill="#808080" d="M180.4 544.4L176.7 536.5L173.0 531.9L176.7 539.8z"/>
<path fill="#808080" d="M158.2 518.2L154.5 521.3L150.8 518.4L154.5 515.3z"/>
<path fill="#808080" d="M150.8 518.4L147.1 525.3L143.4 523.5L147.1 516.6z"/>
<path fill="#808080" d="M143.4 523.5L139.7 536.0L136.0 535.0L139.7 522.4z"/>
<path fill="#808080" d="M136.0 535.0L132.3 552.5L128.6 552.2L132.3 534.6z"/>
<path fill="#808080" d="M121.2 574.0L117.4 596.5L113.7 599.5L117.5 576.9z"/>
<path fill="#50ffaf" d="M113.7 599.5L110.0 622.3L106.3 627.2L110.1 604.4z"/>
<path fill="#00cfff" d="M106.3 627.2L102.6 647.1L98.9 653.5L102.6 633.6z"/>
<path fill="#0060ff" d="M98.9 653.5L95.2 667.7L91.5 674.7L95.2 660.5z"/>
<path fill="#0000df" d="M84.1 688.1L80.4 684.9L76.7 692.4L80.4 695.7z"/>
<path fill="#0040ff" d="M321.2 666.1L317.5 667.6L313.8 669.3L317.5 667.8z"/>
<path fill="#0040ff" d="M313.8 669.3L310.1 670.5L306.4 671.9L310.1 670.7z"/>
<path fill="#0030ff" d="M299.0 673.2L295.3 673.4L291.6 673.3L295.3 673.1z"/>
<path fill="#0030ff" d="M284.2 672.8L280.5 672.2L276.8 671.9L280.5 672.4z"/>
<path fill="#00afff" d="M358.3 644.5L354.6 648.1L350.9 649.2L354.6 645.6z"/>
<path fill="#0080ff" d="M343.5 654.0L339.7 656.8L336.1 658.6L339.8 655.8z"/>
<path fill="#0050ff" d="M328.6 662.7L324.9 664.4L321.2 666.1L324.9 664.3z"/>
<path fill="#0030ff" d="M291.6 673.3L287.9 673.1L284.2 672.8L287.9 673.0z"/>
<path fill="#0040ff" d="M269.4 670.3L265.6 668.6L261.9 667.6L265.7 669.3z"/>
<path fill="#0050ff" d="M261.9 667.6L258.2 665.0L254.5 663.1L258.3 665.7z"/>
<path fill="#00dfff" d="M232.3 641.0L228.6 633.7L224.9 630.9L228.6 638.2z"/>
<path fill="#10ffef" d="M224.9 630.9L221.2 622.3L217.5 618.9L221.2 627.5z"/>
<path fill="#808080" d="M210.1 604.7L206.4 594.1L202.7 589.2L206.4 599.8z"/>
<path fill="#808080" d="M202.7 589.2L198.9 578.5L195.3 573.8L199.0 584.5z"/>
<path fill="#808080" d="M173.0 531.9L169.3 526.9L165.6 522.6L169.3 527.6z"/>
<path fill="#808080" d="M165.6 522.6L161.9 522.0L158.2 518.2L161.9 518.9z"/>
<path fill="#808080" d="M128.6 552.2L124.8 573.0L121.2 574.0L124.9 553.2z"/>
<path fill="#0000ff" d="M91.5 674.7L87.8 680.9L84.1 688.1L87.8 681.9z"/>
<path fill="#0080ff" d="M250.8 659.6L247.1 654.9L243.4 652.5L247.1 657.2z"/>
<path fill="#00afff" d="M243.4 652.5L239.7 646.5L236.0 643.8L239.7 649.8z"/>
<path fill="#808080" d="M191.5 563.3L187.8 553.7L184.1 549.0L187.8 558.7z"/>
<path fill="#808080" d="M184.1 549.0L180.4 541.2L176.7 536.5L180.4 544.4z"/>
<path fill="#808080" d="M154.5 521.3L150.8 528.2L147.1 525.3L150.8 518.4z"/>
<path fill="#808080" d="M147.1 525.3L143.4 537.9L139.7 536.0L143.4 523.5z"/>
<path fill="#808080" d="M139.7 536.0L135.9 553.6L132.3 552.5L136.0 535.0z"/>
<path fill="#808080" d="M117.4 596.5L113.7 619.3L110.0 622.3L113.7 599.5z"/>
<path fill="#00efff" d="M110.0 622.3L106.3 642.2L102.6 647.1L106.3 627.2z"/>
<path fill="#0080ff" d="M102.6 647.1L98.9 661.3L95.2 667.7L98.9 653.5z"/>
<path fill="#0040ff" d="M310.1 670.5L306.4 671.3L302.7 672.7L306.4 671.9z"/>
<path fill="#0030ff" d="M302.7 672.7L299.0 672.9L295.3 673.4L299.0 673.2z"/>
<path fill="#0040ff" d="M280.5 672.2L276.7 671.2L273.1 670.8L276.8 671.9z"/>
<path fill="#009fff" d="M354.6 648.1L350.8 651.3L347.2 652.4L350.9 649.2z"/>
<path fill="#008fff" d="M347.2 652.4L343.4 655.2L339.7 656.8L343.5 654.0z"/>
<path fill="#0080ff" d="M339.7 656.8L336.0 659.0L332.3 660.8L336.1 658.6z"/>
<path fill="#0060ff" d="M332.3 660.8L328.6 662.5L324.9 664.4L328.6 662.7z"/>
<path fill="#0040ff" d="M317.5 667.6L313.8 668.8L310.1 670.5L313.8 669.3z"/>
<path fill="#0040ff" d="M273.1 670.8L269.3 669.1L265.6 668.6L269.4 670.3z"/>
<path fill="#0070ff" d="M258.2 665.0L254.5 661.5L250.8 659.6L254.5 663.1z"/>
<path fill="#00dfff" d="M236.0 643.8L232.3 636.5L228.6 633.7L232.3 641.0z"/>
<path fill="#50ffaf" d="M221.2 622.3L217.5 612.6L213.8 609.1L217.5 618.9z"/>
<path fill="#808080" d="M213.8 609.1L210.1 598.5L206.4 594.1L210.1 604.7z"/>
<path fill="#808080" d="M198.9 578.5L195.2 568.0L191.5 563.3L195.3 573.8z"/>
<path fill="#808080" d="M176.7 536.5L173.0 531.5L169.3 526.9L173.0 531.9z"/>
<path fill="#0050ff" d="M324.9 664.4L321.2 665.9L317.5 667.6L321.2 666.1z"/>
<path fill="#0030ff" d="M295.3 673.4L291.6 673.2L287.9 673.1L291.6 673.3z"/>
<path fill="#0030ff" d="M287.9 673.1L284.2 672.5L280.5 672.2L284.2 672.8z"/>
<path fill="#0050ff" d="M265.6 668.6L261.9 666.1L258.2 665.0L261.9 667.6z"/>
<path fill="#10ffef" d="M228.6 633.7L224.9 625.1L221.2 622.3L224.9 630.9z"/>
<path fill="#808080" d="M206.4 594.1L202.6 583.4L198.9 578.5L202.7 589.2z"/>
<path fill="#808080" d="M161.9 522.0L158.2 525.1L154.5 521.3L158.2 518.2z"/>
<path fill="#808080" d="M132.3 552.5L128.5 573.3L124.8 573.0L128.6 552.2z"/>
<path fill="#808080" d="M124.8 573.0L121.1 595.5L117.4 596.5L121.2 574.0z"/>
<path fill="#0030ff" d="M95.2 667.7L91.5 673.9L87.8 680.9L91.5 674.7z"/>
<path fill="#0000ff" d="M87.8 680.9L84.1 677.7L80.4 684.9L84.1 688.1z"/>
<path fill="#808080" d="M169.3 526.9L165.6 526.3L161.9 522.0L165.6 522.6z"/>
<path fill="#009fff" d="M247.1 654.9L243.4 648.9L239.7 646.5L243.4 652.5z"/>
<path fill="#808080" d="M187.8 553.7L184.1 545.8L180.4 541.2L184.1 549.0z"/>
<path fill="#808080" d="M150.8 528.2L147.1 540.7L143.4 537.9L147.1 525.3z"/>
<path fill="#808080" d="M143.4 537.9L139.6 555.4L135.9 553.6L139.7 536.0z"/>
<path fill="#10ffef" d="M113.7 619.3L110.0 639.3L106.3 642.2L110.0 622.3z"/>
<path fill="#009fff" d="M106.3 642.2L102.6 656.3L98.9 661.3L102.6 647.1z"/>
<path fill="#008fff" d="M343.4 655.2L339.7 657.4L336.0 659.0L339.7 656.8z"/>
<path fill="#0050ff" d="M313.8 668.8L310.1 669.6L306.4 671.3L310.1 670.5z"/>
<path fill="#0040ff" d="M306.4 671.3L302.7 671.5L299.0 672.9L302.7 672.7z"/>
<path fill="#0080ff" d="M254.5 661.5L250.8 656.8L247.1 654.9L250.8 659.6z"/>
<path fill="#00cfff" d="M239.7 646.5L236.0 639.2L232.3 636.5L236.0 643.8z"/>
<path fill="#808080" d="M195.2 568.0L191.5 558.4L187.8 553.7L191.5 563.3z"/>
<path fill="#808080" d="M180.4 541.2L176.7 536.2L173.0 531.5L176.7 536.5z"/>
<path fill="#0060ff" d="M328.6 662.5L324.9 664.0L321.2 665.9L324.9 664.4z"/>
<path fill="#0040ff" d="M299.0 672.9L295.3 672.6L291.6 673.2L295.3 673.4z"/>
<path fill="#0040ff" d="M284.2 672.5L280.4 671.5L276.7 671.2L280.5 672.2z"/>
<path fill="#0050ff" d="M276.7 671.2L273.0 669.5L269.3 669.1L273.1 670.8z"/>
<path fill="#009fff" d="M350.8 651.3L347.1 654.1L343.4 655.2L347.2 652.4z"/>
<path fill="#0070ff" d="M336.0 659.0L332.3 660.7L328.6 662.5L332.3 660.8z"/>
<path fill="#0050ff" d="M321.2 665.9L317.5 667.1L313.8 668.8L317.5 667.6z"/>
<path fill="#0040ff" d="M291.6 673.2L287.8 672.6L284.2 672.5L287.9 673.1z"/>
<path fill="#0050ff" d="M269.3 669.1L265.6 666.6L261.9 666.1L265.6 668.6z"/>
<path fill="#0070ff" d="M261.9 666.1L258.2 662.6L254.5 661.5L258.2 665.0z"/>
<path fill="#10ffef" d="M232.3 636.5L228.6 627.9L224.9 625.1L228.6 633.7z"/>
<path fill="#40ffbf" d="M224.9 625.1L221.2 615.3L217.5 612.6L221.2 622.3z"/>
<path fill="#808080" d="M217.5 612.6L213.7 602.0L210.1 598.5L213.8 609.1z"/>
<path fill="#808080" d="M210.1 598.5L206.3 587.8L202.6 583.4L206.4 594.1z"/>
<path fill="#808080" d="M202.6 583.4L198.9 572.9L195.2 568.0L198.9 578.5z"/>
<path fill="#808080" d="M158.2 525.1L154.5 532.0L150.8 528.2L154.5 521.3z"/>
<path fill="#808080" d="M135.9 553.6L132.2 574.3L128.5 573.3L132.3 552.5z"/>
<path fill="#808080" d="M128.5 573.3L124.8 595.9L121.1 595.5L124.8 573.0z"/>
<path fill="#808080" d="M121.1 595.5L117.4 618.3L113.7 619.3L117.4 596.5z"/>
<path fill="#0050ff" d="M98.9 661.3L95.2 667.5L91.5 673.9L95.2 667.7z"/>
<path fill="#0030ff" d="M91.5 673.9L87.8 670.7L84.1 677.7L87.8 680.9z"/>
<path fill="#808080" d="M173.0 531.5L169.3 530.9L165.6 526.3L169.3 526.9z"/>
<path fill="#808080" d="M165.6 526.3L161.9 529.4L158.2 525.1L161.9 522.0z"/>
<path fill="#808080" d="M147.1 540.7L143.3 558.3L139.6 555.4L143.4 537.9z"/>
<path fill="#00bfff" d="M110.0 639.3L106.3 653.4L102.6 656.3L106.3 642.2z"/>
<path fill="#009fff" d="M250.8 656.8L247.1 650.8L243.4 648.9L247.1 654.9z"/>
<path fill="#00cfff" d="M243.4 648.9L239.7 641.7L236.0 639.2L239.7 646.5z"/>
<path fill="#808080" d="M191.5 558.4L187.8 550.5L184.1 545.8L187.8 553.7z"/>
<path fill="#808080" d="M184.1 545.8L180.4 540.8L176.7 536.2L180.4 541.2z"/>
<path fill="#0050ff" d="M310.1 669.6L306.4 669.8L302.7 671.5L306.4 671.3z"/>
<path fill="#008fff" d="M347.1 654.1L343.4 656.3L339.7 657.4L343.4 655.2z"/>
<path fill="#0080ff" d="M339.7 657.4L336.0 659.1L332.3 660.7L336.0 659.0z"/>
<path fill="#0060ff" d="M324.9 664.0L321.2 665.3L317.5 667.1L321.2 665.9z"/>
<path fill="#0060ff" d="M317.5 667.1L313.8 667.9L310.1 669.6L313.8 668.8z"/>
<path fill="#0040ff" d="M302.7 671.5L298.9 671.3L295.3 672.6L299.0 672.9z"/>
<path fill="#0040ff" d="M295.3 672.6L291.5 672.1L287.8 672.6L291.6 673.2z"/>
<path fill="#0040ff" d="M287.8 672.6L284.1 671.6L280.4 671.5L284.2 672.5z"/>
<path fill="#0070ff" d="M265.6 666.6L261.9 663.1L258.2 662.6L261.9 666.1z"/>
<path fill="#0080ff" d="M258.2 662.6L254.5 657.9L250.8 656.8L254.5 661.5z"/>
<path fill="#00ffff" d="M236.0 639.2L232.3 630.6L228.6 627.9L232.3 636.5z"/>
<path fill="#40ffbf" d="M228.6 627.9L224.8 618.1L221.2 615.3L224.9 625.1z"/>
<path fill="#808080" d="M206.3 587.8L202.6 577.3L198.9 572.9L202.6 583.4z"/>
<path fill="#808080" d="M198.9 572.9L195.2 563.3L191.5 558.4L195.2 568.0z"/>
<path fill="#808080" d="M154.5 532.0L150.7 544.5L147.1 540.7L150.8 528.2z"/>
<path fill="#808080" d="M139.6 555.4L135.9 576.2L132.2 574.3L135.9 553.6z"/>
<path fill="#808080" d="M132.2 574.3L128.5 596.9L124.8 595.9L128.5 573.3z"/>
<path fill="#808080" d="M124.8 595.9L121.1 618.6L117.4 618.3L121.1 595.5z"/>
<path fill="#20ffdf" d="M117.4 618.3L113.7 638.3L110.0 639.3L113.7 619.3z"/>
<path fill="#0080ff" d="M102.6 656.3L98.9 662.6L95.2 667.5L98.9 661.3z"/>
<path fill="#0050ff" d="M95.2 667.5L91.5 664.3L87.8 670.7L91.5 673.9z"/>
<path fill="#0070ff" d="M332.3 660.7L328.6 662.2L324.9 664.0L328.6 662.5z"/>
<path fill="#0050ff" d="M280.4 671.5L276.7 669.8L273.0 669.5L276.7 671.2z"/>
<path fill="#0060ff" d="M273.0 669.5L269.3 666.9L265.6 666.6L269.3 669.1z"/>
<path fill="#808080" d="M221.2 615.3L217.4 604.8L213.7 602.0L217.5 612.6z"/>
<path fill="#808080" d="M213.7 602.0L210.0 591.3L206.3 587.8L210.1 598.5z"/>
<path fill="#808080" d="M176.7 536.2L173.0 535.5L169.3 530.9L173.0 531.5z"/>
<path fill="#808080" d="M169.3 530.9L165.6 534.0L161.9 529.4L165.6 526.3z"/>
<path fill="#808080" d="M161.9 529.4L158.2 536.3L154.5 532.0L158.2 525.1z"/>
<path fill="#0070ff" d="M321.2 665.3L317.5 666.1L313.8 667.9L317.5 667.1z"/>
<path fill="#0050ff" d="M291.5 672.1L287.8 671.1L284.1 671.6L287.8 672.6z"/>
<path fill="#0080ff" d="M261.9 663.1L258.2 658.4L254.5 657.9L258.2 662.6z"/>
<path fill="#009fff" d="M254.5 657.9L250.8 651.9L247.1 650.8L250.8 656.8z"/>
<path fill="#00cfff" d="M247.1 650.8L243.4 643.6L239.7 641.7L243.4 648.9z"/>
<path fill="#00ffff" d="M239.7 641.7L235.9 633.1L232.3 630.6L236.0 639.2z"/>
<path fill="#30ffcf" d="M232.3 630.6L228.5 620.8L224.8 618.1L228.6 627.9z"/>
<path fill="#808080" d="M202.6 577.3L198.9 567.7L195.2 563.3L198.9 572.9z"/>
<path fill="#808080" d="M195.2 563.3L191.5 555.4L187.8 550.5L191.5 558.4z"/>
<path fill="#808080" d="M187.8 550.5L184.1 545.5L180.4 540.8L184.1 545.8z"/>
<path fill="#808080" d="M150.7 544.5L147.0 562.0L143.3 558.3L147.1 540.7z"/>
<path fill="#808080" d="M143.3 558.3L139.6 579.1L135.9 576.2L139.6 555.4z"/>
<path fill="#808080" d="M135.9 576.2L132.2 598.8L128.5 596.9L132.2 574.3z"/>
<path fill="#808080" d="M128.5 596.9L124.8 619.7L121.1 618.6L124.8 595.9z"/>
<path fill="#20ffdf" d="M121.1 618.6L117.4 638.6L113.7 638.3L117.4 618.3z"/>
<path fill="#00cfff" d="M113.7 638.3L110.0 652.4L106.3 653.4L110.0 639.3z"/>
<path fill="#008fff" d="M106.3 653.4L102.6 659.6L98.9 662.6L102.6 656.3z"/>
<path fill="#0080ff" d="M98.9 662.6L95.2 659.3L91.5 664.3L95.2 667.5z"/>
<path fill="#0080ff" d="M336.0 659.1L332.3 660.6L328.6 662.2L332.3 660.7z"/>
<path fill="#0060ff" d="M313.8 667.9L310.1 668.1L306.4 669.8L310.1 669.6z"/>
<path fill="#0050ff" d="M306.4 669.8L302.6 669.5L298.9 671.3L302.7 671.5z"/>
<path fill="#0050ff" d="M298.9 671.3L295.2 670.8L291.5 672.1L295.3 672.6z"/>
<path fill="#0070ff" d="M269.3 666.9L265.6 663.4L261.9 663.1L265.6 666.6z"/>
<path fill="#008fff" d="M343.4 656.3L339.7 658.0L336.0 659.1L339.7 657.4z"/>
<path fill="#0070ff" d="M328.6 662.2L324.9 663.4L321.2 665.3L324.9 664.0z"/>
<path fill="#0050ff" d="M284.1 671.6L280.4 669.9L276.7 669.8L280.4 671.5z"/>
<path fill="#808080" d="M224.8 618.1L221.1 607.5L217.4 604.8L221.2 615.3z"/>
<path fill="#808080" d="M210.0 591.3L206.3 580.8L202.6 577.3L206.3 587.8z"/>
<path fill="#808080" d="M180.4 540.8L176.7 540.2L173.0 535.5L176.7 536.2z"/>
<path fill="#808080" d="M173.0 535.5L169.3 538.6L165.6 534.0L169.3 530.9z"/>
<path fill="#808080" d="M165.6 534.0L161.8 540.9L158.2 536.3L161.9 529.4z"/>
<path fill="#808080" d="M158.2 536.3L154.4 548.8L150.7 544.5L154.5 532.0z"/>
<path fill="#0060ff" d="M276.7 669.8L273.0 667.2L269.3 666.9L273.0 669.5z"/>
<path fill="#808080" d="M217.4 604.8L213.7 594.1L210.0 591.3L213.7 602.0z"/>
<path fill="#009fff" d="M258.2 658.4L254.5 652.4L250.8 651.9L254.5 657.9z"/>
<path fill="#30ffcf" d="M235.9 633.1L232.2 623.3L228.5 620.8L232.3 630.6z"/>
<path fill="#808080" d="M198.9 567.7L195.2 559.8L191.5 555.4L195.2 563.3z"/>
<path fill="#808080" d="M139.6 579.1L135.9 601.6L132.2 598.8L135.9 576.2z"/>
<path fill="#808080" d="M132.2 598.8L128.5 621.5L124.8 619.7L128.5 596.9z"/>
<path fill="#20ffdf" d="M124.8 619.7L121.1 639.6L117.4 638.6L121.1 618.6z"/>
<path fill="#00cfff" d="M117.4 638.6L113.7 652.7L110.0 652.4L113.7 638.3z"/>
<path fill="#008fff" d="M102.6 659.6L98.8 656.4L95.2 659.3L98.9 662.6z"/>
<path fill="#0070ff" d="M317.5 666.1L313.7 666.2L310.1 668.1L313.8 667.9z"/>
<path fill="#0060ff" d="M295.2 670.8L291.5 669.7L287.8 671.1L291.5 672.1z"/>
<path fill="#008fff" d="M265.6 663.4L261.9 658.7L258.2 658.4L261.9 663.1z"/>
<path fill="#0080ff" d="M332.3 660.6L328.6 661.9L324.9 663.4L328.6 662.2z"/>
<path fill="#0080ff" d="M324.9 663.4L321.2 664.2L317.5 666.1L321.2 665.3z"/>
<path fill="#0060ff" d="M302.6 669.5L298.9 669.0L295.2 670.8L298.9 671.3z"/>
<path fill="#0060ff" d="M287.8 671.1L284.1 669.3L280.4 669.9L284.1 671.6z"/>
<path fill="#00cfff" d="M250.8 651.9L247.1 644.6L243.4 643.6L247.1 650.8z"/>
<path fill="#00ffff" d="M243.4 643.6L239.6 635.0L235.9 633.1L239.7 641.7z"/>
<path fill="#808080" d="M228.5 620.8L224.8 610.3L221.1 607.5L224.8 618.1z"/>
<path fill="#808080" d="M206.3 580.8L202.6 571.1L198.9 567.7L202.6 577.3z"/>
<path fill="#808080" d="M191.5 555.4L187.8 550.4L184.1 545.5L187.8 550.5z"/>
<path fill="#808080" d="M176.7 540.2L172.9 543.3L169.3 538.6L173.0 535.5z"/>
<path fill="#808080" d="M169.3 538.6L165.5 545.5L161.8 540.9L165.6 534.0z"/>
<path fill="#808080" d="M161.8 540.9L158.1 553.4L154.4 548.8L158.2 536.3z"/>
<path fill="#808080" d="M154.4 548.8L150.7 566.3L147.0 562.0L150.7 544.5z"/>
<path fill="#008fff" d="M339.7 658.0L336.0 659.5L332.3 660.6L336.0 659.1z"/>
<path fill="#0060ff" d="M310.1 668.1L306.3 667.9L302.6 669.5L306.4 669.8z"/>
<path fill="#0070ff" d="M273.0 667.2L269.3 663.7L265.6 663.4L269.3 666.9z"/>
<path fill="#0060ff" d="M280.4 669.9L276.7 667.3L273.0 667.2L276.7 669.8z"/>
<path fill="#808080" d="M221.1 607.5L217.4 596.8L213.7 594.1L217.4 604.8z"/>
<path fill="#808080" d="M213.7 594.1L210.0 583.6L206.3 580.8L210.0 591.3z"/>
<path fill="#808080" d="M184.1 545.5L180.4 544.9L176.7 540.2L180.4 540.8z"/>
<path fill="#808080" d="M147.0 562.0L143.3 582.8L139.6 579.1L143.3 558.3z"/>
<path fill="#009fff" d="M110.0 652.4L106.3 658.6L102.6 659.6L106.3 653.4z"/>
<path fill="#00afff" d="M261.9 658.7L258.2 652.7L254.5 652.4L258.2 658.4z"/>
<path fill="#808080" d="M135.9 601.6L132.2 624.4L128.5 621.5L132.2 598.8z"/>
<path fill="#20ffdf" d="M128.5 621.5L124.8 641.5L121.1 639.6L124.8 619.7z"/>
<path fill="#00dfff" d="M121.1 639.6L117.4 653.8L113.7 652.7L117.4 638.6z"/>
<path fill="#008fff" d="M328.6 661.9L324.8 662.7L321.2 664.2L324.9 663.4z"/>
<path fill="#0070ff" d="M298.9 669.0L295.2 668.0L291.5 669.7L295.2 670.8z"/>
<path fill="#00cfff" d="M254.5 652.4L250.7 645.1L247.1 644.6L250.8 651.9z"/>
<path fill="#30ffcf" d="M239.6 635.0L235.9 625.2L232.2 623.3L235.9 633.1z"/>
<path fill="#808080" d="M232.2 623.3L228.5 612.7L224.8 610.3L228.5 620.8z"/>
<path fill="#808080" d="M202.6 571.1L198.9 563.3L195.2 559.8L198.9 567.7z"/>
<path fill="#808080" d="M195.2 559.8L191.5 554.8L187.8 550.4L191.5 555.4z"/>
<path fill="#808080" d="M172.9 543.3L169.2 550.2L165.5 545.5L169.3 538.6z"/>
<path fill="#808080" d="M165.5 545.5L161.8 558.1L158.1 553.4L161.8 540.9z"/>
<path fill="#808080" d="M158.1 553.4L154.4 570.9L150.7 566.3L154.4 548.8z"/>
<path fill="#008fff" d="M336.0 659.5L332.3 660.8L328.6 661.9L332.3 660.6z"/>
<path fill="#0080ff" d="M321.2 664.2L317.4 664.4L313.7 666.2L317.5 666.1z"/>
<path fill="#0070ff" d="M313.7 666.2L310.0 666.0L306.3 667.9L310.1 668.1z"/>
<path fill="#0070ff" d="M306.3 667.9L302.6 667.3L298.9 669.0L302.6 669.5z"/>
<path fill="#0070ff" d="M291.5 669.7L287.8 668.0L284.1 669.3L287.8 671.1z"/>
<path fill="#0070ff" d="M284.1 669.3L280.4 666.8L276.7 667.3L280.4 669.9z"/>
<path fill="#0080ff" d="M276.7 667.3L273.0 663.8L269.3 663.7L273.0 667.2z"/>
<path fill="#008fff" d="M269.3 663.7L265.6 659.0L261.9 658.7L265.6 663.4z"/>
<path fill="#00ffff" d="M247.1 644.6L243.3 636.0L239.6 635.0L243.4 643.6z"/>
<path fill="#808080" d="M224.8 610.3L221.1 599.6L217.4 596.8L221.1 607.5z"/>
<path fill="#808080" d="M217.4 596.8L213.7 586.3L210.0 583.6L213.7 594.1z"/>
<path fill="#808080" d="M210.0 583.6L206.3 573.9L202.6 571.1L206.3 580.8z"/>
<path fill="#808080" d="M180.4 544.9L176.6 548.0L172.9 543.3L176.7 540.2z"/>
<path fill="#808080" d="M143.3 582.8L139.6 605.4L135.9 601.6L139.6 579.1z"/>
<path fill="#00afff" d="M113.7 652.7L109.9 658.9L106.3 658.6L110.0 652.4z"/>
<path fill="#009fff" d="M106.3 658.6L102.5 655.4L98.8 656.4L102.6 659.6z"/>
<path fill="#808080" d="M187.8 550.4L184.1 549.8L180.4 544.9L184.1 545.5z"/>
<path fill="#808080" d="M150.7 566.3L147.0 587.1L143.3 582.8L147.0 562.0z"/>
<path fill="#20ffdf" d="M132.2 624.4L128.5 644.4L124.8 641.5L128.5 621.5z"/>
<path fill="#00dfff" d="M124.8 641.5L121.1 655.6L117.4 653.8L121.1 639.6z"/>
<path fill="#808080" d="M169.2 550.2L165.5 562.7L161.8 558.1L165.5 545.5z"/>
<path fill="#808080" d="M161.8 558.1L158.1 575.6L154.4 570.9L158.1 553.4z"/>
<path fill="#008fff" d="M332.3 660.8L328.5 661.6L324.8 662.7L328.6 661.9z"/>
<path fill="#008fff" d="M324.8 662.7L321.1 662.8L317.4 664.4L321.2 664.2z"/>
<path fill="#0080ff" d="M317.4 664.4L313.7 664.2L310.0 666.0L313.7 666.2z"/>
<path fill="#0080ff" d="M310.0 666.0L306.3 665.5L302.6 667.3L306.3 667.9z"/>
<path fill="#0080ff" d="M302.6 667.3L298.9 666.3L295.2 668.0L298.9 669.0z"/>
<path fill="#0080ff" d="M295.2 668.0L291.5 666.2L287.8 668.0L291.5 669.7z"/>
<path fill="#0080ff" d="M287.8 668.0L284.1 665.5L280.4 666.8L284.1 669.3z"/>
<path fill="#0080ff" d="M280.4 666.8L276.7 663.3L273.0 663.8L276.7 667.3z"/>
<path fill="#008fff" d="M273.0 663.8L269.3 659.1L265.6 659.0L269.3 663.7z"/>
<path fill="#00afff" d="M265.6 659.0L261.8 653.0L258.2 652.7L261.9 658.7z"/>
<path fill="#00cfff" d="M258.2 652.7L254.4 645.5L250.7 645.1L254.5 652.4z"/>
<path fill="#00ffff" d="M250.7 645.1L247.0 636.5L243.3 636.0L247.1 644.6z"/>
<path fill="#30ffcf" d="M243.3 636.0L239.6 626.2L235.9 625.2L239.6 635.0z"/>
<path fill="#808080" d="M235.9 625.2L232.2 614.6L228.5 612.7L232.2 623.3z"/>
<path fill="#808080" d="M228.5 612.7L224.8 602.0L221.1 599.6L224.8 610.3z"/>
<path fill="#808080" d="M221.1 599.6L217.4 589.1L213.7 586.3L217.4 596.8z"/>
<path fill="#808080" d="M213.7 586.3L210.0 576.7L206.3 573.9L210.0 583.6z"/>
<path fill="#808080" d="M206.3 573.9L202.6 566.1L198.9 563.3L202.6 571.1z"/>
<path fill="#808080" d="M198.9 563.3L195.2 558.3L191.5 554.8L195.2 559.8z"/>
<path fill="#808080" d="M176.6 548.0L172.9 554.9L169.2 550.2L172.9 543.3z"/>
<path fill="#808080" d="M139.6 605.4L135.9 628.2L132.2 624.4L135.9 601.6z"/>
<path fill="#00afff" d="M117.4 653.8L113.6 660.0L109.9 658.9L113.7 652.7z"/>
<path fill="#00afff" d="M109.9 658.9L106.2 655.7L102.5 655.4L106.3 658.6z"/>
<path fill="#808080" d="M191.5 554.8L187.7 554.2L184.1 549.8L187.8 550.4z"/>
<path fill="#808080" d="M184.1 549.8L180.3 552.9L176.6 548.0L180.4 544.9z"/>
<path fill="#808080" d="M154.4 570.9L150.7 591.7L147.0 587.1L150.7 566.3z"/>
<path fill="#808080" d="M147.0 587.1L143.3 609.7L139.6 605.4L143.3 582.8z"/>
<path fill="#00cfff" d="M128.5 644.4L124.7 658.5L121.1 655.6L124.8 641.5z"/>
<path fill="#808080" d="M165.5 562.7L161.8 580.2L158.1 575.6L161.8 558.1z"/>
<path fill="#009fff" d="M328.5 661.6L324.8 661.7L321.1 662.8L324.8 662.7z"/>
<path fill="#008fff" d="M321.1 662.8L317.4 662.6L313.7 664.2L317.4 664.4z"/>
<path fill="#008fff" d="M306.3 665.5L302.6 664.4L298.9 666.3L302.6 667.3z"/>
<path fill="#008fff" d="M284.1 665.5L280.4 661.9L276.7 663.3L280.4 666.8z"/>
<path fill="#009fff" d="M276.7 663.3L272.9 658.6L269.3 659.1L273.0 663.8z"/>
<path fill="#00bfff" d="M269.3 659.1L265.5 653.2L261.8 653.0L265.6 659.0z"/>
<path fill="#00dfff" d="M261.8 653.0L258.1 645.8L254.4 645.5L258.2 652.7z"/>
<path fill="#00ffff" d="M254.4 645.5L250.7 636.9L247.0 636.5L250.7 645.1z"/>
<path fill="#30ffcf" d="M247.0 636.5L243.3 626.8L239.6 626.2L243.3 636.0z"/>
<path fill="#808080" d="M224.8 602.0L221.1 591.5L217.4 589.1L221.1 599.6z"/>
<path fill="#808080" d="M217.4 589.1L213.7 579.4L210.0 576.7L213.7 586.3z"/>
<path fill="#808080" d="M210.0 576.7L206.3 568.8L202.6 566.1L206.3 573.9z"/>
<path fill="#808080" d="M172.9 554.9L169.2 567.4L165.5 562.7L169.2 550.2z"/>
<path fill="#20ffdf" d="M135.9 628.2L132.2 648.1L128.5 644.4L132.2 624.4z"/>
<path fill="#00afff" d="M121.1 655.6L117.3 661.8L113.6 660.0L117.4 653.8z"/>
<path fill="#00afff" d="M113.6 660.0L109.9 656.8L106.2 655.7L109.9 658.9z"/>
<path fill="#008fff" d="M313.7 664.2L310.0 663.6L306.3 665.5L310.0 666.0z"/>
<path fill="#0080ff" d="M298.9 666.3L295.2 664.6L291.5 666.2L295.2 668.0z"/>
<path fill="#008fff" d="M291.5 666.2L287.8 663.7L284.1 665.5L287.8 668.0z"/>
<path fill="#808080" d="M239.6 626.2L235.9 615.7L232.2 614.6L235.9 625.2z"/>
<path fill="#808080" d="M232.2 614.6L228.5 603.9L224.8 602.0L228.5 612.7z"/>
<path fill="#808080" d="M202.6 566.1L198.8 561.1L195.2 558.3L198.9 563.3z"/>
<path fill="#808080" d="M187.7 554.2L184.0 557.3L180.3 552.9L184.1 549.8z"/>
<path fill="#808080" d="M180.3 552.9L176.6 559.8L172.9 554.9L176.6 548.0z"/>
<path fill="#808080" d="M158.1 575.6L154.4 596.4L150.7 591.7L154.4 570.9z"/>
<path fill="#808080" d="M150.7 591.7L147.0 614.3L143.3 609.7L147.0 587.1z"/>
<path fill="#808080" d="M143.3 609.7L139.6 632.5L135.9 628.2L139.6 605.4z"/>
<path fill="#808080" d="M195.2 558.3L191.4 557.7L187.7 554.2L191.5 554.8z"/>
<path fill="#00afff" d="M280.4 661.9L276.6 657.3L272.9 658.6L276.7 663.3z"/>
<path fill="#00bfff" d="M272.9 658.6L269.2 652.6L265.5 653.2L269.3 659.1z"/>
<path fill="#30ffcf" d="M250.7 636.9L247.0 627.1L243.3 626.8L247.0 636.5z"/>
<path fill="#808080" d="M221.1 591.5L217.4 581.9L213.7 579.4L217.4 589.1z"/>
<path fill="#808080" d="M213.7 579.4L209.9 571.5L206.3 568.8L210.0 576.7z"/>
<path fill="#808080" d="M169.2 567.4L165.5 585.0L161.8 580.2L165.5 562.7z"/>
<path fill="#00cfff" d="M132.2 648.1L128.4 662.3L124.7 658.5L128.5 644.4z"/>
<path fill="#00afff" d="M124.7 658.5L121.0 664.7L117.3 661.8L121.1 655.6z"/>
<path fill="#00afff" d="M117.3 661.8L113.6 658.6L109.9 656.8L113.6 660.0z"/>
<path fill="#009fff" d="M317.4 662.6L313.7 662.1L310.0 663.6L313.7 664.2z"/>
<path fill="#009fff" d="M310.0 663.6L306.3 662.6L302.6 664.4L306.3 665.5z"/>
<path fill="#008fff" d="M302.6 664.4L298.9 662.7L295.2 664.6L298.9 666.3z"/>
<path fill="#009fff" d="M287.8 663.7L284.1 660.2L280.4 661.9L284.1 665.5z"/>
<path fill="#00dfff" d="M265.5 653.2L261.8 645.9L258.1 645.8L261.8 653.0z"/>
<path fill="#808080" d="M243.3 626.8L239.6 616.2L235.9 615.7L239.6 626.2z"/>
<path fill="#808080" d="M228.5 603.9L224.8 593.4L221.1 591.5L224.8 602.0z"/>
<path fill="#808080" d="M206.3 568.8L202.5 563.9L198.8 561.1L202.6 566.1z"/>
<path fill="#808080" d="M184.0 557.3L180.3 564.2L176.6 559.8L180.3 552.9z"/>
<path fill="#808080" d="M176.6 559.8L172.9 572.3L169.2 567.4L172.9 554.9z"/>
<path fill="#808080" d="M161.8 580.2L158.1 601.0L154.4 596.4L158.1 575.6z"/>
<path fill="#808080" d="M154.4 596.4L150.7 619.0L147.0 614.3L150.7 591.7z"/>
<path fill="#808080" d="M147.0 614.3L143.3 637.1L139.6 632.5L143.3 609.7z"/>
<path fill="#10ffef" d="M139.6 632.5L135.8 652.4L132.2 648.1L135.9 628.2z"/>
<path fill="#009fff" d="M324.8 661.7L321.1 661.5L317.4 662.6L321.1 662.8z"/>
<path fill="#009fff" d="M295.2 664.6L291.5 662.0L287.8 663.7L291.5 666.2z"/>
<path fill="#00ffff" d="M258.1 645.8L254.4 637.2L250.7 636.9L254.4 645.5z"/>
<path fill="#808080" d="M235.9 615.7L232.2 605.0L228.5 603.9L232.2 614.6z"/>
<path fill="#808080" d="M191.4 557.7L187.7 560.8L184.0 557.3L187.7 554.2z"/>
<path fill="#808080" d="M198.8 561.1L195.1 560.5L191.4 557.7L195.2 558.3z"/>
<path fill="#00cfff" d="M276.6 657.3L272.9 651.3L269.2 652.6L272.9 658.6z"/>
<path fill="#808080" d="M217.4 581.9L213.6 574.0L209.9 571.5L213.7 579.4z"/>
<path fill="#00afff" d="M121.0 664.7L117.3 661.5L113.6 658.6L117.3 661.8z"/>
<path fill="#00afff" d="M313.7 662.1L310.0 661.0L306.3 662.6L310.0 663.6z"/>
<path fill="#00bfff" d="M284.1 660.2L280.3 655.5L276.6 657.3L280.4 661.9z"/>
<path fill="#00efff" d="M269.2 652.6L265.5 645.3L261.8 645.9L265.5 653.2z"/>
<path fill="#808080" d="M224.8 593.4L221.1 583.8L217.4 581.9L221.1 591.5z"/>
<path fill="#808080" d="M209.9 571.5L206.2 566.6L202.5 563.9L206.3 568.8z"/>
<path fill="#808080" d="M180.3 564.2L176.6 576.7L172.9 572.3L176.6 559.8z"/>
<path fill="#808080" d="M172.9 572.3L169.2 589.8L165.5 585.0L169.2 567.4z"/>
<path fill="#808080" d="M158.1 601.0L154.4 623.6L150.7 619.0L154.4 596.4z"/>
<path fill="#50ffaf" d="M150.7 619.0L146.9 641.8L143.3 637.1L147.0 614.3z"/>
<path fill="#00ffff" d="M143.3 637.1L139.5 657.0L135.8 652.4L139.6 632.5z"/>
<path fill="#00bfff" d="M135.8 652.4L132.1 666.6L128.4 662.3L132.2 648.1z"/>
<path fill="#00afff" d="M321.1 661.5L317.4 661.0L313.7 662.1L317.4 662.6z"/>
<path fill="#009fff" d="M306.3 662.6L302.6 660.9L298.9 662.7L302.6 664.4z"/>
<path fill="#00afff" d="M298.9 662.7L295.2 660.2L291.5 662.0L295.2 664.6z"/>
<path fill="#00afff" d="M291.5 662.0L287.7 658.5L284.1 660.2L287.8 663.7z"/>
<path fill="#10ffef" d="M261.8 645.9L258.1 637.3L254.4 637.2L258.1 645.8z"/>
<path fill="#40ffbf" d="M254.4 637.2L250.7 627.4L247.0 627.1L250.7 636.9z"/>
<path fill="#808080" d="M247.0 627.1L243.3 616.5L239.6 616.2L243.3 626.8z"/>
<path fill="#808080" d="M239.6 616.2L235.9 605.5L232.2 605.0L235.9 615.7z"/>
<path fill="#808080" d="M232.2 605.0L228.5 594.5L224.8 593.4L228.5 603.9z"/>
<path fill="#808080" d="M187.7 560.8L184.0 567.7L180.3 564.2L184.0 557.3z"/>
<path fill="#808080" d="M165.5 585.0L161.8 605.8L158.1 601.0L161.8 580.2z"/>
<path fill="#009fff" d="M128.4 662.3L124.7 668.5L121.0 664.7L124.7 658.5z"/>
<path fill="#808080" d="M202.5 563.9L198.8 563.2L195.1 560.5L198.8 561.1z"/>
<path fill="#808080" d="M195.1 560.5L191.4 563.5L187.7 560.8L191.4 557.7z"/>
<path fill="#00dfff" d="M280.3 655.5L276.6 649.5L272.9 651.3L276.6 657.3z"/>
<path fill="#808080" d="M221.1 583.8L217.3 575.9L213.6 574.0L217.4 581.9z"/>
<path fill="#808080" d="M213.6 574.0L209.9 569.0L206.2 566.6L209.9 571.5z"/>
<path fill="#808080" d="M176.6 576.7L172.9 594.3L169.2 589.8L172.9 572.3z"/>
<path fill="#40ffbf" d="M154.4 623.6L150.6 646.4L146.9 641.8L150.7 619.0z"/>
<path fill="#00efff" d="M146.9 641.8L143.2 661.7L139.5 657.0L143.3 637.1z"/>
<path fill="#00afff" d="M139.5 657.0L135.8 671.2L132.1 666.6L135.8 652.4z"/>
<path fill="#00afff" d="M317.4 661.0L313.7 659.9L310.0 661.0L313.7 662.1z"/>
<path fill="#00afff" d="M310.0 661.0L306.3 659.3L302.6 660.9L306.3 662.6z"/>
<path fill="#00bfff" d="M295.2 660.2L291.4 656.7L287.7 658.5L291.5 662.0z"/>
<path fill="#00cfff" d="M287.7 658.5L284.0 653.8L280.3 655.5L284.1 660.2z"/>
<path fill="#00efff" d="M272.9 651.3L269.2 644.0L265.5 645.3L269.2 652.6z"/>
<path fill="#10ffef" d="M265.5 645.3L261.8 636.7L258.1 637.3L261.8 645.9z"/>
<path fill="#40ffbf" d="M258.1 637.3L254.4 627.5L250.7 627.4L254.4 637.2z"/>
<path fill="#808080" d="M250.7 627.4L247.0 616.8L243.3 616.5L247.0 627.1z"/>
<path fill="#808080" d="M243.3 616.5L239.6 605.8L235.9 605.5L239.6 616.2z"/>
<path fill="#808080" d="M235.9 605.5L232.2 595.0L228.5 594.5L232.2 605.0z"/>
<path fill="#808080" d="M228.5 594.5L224.7 584.8L221.1 583.8L224.8 593.4z"/>
<path fill="#808080" d="M184.0 567.7L180.3 580.2L176.6 576.7L180.3 564.2z"/>
<path fill="#808080" d="M161.8 605.8L158.1 628.3L154.4 623.6L158.1 601.0z"/>
<path fill="#009fff" d="M124.7 668.5L121.0 665.3L117.3 661.5L121.0 664.7z"/>
<path fill="#00bfff" d="M302.6 660.9L298.8 658.3L295.2 660.2L298.9 662.7z"/>
<path fill="#808080" d="M206.2 566.6L202.5 565.9L198.8 563.2L202.5 563.9z"/>
<path fill="#808080" d="M198.8 563.2L195.1 566.3L191.4 563.5L195.1 560.5z"/>
<path fill="#808080" d="M191.4 563.5L187.7 570.5L184.0 567.7L187.7 560.8z"/>
<path fill="#808080" d="M169.2 589.8L165.5 610.6L161.8 605.8L165.5 585.0z"/>
<path fill="#008fff" d="M132.1 666.6L128.4 672.8L124.7 668.5L128.4 662.3z"/>
<path fill="#00dfff" d="M150.6 646.4L146.9 666.3L143.2 661.7L146.9 641.8z"/>
<path fill="#009fff" d="M143.2 661.7L139.5 675.8L135.8 671.2L139.5 657.0z"/>
<path fill="#00bfff" d="M313.7 659.9L309.9 658.2L306.3 659.3L310.0 661.0z"/>
<path fill="#00cfff" d="M306.3 659.3L302.5 656.8L298.8 658.3L302.6 660.9z"/>
<path fill="#00cfff" d="M298.8 658.3L295.1 654.8L291.4 656.7L295.2 660.2z"/>
<path fill="#00dfff" d="M291.4 656.7L287.7 652.0L284.0 653.8L287.7 658.5z"/>
<path fill="#00efff" d="M284.0 653.8L280.3 647.8L276.6 649.5L280.3 655.5z"/>
<path fill="#00ffff" d="M276.6 649.5L272.9 642.2L269.2 644.0L272.9 651.3z"/>
<path fill="#20ffdf" d="M269.2 644.0L265.5 635.4L261.8 636.7L265.5 645.3z"/>
<path fill="#50ffaf" d="M261.8 636.7L258.1 627.0L254.4 627.5L258.1 637.3z"/>
<path fill="#808080" d="M254.4 627.5L250.7 616.9L247.0 616.8L250.7 627.4z"/>
<path fill="#808080" d="M239.6 605.8L235.8 595.3L232.2 595.0L235.9 605.5z"/>
<path fill="#808080" d="M232.2 595.0L228.4 585.3L224.7 584.8L228.5 594.5z"/>
<path fill="#808080" d="M224.7 584.8L221.0 577.0L217.3 575.9L221.1 583.8z"/>
<path fill="#808080" d="M217.3 575.9L213.6 570.9L209.9 569.0L213.6 574.0z"/>
<path fill="#808080" d="M209.9 569.0L206.2 568.4L202.5 565.9L206.2 566.6z"/>
<path fill="#808080" d="M202.5 565.9L198.8 569.0L195.1 566.3L198.8 563.2z"/>
<path fill="#808080" d="M195.1 566.3L191.4 573.2L187.7 570.5L191.4 563.5z"/>
<path fill="#808080" d="M187.7 570.5L184.0 583.0L180.3 580.2L184.0 567.7z"/>
<path fill="#808080" d="M180.3 580.2L176.6 597.7L172.9 594.3L176.6 576.7z"/>
<path fill="#808080" d="M172.9 594.3L169.2 615.0L165.5 610.6L169.2 589.8z"/>
<path fill="#808080" d="M165.5 610.6L161.7 633.2L158.1 628.3L161.8 605.8z"/>
<path fill="#30ffcf" d="M158.1 628.3L154.3 651.1L150.6 646.4L154.4 623.6z"/>
<path fill="#008fff" d="M135.8 671.2L132.1 677.4L128.4 672.8L132.1 666.6z"/>
<path fill="#008fff" d="M128.4 672.8L124.7 669.6L121.0 665.3L124.7 668.5z"/>
<path fill="#808080" d="M247.0 616.8L243.3 606.1L239.6 605.8L243.3 616.5z"/>
<path fill="#008fff" d="M146.9 666.3L143.2 680.5L139.5 675.8L143.2 661.7z"/>
<path fill="#00ffff" d="M287.7 652.0L284.0 646.0L280.3 647.8L284.0 653.8z"/>
<path fill="#808080" d="M265.5 635.4L261.8 625.6L258.1 627.0L261.8 636.7z"/>
<path fill="#808080" d="M235.8 595.3L232.1 585.7L228.4 585.3L232.2 595.0z"/>
<path fill="#808080" d="M228.4 585.3L224.7 577.5L221.0 577.0L224.7 584.8z"/>
<path fill="#00cfff" d="M154.3 651.1L150.6 671.0L146.9 666.3L150.6 646.4z"/>
<path fill="#00cfff" d="M309.9 658.2L306.2 655.7L302.5 656.8L306.3 659.3z"/>
<path fill="#00dfff" d="M302.5 656.8L298.8 653.3L295.1 654.8L298.8 658.3z"/>
<path fill="#00efff" d="M295.1 654.8L291.4 650.1L287.7 652.0L291.4 656.7z"/>
<path fill="#10ffef" d="M280.3 647.8L276.6 640.6L272.9 642.2L276.6 649.5z"/>
<path fill="#30ffcf" d="M272.9 642.2L269.2 633.6L265.5 635.4L269.2 644.0z"/>
<path fill="#808080" d="M258.1 627.0L254.4 616.4L250.7 616.9L254.4 627.5z"/>
<path fill="#808080" d="M250.7 616.9L246.9 606.2L243.3 606.1L247.0 616.8z"/>
<path fill="#808080" d="M243.3 606.1L239.5 595.6L235.8 595.3L239.6 605.8z"/>
<path fill="#808080" d="M221.0 577.0L217.3 572.0L213.6 570.9L217.3 575.9z"/>
<path fill="#808080" d="M213.6 570.9L209.9 570.3L206.2 568.4L209.9 569.0z"/>
<path fill="#808080" d="M206.2 568.4L202.5 571.5L198.8 569.0L202.5 565.9z"/>
<path fill="#808080" d="M198.8 569.0L195.1 575.9L191.4 573.2L195.1 566.3z"/>
<path fill="#808080" d="M191.4 573.2L187.7 585.7L184.0 583.0L187.7 570.5z"/>
<path fill="#808080" d="M184.0 583.0L180.3 600.5L176.6 597.7L180.3 580.2z"/>
<path fill="#808080" d="M176.6 597.7L172.8 618.5L169.2 615.0L172.9 594.3z"/>
<path fill="#808080" d="M169.2 615.0L165.4 637.6L161.7 633.2L165.5 610.6z"/>
<path fill="#20ffdf" d="M161.7 633.2L158.0 656.0L154.3 651.1L158.1 628.3z"/>
<path fill="#0080ff" d="M139.5 675.8L135.8 682.0L132.1 677.4L135.8 671.2z"/>
<path fill="#008fff" d="M132.1 677.4L128.4 674.2L124.7 669.6L128.4 672.8z"/>
<path fill="#00ffff" d="M298.8 653.3L295.1 648.6L291.4 650.1L295.1 654.8z"/>
<path fill="#10ffef" d="M291.4 650.1L287.7 644.2L284.0 646.0L287.7 652.0z"/>
<path fill="#20ffdf" d="M284.0 646.0L280.3 638.7L276.6 640.6L280.3 647.8z"/>
<path fill="#808080" d="M269.2 633.6L265.5 623.9L261.8 625.6L265.5 635.4z"/>
<path fill="#808080" d="M232.1 585.7L228.4 577.8L224.7 577.5L228.4 585.3z"/>
<path fill="#808080" d="M224.7 577.5L221.0 572.5L217.3 572.0L221.0 577.0z"/>
<path fill="#808080" d="M202.5 571.5L198.8 578.4L195.1 575.9L198.8 569.0z"/>
<path fill="#808080" d="M195.1 575.9L191.4 588.4L187.7 585.7L191.4 573.2z"/>
<path fill="#808080" d="M187.7 585.7L183.9 603.3L180.3 600.5L184.0 583.0z"/>
<path fill="#10ffef" d="M165.4 637.6L161.7 660.4L158.0 656.0L161.7 633.2z"/>
<path fill="#00bfff" d="M158.0 656.0L154.3 675.9L150.6 671.0L154.3 651.1z"/>
<path fill="#0080ff" d="M150.6 671.0L146.9 685.2L143.2 680.5L146.9 666.3z"/>
<path fill="#0070ff" d="M143.2 680.5L139.5 686.7L135.8 682.0L139.5 675.8z"/>
<path fill="#0080ff" d="M135.8 682.0L132.1 678.8L128.4 674.2L132.1 677.4z"/>
<path fill="#00efff" d="M306.2 655.7L302.5 652.2L298.8 653.3L302.5 656.8z"/>
<path fill="#40ffbf" d="M276.6 640.6L272.9 632.0L269.2 633.6L272.9 642.2z"/>
<path fill="#808080" d="M261.8 625.6L258.1 615.1L254.4 616.4L258.1 627.0z"/>
<path fill="#808080" d="M254.4 616.4L250.6 605.7L246.9 606.2L250.7 616.9z"/>
<path fill="#808080" d="M246.9 606.2L243.2 595.7L239.5 595.6L243.3 606.1z"/>
<path fill="#808080" d="M239.5 595.6L235.8 586.0L232.1 585.7L235.8 595.3z"/>
<path fill="#808080" d="M209.9 570.3L206.2 573.4L202.5 571.5L206.2 568.4z"/>
<path fill="#808080" d="M172.8 618.5L169.1 641.1L165.4 637.6L169.2 615.0z"/>
<path fill="#808080" d="M217.3 572.0L213.6 571.4L209.9 570.3L213.6 570.9z"/>
<path fill="#808080" d="M180.3 600.5L176.5 621.3L172.8 618.5L176.6 597.7z"/>
<path fill="#00ffff" d="M302.5 652.2L298.8 647.5L295.1 648.6L298.8 653.3z"/>
<path fill="#20ffdf" d="M295.1 648.6L291.4 642.6L287.7 644.2L291.4 650.1z"/>
<path fill="#30ffcf" d="M287.7 644.2L284.0 636.9L280.3 638.7L284.0 646.0z"/>
<path fill="#50ffaf" d="M280.3 638.7L276.6 630.1L272.9 632.0L276.6 640.6z"/>
<path fill="#808080" d="M272.9 632.0L269.2 622.2L265.5 623.9L269.2 633.6z"/>
<path fill="#808080" d="M265.5 623.9L261.7 613.3L258.1 615.1L261.8 625.6z"/>
<path fill="#808080" d="M258.1 615.1L254.3 604.3L250.6 605.7L254.4 616.4z"/>
<path fill="#808080" d="M250.6 605.7L246.9 595.2L243.2 595.7L246.9 606.2z"/>
<path fill="#808080" d="M243.2 595.7L239.5 586.1L235.8 586.0L239.5 595.6z"/>
<path fill="#808080" d="M235.8 586.0L232.1 578.1L228.4 577.8L232.1 585.7z"/>
<path fill="#808080" d="M228.4 577.8L224.7 572.8L221.0 572.5L224.7 577.5z"/>
<path fill="#808080" d="M221.0 572.5L217.3 571.9L213.6 571.4L217.3 572.0z"/>
<path fill="#808080" d="M213.6 571.4L209.9 574.4L206.2 573.4L209.9 570.3z"/>
<path fill="#808080" d="M206.2 573.4L202.5 580.3L198.8 578.4L202.5 571.5z"/>
<path fill="#808080" d="M198.8 578.4L195.1 590.9L191.4 588.4L195.1 575.9z"/>
<path fill="#808080" d="M191.4 588.4L187.6 606.0L183.9 603.3L187.7 585.7z"/>
<path fill="#808080" d="M183.9 603.3L180.2 624.1L176.5 621.3L180.3 600.5z"/>
<path fill="#808080" d="M176.5 621.3L172.8 643.9L169.1 641.1L172.8 618.5z"/>
<path fill="#00ffff" d="M169.1 641.1L165.4 663.9L161.7 660.4L165.4 637.6z"/>
<path fill="#00afff" d="M161.7 660.4L158.0 680.3L154.3 675.9L158.0 656.0z"/>
<path fill="#0070ff" d="M154.3 675.9L150.6 690.1L146.9 685.2L150.6 671.0z"/>
<path fill="#0060ff" d="M146.9 685.2L143.2 691.4L139.5 686.7L143.2 680.5z"/>
<path fill="#0070ff" d="M139.5 686.7L135.8 683.5L132.1 678.8L135.8 682.0z"/>
<path fill="#808080" d="M195.1 590.9L191.3 608.4L187.6 606.0L191.4 588.4z"/>
<path fill="#0060ff" d="M158.0 680.3L154.3 694.5L150.6 690.1L154.3 675.9z"/>
<path fill="#20ffdf" d="M298.8 647.5L295.1 641.5L291.4 642.6L295.1 648.6z"/>
<path fill="#40ffbf" d="M291.4 642.6L287.7 635.3L284.0 636.9L287.7 644.2z"/>
<path fill="#808080" d="M276.6 630.1L272.8 620.3L269.2 622.2L272.9 632.0z"/>
<path fill="#808080" d="M254.3 604.3L250.6 593.8L246.9 595.2L250.6 605.7z"/>
<path fill="#808080" d="M246.9 595.2L243.2 585.5L239.5 586.1L243.2 595.7z"/>
<path fill="#808080" d="M239.5 586.1L235.8 578.2L232.1 578.1L235.8 586.0z"/>
<path fill="#808080" d="M232.1 578.1L228.4 573.1L224.7 572.8L228.4 577.8z"/>
<path fill="#808080" d="M202.5 580.3L198.7 592.8L195.1 590.9L198.8 578.4z"/>
<path fill="#009fff" d="M165.4 663.9L161.7 683.8L158.0 680.3L161.7 660.4z"/>
<path fill="#0060ff" d="M143.2 691.4L139.5 688.2L135.8 683.5L139.5 686.7z"/>
<path fill="#808080" d="M284.0 636.9L280.3 628.3L276.6 630.1L280.3 638.7z"/>
<path fill="#808080" d="M269.2 622.2L265.4 611.6L261.7 613.3L265.5 623.9z"/>
<path fill="#808080" d="M261.7 613.3L258.0 602.6L254.3 604.3L258.1 615.1z"/>
<path fill="#808080" d="M224.7 572.8L221.0 572.2L217.3 571.9L221.0 572.5z"/>
<path fill="#808080" d="M217.3 571.9L213.6 575.0L209.9 574.4L213.6 571.4z"/>
<path fill="#808080" d="M209.9 574.4L206.2 581.3L202.5 580.3L206.2 573.4z"/>
<path fill="#808080" d="M187.6 606.0L183.9 626.8L180.2 624.1L183.9 603.3z"/>
<path fill="#808080" d="M180.2 624.1L176.5 646.6L172.8 643.9L176.5 621.3z"/>
<path fill="#ff00ff" d="M172.8 643.9L169.1 666.7L165.4 663.9L169.1 641.1z"/>
<path fill="#0050ff" d="M150.6 690.1L146.9 696.3L143.2 691.4L146.9 685.2z"/>
<path fill="#50ffaf" d="M295.1 641.5L291.4 634.2L287.7 635.3L291.4 642.6z"/>
<path fill="#808080" d="M287.7 635.3L283.9 626.7L280.3 628.3L284.0 636.9z"/>
<path fill="#808080" d="M280.3 628.3L276.5 618.5L272.8 620.3L276.6 630.1z"/>
<path fill="#808080" d="M272.8 620.3L269.1 609.8L265.4 611.6L269.2 622.2z"/>
<path fill="#808080" d="M258.0 602.6L254.3 592.1L250.6 593.8L254.3 604.3z"/>
<path fill="#808080" d="M250.6 593.8L246.9 584.2L243.2 585.5L246.9 595.2z"/>
<path fill="#808080" d="M243.2 585.5L239.5 577.7L235.8 578.2L239.5 586.1z"/>
<path fill="#808080" d="M235.8 578.2L232.1 573.2L228.4 573.1L232.1 578.1z"/>
<path fill="#808080" d="M213.6 575.0L209.8 581.9L206.2 581.3L209.9 574.4z"/>
<path fill="#808080" d="M206.2 581.3L202.4 593.9L198.7 592.8L202.5 580.3z"/>
<path fill="#808080" d="M198.7 592.8L195.0 610.3L191.3 608.4L195.1 590.9z"/>
<path fill="#808080" d="M191.3 608.4L187.6 629.2L183.9 626.8L187.6 606.0z"/>
<path fill="#808080" d="M183.9 626.8L180.2 649.3L176.5 646.6L180.2 624.1z"/>
<path fill="#00efff" d="M176.5 646.6L172.8 669.4L169.1 666.7L172.8 643.9z"/>
<path fill="#009fff" d="M169.1 666.7L165.4 686.6L161.7 683.8L165.4 663.9z"/>
<path fill="#0060ff" d="M161.7 683.8L158.0 697.9L154.3 694.5L158.0 680.3z"/>
<path fill="#0040ff" d="M154.3 694.5L150.6 700.7L146.9 696.3L150.6 690.1z"/>
<path fill="#0050ff" d="M146.9 696.3L143.2 693.1L139.5 688.2L143.2 691.4z"/>
<path fill="#808080" d="M265.4 611.6L261.7 600.9L258.0 602.6L261.7 613.3z"/>
<path fill="#808080" d="M228.4 573.1L224.7 572.5L221.0 572.2L224.7 572.8z"/>
<path fill="#808080" d="M221.0 572.2L217.3 575.3L213.6 575.0L217.3 571.9z"/>
<path fill="#808080" d="M246.9 584.2L243.2 576.3L239.5 577.7L243.2 585.5z"/>
<path fill="#808080" d="M291.4 634.2L287.6 625.6L283.9 626.7L287.7 635.3z"/>
<path fill="#808080" d="M283.9 626.7L280.2 616.9L276.5 618.5L280.3 628.3z"/>
<path fill="#808080" d="M276.5 618.5L272.8 607.9L269.1 609.8L272.8 620.3z"/>
<path fill="#808080" d="M269.1 609.8L265.4 599.1L261.7 600.9L265.4 611.6z"/>
<path fill="#808080" d="M261.7 600.9L258.0 590.4L254.3 592.1L258.0 602.6z"/>
<path fill="#808080" d="M254.3 592.1L250.6 582.4L246.9 584.2L250.6 593.8z"/>
<path fill="#808080" d="M239.5 577.7L235.8 572.7L232.1 573.2L235.8 578.2z"/>
<path fill="#808080" d="M232.1 573.2L228.4 572.6L224.7 572.5L228.4 573.1z"/>
<path fill="#808080" d="M224.7 572.5L220.9 575.6L217.3 575.3L221.0 572.2z"/>
<path fill="#808080" d="M217.3 575.3L213.5 582.2L209.8 581.9L213.6 575.0z"/>
<path fill="#808080" d="M209.8 581.9L206.1 594.4L202.4 593.9L206.2 581.3z"/>
<path fill="#808080" d="M202.4 593.9L198.7 611.4L195.0 610.3L198.7 592.8z"/>
<path fill="#808080" d="M195.0 610.3L191.3 631.1L187.6 629.2L191.3 608.4z"/>
<path fill="#50ffaf" d="M187.6 629.2L183.9 651.8L180.2 649.3L183.9 626.8z"/>
<path fill="#00efff" d="M180.2 649.3L176.5 672.1L172.8 669.4L176.5 646.6z"/>
<path fill="#008fff" d="M172.8 669.4L169.1 689.4L165.4 686.6L169.1 666.7z"/>
<path fill="#0050ff" d="M165.4 686.6L161.7 700.7L158.0 697.9L161.7 683.8z"/>
<path fill="#0030ff" d="M158.0 697.9L154.3 704.2L150.6 700.7L154.3 694.5z"/>
<path fill="#0040ff" d="M150.6 700.7L146.8 697.5L143.2 693.1L146.9 696.3z"/>
<path fill="#808080" d="M250.6 582.4L246.9 574.6L243.2 576.3L246.9 584.2z"/>
<path fill="#808080" d="M206.1 594.4L202.4 611.9L198.7 611.4L202.4 593.9z"/>
<path fill="#00efff" d="M183.9 651.8L180.2 674.6L176.5 672.1L180.2 649.3z"/>
<path fill="#008fff" d="M176.5 672.1L172.8 692.1L169.1 689.4L172.8 669.4z"/>
<path fill="#0050ff" d="M169.1 689.4L165.4 703.5L161.7 700.7L165.4 686.6z"/>
<path fill="#808080" d="M287.6 625.6L283.9 615.8L280.2 616.9L283.9 626.7z"/>
<path fill="#808080" d="M280.2 616.9L276.5 606.4L272.8 607.9L276.5 618.5z"/>
<path fill="#808080" d="M265.4 599.1L261.7 588.6L258.0 590.4L261.7 600.9z"/>
<path fill="#808080" d="M258.0 590.4L254.3 580.8L250.6 582.4L254.3 592.1z"/>
<path fill="#808080" d="M243.2 576.3L239.5 571.4L235.8 572.7L239.5 577.7z"/>
<path fill="#808080" d="M220.9 575.6L217.2 582.5L213.5 582.2L217.3 575.3z"/>
<path fill="#808080" d="M213.5 582.2L209.8 594.7L206.1 594.4L209.8 581.9z"/>
<path fill="#50ffaf" d="M191.3 631.1L187.6 653.7L183.9 651.8L187.6 629.2z"/>
<path fill="#0030ff" d="M154.3 704.2L150.5 700.9L146.8 697.5L150.6 700.7z"/>
<path fill="#808080" d="M272.8 607.9L269.1 597.2L265.4 599.1L269.1 609.8z"/>
<path fill="#808080" d="M235.8 572.7L232.1 572.1L228.4 572.6L232.1 573.2z"/>
<path fill="#808080" d="M228.4 572.6L224.6 575.7L220.9 575.6L224.7 572.5z"/>
<path fill="#808080" d="M198.7 611.4L195.0 632.2L191.3 631.1L195.0 610.3z"/>
<path fill="#0020ff" d="M161.7 700.7L157.9 706.9L154.3 704.2L158.0 697.9z"/>
<path fill="#808080" d="M283.9 615.8L280.2 605.3L276.5 606.4L280.2 616.9z"/>
<path fill="#808080" d="M276.5 606.4L272.8 595.7L269.1 597.2L272.8 607.9z"/>
<path fill="#808080" d="M269.1 597.2L265.4 586.7L261.7 588.6L265.4 599.1z"/>
<path fill="#808080" d="M261.7 588.6L258.0 578.9L254.3 580.8L258.0 590.4z"/>
<path fill="#808080" d="M254.3 580.8L250.6 572.9L246.9 574.6L250.6 582.4z"/>
<path fill="#808080" d="M246.9 574.6L243.2 569.6L239.5 571.4L243.2 576.3z"/>
<path fill="#808080" d="M232.1 572.1L228.3 575.2L224.6 575.7L228.4 572.6z"/>
<path fill="#808080" d="M224.6 575.7L220.9 582.6L217.2 582.5L220.9 575.6z"/>
<path fill="#808080" d="M217.2 582.5L213.5 595.0L209.8 594.7L213.5 582.2z"/>
<path fill="#808080" d="M209.8 594.7L206.1 612.2L202.4 611.9L206.1 594.4z"/>
<path fill="#808080" d="M202.4 611.9L198.7 632.7L195.0 632.2L198.7 611.4z"/>
<path fill="#50ffaf" d="M195.0 632.2L191.3 654.8L187.6 653.7L191.3 631.1z"/>
<path fill="#00efff" d="M187.6 653.7L183.9 676.5L180.2 674.6L183.9 651.8z"/>
<path fill="#008fff" d="M180.2 674.6L176.5 694.5L172.8 692.1L176.5 672.1z"/>
<path fill="#0040ff" d="M172.8 692.1L169.1 706.2L165.4 703.5L169.1 689.4z"/>
<path fill="#0020ff" d="M165.4 703.5L161.6 709.7L157.9 706.9L161.7 700.7z"/>
<path fill="#0020ff" d="M157.9 706.9L154.2 703.7L150.5 700.9L154.3 704.2z"/>
<path fill="#808080" d="M239.5 571.4L235.7 570.7L232.1 572.1L235.8 572.7z"/>
<path fill="#0040ff" d="M176.5 694.5L172.7 708.7L169.1 706.2L172.8 692.1z"/>
<path fill="#808080" d="M258.0 578.9L254.3 571.1L250.6 572.9L254.3 580.8z"/>
<path fill="#808080" d="M213.5 595.0L209.8 612.5L206.1 612.2L209.8 594.7z"/>
<path fill="#0080ff" d="M183.9 676.5L180.2 696.4L176.5 694.5L180.2 674.6z"/>
<path fill="#808080" d="M280.2 605.3L276.5 594.6L272.8 595.7L276.5 606.4z"/>
<path fill="#808080" d="M272.8 595.7L269.1 585.2L265.4 586.7L269.1 597.2z"/>
<path fill="#808080" d="M265.4 586.7L261.7 577.1L258.0 578.9L261.7 588.6z"/>
<path fill="#808080" d="M250.6 572.9L246.8 567.9L243.2 569.6L246.9 574.6z"/>
<path fill="#808080" d="M243.2 569.6L239.4 569.0L235.7 570.7L239.5 571.4z"/>
<path fill="#808080" d="M235.7 570.7L232.0 573.8L228.3 575.2L232.1 572.1z"/>
<path fill="#808080" d="M228.3 575.2L224.6 582.1L220.9 582.6L224.6 575.7z"/>
<path fill="#808080" d="M220.9 582.6L217.2 595.1L213.5 595.0L217.2 582.5z"/>
<path fill="#808080" d="M206.1 612.2L202.4 633.0L198.7 632.7L202.4 611.9z"/>
<path fill="#50ffaf" d="M198.7 632.7L195.0 655.3L191.3 654.8L195.0 632.2z"/>
<path fill="#00efff" d="M191.3 654.8L187.6 677.6L183.9 676.5L187.6 653.7z"/>
<path fill="#0020ff" d="M169.1 706.2L165.3 712.4L161.6 709.7L165.4 703.5z"/>
<path fill="#0020ff" d="M161.6 709.7L157.9 706.5L154.2 703.7L157.9 706.9z"/>
<path fill="#808080" d="M269.1 585.2L265.4 575.5L261.7 577.1L265.4 586.7z"/>
<path fill="#808080" d="M261.7 577.1L257.9 569.2L254.3 571.1L258.0 578.9z"/>
<path fill="#808080" d="M254.3 571.1L250.5 566.1L246.8 567.9L250.6 572.9z"/>
<path fill="#808080" d="M224.6 582.1L220.9 594.6L217.2 595.1L220.9 582.6z"/>
<path fill="#808080" d="M217.2 595.1L213.5 612.7L209.8 612.5L213.5 595.0z"/>
<path fill="#00efff" d="M195.0 655.3L191.3 678.1L187.6 677.6L191.3 654.8z"/>
<path fill="#0080ff" d="M187.6 677.6L183.8 697.5L180.2 696.4L183.9 676.5z"/>
<path fill="#0040ff" d="M180.2 696.4L176.4 710.6L172.7 708.7L176.5 694.5z"/>
<path fill="#0010ff" d="M172.7 708.7L169.0 714.9L165.3 712.4L169.1 706.2z"/>
<path fill="#0020ff" d="M165.3 712.4L161.6 709.2L157.9 706.5L161.6 709.7z"/>
<path fill="#808080" d="M276.5 594.6L272.8 584.1L269.1 585.2L272.8 595.7z"/>
<path fill="#808080" d="M239.4 569.0L235.7 572.1L232.0 573.8L235.7 570.7z"/>
<path fill="#808080" d="M232.0 573.8L228.3 580.7L224.6 582.1L228.3 575.2z"/>
<path fill="#808080" d="M209.8 612.5L206.1 633.3L202.4 633.0L206.1 612.2z"/>
<path fill="#808080" d="M202.4 633.0L198.7 655.6L195.0 655.3L198.7 632.7z"/>
<path fill="#808080" d="M246.8 567.9L243.1 567.3L239.4 569.0L243.2 569.6z"/>
<path fill="#808080" d="M272.8 584.1L269.1 574.4L265.4 575.5L269.1 585.2z"/>
<path fill="#808080" d="M265.4 575.5L261.6 567.7L257.9 569.2L261.7 577.1z"/>
<path fill="#808080" d="M257.9 569.2L254.2 564.2L250.5 566.1L254.3 571.1z"/>
<path fill="#808080" d="M250.5 566.1L246.8 565.4L243.1 567.3L246.8 567.9z"/>
<path fill="#808080" d="M243.1 567.3L239.4 570.4L235.7 572.1L239.4 569.0z"/>
<path fill="#808080" d="M235.7 572.1L232.0 579.0L228.3 580.7L232.0 573.8z"/>
<path fill="#808080" d="M228.3 580.7L224.6 593.2L220.9 594.6L224.6 582.1z"/>
<path fill="#808080" d="M220.9 594.6L217.2 612.1L213.5 612.7L217.2 595.1z"/>
<path fill="#808080" d="M213.5 612.7L209.8 633.4L206.1 633.3L209.8 612.5z"/>
<path fill="#808080" d="M206.1 633.3L202.4 655.9L198.7 655.6L202.4 633.0z"/>
<path fill="#00efff" d="M198.7 655.6L194.9 678.4L191.3 678.1L195.0 655.3z"/>
<path fill="#008fff" d="M191.3 678.1L187.5 698.0L183.8 697.5L187.6 677.6z"/>
<path fill="#0040ff" d="M183.8 697.5L180.1 711.6L176.4 710.6L180.2 696.4z"/>
<path fill="#0010ff" d="M176.4 710.6L172.7 716.8L169.0 714.9L172.7 708.7z"/>
<path fill="#0010ff" d="M169.0 714.9L165.3 711.7L161.6 709.2L165.3 712.4z"/>
<path fill="#0040ff" d="M187.5 698.0L183.8 712.1L180.1 711.6L183.8 697.5z"/>
<path fill="#808080" d="M269.1 574.4L265.3 566.6L261.6 567.7L265.4 575.5z"/>
<path fill="#808080" d="M261.6 567.7L257.9 562.7L254.2 564.2L257.9 569.2z"/>
<path fill="#808080" d="M232.0 579.0L228.3 591.5L224.6 593.2L228.3 580.7z"/>
<path fill="#808080" d="M224.6 593.2L220.9 610.8L217.2 612.1L220.9 594.6z"/>
<path fill="#00efff" d="M202.4 655.9L198.6 678.7L194.9 678.4L198.7 655.6z"/>
<path fill="#008fff" d="M194.9 678.4L191.2 698.3L187.5 698.0L191.3 678.1z"/>
<path fill="#0010ff" d="M172.7 716.8L169.0 713.6L165.3 711.7L169.0 714.9z"/>
<path fill="#808080" d="M254.2 564.2L250.5 563.6L246.8 565.4L250.5 566.1z"/>
<path fill="#808080" d="M246.8 565.4L243.1 568.5L239.4 570.4L243.1 567.3z"/>
<path fill="#808080" d="M239.4 570.4L235.7 577.3L232.0 579.0L235.7 572.1z"/>
<path fill="#808080" d="M217.2 612.1L213.5 632.9L209.8 633.4L213.5 612.7z"/>
<path fill="#808080" d="M209.8 633.4L206.1 656.0L202.4 655.9L206.1 633.3z"/>
<path fill="#0010ff" d="M180.1 711.6L176.4 717.8L172.7 716.8L176.4 710.6z"/>
<path fill="#808080" d="M265.3 566.6L261.6 561.6L257.9 562.7L261.6 567.7z"/>
<path fill="#808080" d="M257.9 562.7L254.2 562.0L250.5 563.6L254.2 564.2z"/>
<path fill="#808080" d="M250.5 563.6L246.8 566.7L243.1 568.5L246.8 565.4z"/>
<path fill="#808080" d="M243.1 568.5L239.4 575.4L235.7 577.3L239.4 570.4z"/>
<path fill="#808080" d="M235.7 577.3L232.0 589.8L228.3 591.5L232.0 579.0z"/>
<path fill="#808080" d="M228.3 591.5L224.6 609.0L220.9 610.8L224.6 593.2z"/>
<path fill="#808080" d="M220.9 610.8L217.2 631.6L213.5 632.9L217.2 612.1z"/>
<path fill="#808080" d="M213.5 632.9L209.7 655.5L206.1 656.0L209.8 633.4z"/>
<path fill="#00ffff" d="M206.1 656.0L202.3 678.8L198.6 678.7L202.4 655.9z"/>
<path fill="#008fff" d="M198.6 678.7L194.9 698.6L191.2 698.3L194.9 678.4z"/>
<path fill="#0040ff" d="M191.2 698.3L187.5 712.5L183.8 712.1L187.5 698.0z"/>
<path fill="#0010ff" d="M183.8 712.1L180.1 718.4L176.4 717.8L180.1 711.6z"/>
<path fill="#0010ff" d="M176.4 717.8L172.7 714.6L169.0 713.6L172.7 716.8z"/>
<path fill="#808080" d="M261.6 561.6L257.9 560.9L254.2 562.0L257.9 562.7z"/>
<path fill="#808080" d="M254.2 562.0L250.5 565.1L246.8 566.7L250.5 563.6z"/>
<path fill="#808080" d="M246.8 566.7L243.1 573.6L239.4 575.4L243.1 568.5z"/>
<path fill="#808080" d="M239.4 575.4L235.7 587.9L232.0 589.8L235.7 577.3z"/>
<path fill="#808080" d="M232.0 589.8L228.3 607.3L224.6 609.0L228.3 591.5z"/>
<path fill="#808080" d="M224.6 609.0L220.8 629.8L217.2 631.6L220.9 610.8z"/>
<path fill="#808080" d="M217.2 631.6L213.4 654.1L209.7 655.5L213.5 632.9z"/>
<path fill="#00ffff" d="M209.7 655.5L206.0 678.3L202.3 678.8L206.1 656.0z"/>
<path fill="#009fff" d="M202.3 678.8L198.6 698.7L194.9 698.6L198.6 678.7z"/>
<path fill="#0050ff" d="M194.9 698.6L191.2 712.8L187.5 712.5L191.2 698.3z"/>
<path fill="#0020ff" d="M187.5 712.5L183.8 718.7L180.1 718.4L183.8 712.1z"/>
<path fill="#0010ff" d="M180.1 718.4L176.4 715.1L172.7 714.6L176.4 717.8z"/>
<path fill="#808080" d="M235.7 587.9L231.9 605.5L228.3 607.3L232.0 589.8z"/>
<path fill="#10ffef" d="M213.4 654.1L209.7 676.9L206.0 678.3L209.7 655.5z"/>
<path fill="#009fff" d="M206.0 678.3L202.3 698.2L198.6 698.7L202.3 678.8z"/>
<path fill="#0050ff" d="M198.6 698.7L194.9 712.9L191.2 712.8L194.9 698.6z"/>
<path fill="#0020ff" d="M183.8 718.7L180.1 715.5L176.4 715.1L180.1 718.4z"/>
<path fill="#808080" d="M257.9 560.9L254.2 564.0L250.5 565.1L254.2 562.0z"/>
<path fill="#808080" d="M250.5 565.1L246.8 572.0L243.1 573.6L246.8 566.7z"/>
<path fill="#808080" d="M243.1 573.6L239.4 586.1L235.7 587.9L239.4 575.4z"/>
<path fill="#808080" d="M228.3 607.3L224.5 628.1L220.8 629.8L224.6 609.0z"/>
<path fill="#808080" d="M220.8 629.8L217.1 652.4L213.4 654.1L217.2 631.6z"/>
<path fill="#0020ff" d="M191.2 712.8L187.5 719.0L183.8 718.7L187.5 712.5z"/>
<path fill="#808080" d="M254.2 564.0L250.5 570.9L246.8 572.0L250.5 565.1z"/>
<path fill="#808080" d="M246.8 572.0L243.1 584.6L239.4 586.1L243.1 573.6z"/>
<path fill="#808080" d="M239.4 586.1L235.6 603.7L231.9 605.5L235.7 587.9z"/>
<path fill="#808080" d="M231.9 605.5L228.2 626.3L224.5 628.1L228.3 607.3z"/>
<path fill="#808080" d="M224.5 628.1L220.8 650.7L217.1 652.4L220.8 629.8z"/>
<path fill="#20ffdf" d="M217.1 652.4L213.4 675.2L209.7 676.9L213.4 654.1z"/>
<path fill="#00afff" d="M209.7 676.9L206.0 696.9L202.3 698.2L206.0 678.3z"/>
<path fill="#0060ff" d="M202.3 698.2L198.6 712.3L194.9 712.9L198.6 698.7z"/>
<path fill="#0020ff" d="M194.9 712.9L191.2 719.1L187.5 719.0L191.2 712.8z"/>
<path fill="#0020ff" d="M187.5 719.0L183.8 715.8L180.1 715.5L183.8 718.7z"/>
<path fill="#808080" d="M243.1 584.6L239.3 602.1L235.6 603.7L239.4 586.1z"/>
<path fill="#00bfff" d="M213.4 675.2L209.7 695.1L206.0 696.9L209.7 676.9z"/>
<path fill="#0060ff" d="M206.0 696.9L202.3 711.0L198.6 712.3L202.3 698.2z"/>
<path fill="#808080" d="M250.5 570.9L246.7 583.4L243.1 584.6L246.8 572.0z"/>
<path fill="#808080" d="M235.6 603.7L231.9 624.4L228.2 626.3L231.9 605.5z"/>
<path fill="#808080" d="M228.2 626.3L224.5 648.8L220.8 650.7L224.5 628.1z"/>
<path fill="#30ffcf" d="M220.8 650.7L217.1 673.5L213.4 675.2L217.1 652.4z"/>
<path fill="#0030ff" d="M198.6 712.3L194.9 718.6L191.2 719.1L194.9 712.9z"/>
<path fill="#0020ff" d="M191.2 719.1L187.5 715.9L183.8 715.8L187.5 719.0z"/>
<path fill="#808080" d="M246.7 583.4L243.0 601.0L239.3 602.1L243.1 584.6z"/>
<path fill="#40ffbf" d="M224.5 648.8L220.8 671.6L217.1 673.5L220.8 650.7z"/>
<path fill="#00cfff" d="M217.1 673.5L213.4 693.4L209.7 695.1L213.4 675.2z"/>
<path fill="#0070ff" d="M209.7 695.1L206.0 709.2L202.3 711.0L206.0 696.9z"/>
<path fill="#0040ff" d="M202.3 711.0L198.6 717.2L194.9 718.6L198.6 712.3z"/>
<path fill="#0030ff" d="M194.9 718.6L191.2 715.3L187.5 715.9L191.2 719.1z"/>
<path fill="#808080" d="M239.3 602.1L235.6 622.9L231.9 624.4L235.6 603.7z"/>
<path fill="#808080" d="M231.9 624.4L228.2 647.0L224.5 648.8L228.2 626.3z"/>
<path fill="#808080" d="M243.0 601.0L239.3 621.8L235.6 622.9L239.3 602.1z"/>
<path fill="#808080" d="M235.6 622.9L231.9 645.5L228.2 647.0L231.9 624.4z"/>
<path fill="#50ffaf" d="M228.2 647.0L224.5 669.8L220.8 671.6L224.5 648.8z"/>
<path fill="#00dfff" d="M220.8 671.6L217.1 691.6L213.4 693.4L217.1 673.5z"/>
<path fill="#0080ff" d="M213.4 693.4L209.7 707.6L206.0 709.2L209.7 695.1z"/>
<path fill="#0050ff" d="M206.0 709.2L202.3 715.5L198.6 717.2L202.3 711.0z"/>
<path fill="#0040ff" d="M198.6 717.2L194.8 714.0L191.2 715.3L194.9 718.6z"/>
<path fill="#808080" d="M231.9 645.5L228.2 668.2L224.5 669.8L228.2 647.0z"/>
<path fill="#00efff" d="M224.5 669.8L220.8 689.7L217.1 691.6L220.8 671.6z"/>
<path fill="#008fff" d="M217.1 691.6L213.4 705.7L209.7 707.6L213.4 693.4z"/>
<path fill="#0050ff" d="M202.3 715.5L198.5 712.2L194.8 714.0L198.6 717.2z"/>
<path fill="#808080" d="M239.3 621.8L235.6 644.3L231.9 645.5L235.6 622.9z"/>
<path fill="#0060ff" d="M209.7 707.6L205.9 713.8L202.3 715.5L206.0 709.2z"/>
<path fill="#808080" d="M235.6 644.3L231.9 667.1L228.2 668.2L231.9 645.5z"/>
<path fill="#00ffff" d="M228.2 668.2L224.5 688.2L220.8 689.7L224.5 669.8z"/>
<path fill="#009fff" d="M220.8 689.7L217.1 703.9L213.4 705.7L217.1 691.6z"/>
<path fill="#0070ff" d="M213.4 705.7L209.6 711.9L205.9 713.8L209.7 707.6z"/>
<path fill="#0060ff" d="M205.9 713.8L202.2 710.6L198.5 712.2L202.3 715.5z"/>
<path fill="#10ffef" d="M231.9 667.1L228.2 687.1L224.5 688.2L228.2 668.2z"/>
<path fill="#00afff" d="M224.5 688.2L220.7 702.3L217.1 703.9L220.8 689.7z"/>
<path fill="#0080ff" d="M217.1 703.9L213.3 710.1L209.6 711.9L213.4 705.7z"/>
<path fill="#0070ff" d="M209.6 711.9L205.9 708.7L202.2 710.6L205.9 713.8z"/>
<path fill="#00bfff" d="M228.2 687.1L224.4 701.2L220.7 702.3L224.5 688.2z"/>
<path fill="#008fff" d="M220.7 702.3L217.0 708.5L213.3 710.1L217.1 703.9z"/>
<path fill="#0080ff" d="M213.3 710.1L209.6 706.9L205.9 708.7L209.6 711.9z"/>
<path fill="#008fff" d="M224.4 701.2L220.7 707.4L217.0 708.5L220.7 702.3z"/>
<path fill="#008fff" d="M217.0 708.5L213.3 705.3L209.6 706.9L213.3 710.1z"/>
<path fill="#008fff" d="M220.7 707.4L217.0 704.2L213.3 705.3L217.0 708.5z"/></g><line x1="362.0" y1="547.2" x2="369.5" y2="547.2" stroke="#000" stroke-width="1"/>
<text x="373.5" y="551.85" font-size="11" fill="#000" text-anchor="start">1.00</text>
<line x1="362.0" y1="580.1" x2="369.5" y2="580.1" stroke="#000" stroke-width="1"/>
<text x="373.5" y="584.725" font-size="11" fill="#000" text-anchor="start">0.50</text>
<line x1="362.0" y1="613.0" x2="369.5" y2="613.0" stroke="#000" stroke-width="1"/>
<text x="373.5" y="617.6" font-size="11" fill="#000" text-anchor="start">0.00</text>
<line x1="362.0" y1="645.9" x2="369.5" y2="645.9" stroke="#000" stroke-width="1"/>
<text x="373.5" y="650.475" font-size="11" fill="#000" text-anchor="start">-0.50</text>
<line x1="362.0" y1="678.8" x2="369.5" y2="678.8" stroke="#000" stroke-width="1"/>
<text x="373.5" y="683.35" font-size="11" fill="#000" text-anchor="start">-1.00</text>
<line x1="72.5" y1="705.0" x2="72.5" y2="712.0" stroke="#0000f0" stroke-width="1"/>
<text x="65.6" y="721.5" font-size="11" fill="#1010f0" text-anchor="middle">2.00</text>
<line x1="120.7" y1="724.3" x2="120.7" y2="731.3" stroke="#0000f0" stroke-width="1"/>
<text x="113.76666666666665" y="740.8333333333334" font-size="11" fill="#1010f0" text-anchor="middle">1.00</text>
<line x1="168.8" y1="743.7" x2="168.8" y2="750.7" stroke="#0000f0" stroke-width="1"/>
<text x="161.9333333333333" y="760.1666666666666" font-size="11" fill="#1010f0" text-anchor="middle">0.00</text>
<line x1="217.0" y1="763.0" x2="217.0" y2="770.0" stroke="#0000f0" stroke-width="1"/>
<text x="208.5" y="779.5" font-size="11" fill="#1010f0" text-anchor="middle">-1.00</text>
<line x1="217.0" y1="763.0" x2="217.0" y2="770.0" stroke="#f00000" stroke-width="1"/>
<text x="224.9" y="779.5" font-size="11" fill="#f00000" text-anchor="middle">2.00</text>
<line x1="265.3" y1="743.7" x2="265.3" y2="750.7" stroke="#f00000" stroke-width="1"/>
<text x="273.2333333333333" y="760.1666666666666" font-size="11" fill="#f00000" text-anchor="middle">1.00</text>
<line x1="313.7" y1="724.3" x2="313.7" y2="731.3" stroke="#f00000" stroke-width="1"/>
<text x="321.5666666666666" y="740.8333333333334" font-size="11" fill="#f00000" text-anchor="middle">0.00</text>
<line x1="362.0" y1="705.0" x2="362.0" y2="712.0" stroke="#f00000" stroke-width="1"/>
<text x="369.9" y="721.5" font-size="11" fill="#f00000" text-anchor="middle">-1.00</text></svg></div>
</div>
<div class="abs" style="left:0;top:421.5px;width:433px;height:1.5px;background:#000"></div>
<div class="abs" style="left:0;top:421.5px;width:2px;height:375px;background:#000"></div>
<!-- ============ right panel ============ -->
<div class="abs" style="left:438.5px;top:3px;width:396px;height:1.5px;background:#fff"></div>
<div class="abs" style="left:438.5px;top:3px;width:1.5px;height:798px;background:#e4ecfa"></div>
<!-- tabs -->
<div class="abs" style="left:440px;top:24px;width:394px;height:1px;background:#8a8a8a"></div>
<div class="abs" style="left:440px;top:5px;width:67px;height:19.5px;background:#fbe6c4;border-top:1px solid #b09070;border-left:1px solid #b8b0a0;border-right:1px solid #909090;box-sizing:border-box"></div>
<div class="abs" style="left:507px;top:5px;width:68.5px;height:19.5px;background:#c8dbf8;border-top:1px solid #8a8070;border-right:1px solid #808080;border-bottom:1px solid #808080;box-sizing:border-box"></div>
<div class="abs" style="left:575.5px;top:5px;width:82.5px;height:19.5px;background:#c8dbf8;border-top:1px solid #8a8070;border-right:1px solid #808080;border-bottom:1px solid #808080;box-sizing:border-box"></div>
<div class="t" style="left:443.5px;top:11.40px;font-size:11px;color:#000;letter-spacing:-0.4px;">Променливи</div><div class="t" style="left:510.8px;top:9.01px;font-size:11px;color:#000;">Координати</div><div class="t" style="left:578.6px;top:9.01px;font-size:11px;color:#000;">Настройки - 3D</div>
<!-- Preizchertai button -->
<div class="btn" style="left:450px;top:36px;width:121px;height:23px"></div>
<div class="play" style="left:461px;top:40.5px"></div>
<div class="t" style="left:481.5px;top:43.00px;font-size:11px;color:#000;">Преизчертай !</div>
<!-- group panel -->
<div class="abs" style="left:446px;top:73.5px;width:387px;height:179px;box-sizing:border-box;border:1px solid #a8a8a0;border-right-color:#fff;border-bottom-color:#fff"></div>
<div class="abs" style="left:447px;top:74.5px;width:386px;height:177px;box-sizing:border-box;border:1px solid #fff;border-right-color:#a8a8a0;border-bottom-color:#a8a8a0"></div>
<div class="edit" style="left:454px;top:92px;width:145px;height:81px;border-color:#7a8898"></div>
<div class="abs" style="left:471.5px;top:94px;width:125.2px;height:12.8px;background:#316ac5"></div>
<div class="abs cb" style="left:458px;top:95px"></div>
<div class="abs cb" style="left:458px;top:108px"></div>
<svg class="abs" style="left:458px;top:95px" width="11" height="24"><path d="M2.5 5 L4.5 7.5 L8.5 2.5 M2.5 18 L4.5 20.5 L8.5 15.5" fill="none" stroke="#000" stroke-width="2"/></svg>
<div class="t" style="left:473px;top:95.20px;font-size:11px;color:#fff;">var1</div><div class="t" style="left:473px;top:108.20px;font-size:11px;color:#000;">var2</div>
<div class="edit" style="left:605.8px;top:92px;width:217px;height:81px;border-color:#7a8898"></div>
<div class="t" style="left:455px;top:182.21px;font-size:11px;color:#000;font-weight:bold;">var1</div>
<div class="abs" style="left:454px;top:199.5px;width:300px;height:1.5px;background:#000"></div>
<div class="t" style="left:542px;top:206.21px;font-size:11px;color:#000;">Долна</div><div class="t" style="left:686px;top:206.21px;font-size:11px;color:#000;">Горна</div>
<div class="edit" style="left:542px;top:220px;width:65px;height:21px"></div>
<div class="edit" style="left:686px;top:220.5px;width:65px;height:20.5px"></div>
<div class="t" style="left:545px;top:225.71px;font-size:11px;color:#000;">-1</div><div class="t" style="left:689px;top:225.71px;font-size:11px;color:#000;">2</div>
<!-- buttons -->
<div class="btn" style="left:471px;top:269px;width:119.5px;height:20.8px"></div>
<div class="play" style="left:481px;top:272.5px"></div>
<div class="t" style="left:505px;top:274.70px;font-size:11px;color:#000;">Преизчисли !</div>
<div class="btn" style="left:471px;top:293.3px;width:119.5px;height:20.8px"></div>
<div class="play" style="left:481px;top:296.5px"></div>
<div class="t" style="left:504px;top:298.70px;font-size:11px;color:#000;">Оптимизация</div>
<div class="btn" style="left:692px;top:293.3px;width:119.5px;height:20.8px"></div>
<div class="t" style="left:729px;top:298.70px;font-size:11px;color:#000;">X = Xopt</div>
<!-- memo -->
<div class="abs" style="left:446px;top:324px;width:388px;height:95.5px;background:#fff;border-top:1px solid #aca899;border-left:1px solid #aca899;border-bottom:1px solid #f1efe2;box-sizing:border-box"></div>
<div class="abs" style="left:447px;top:325px;width:387px;height:1px;background:#716f64"></div><div class="abs" style="left:447px;top:325px;width:1px;height:93px;background:#716f64"></div>
<div class="t" style="left:448.5px;top:329.20px;font-size:11px;color:#000;">x1 = 1,6246239549946</div><div class="t" style="left:448.5px;top:342.20px;font-size:11px;color:#000;">x2 = 0,353673164267093</div><div class="t" style="left:448.5px;top:355.20px;font-size:11px;color:#000;">Оптимална стойност : -0,0597492512674335</div>
<!-- checkbox -->
<div class="abs" style="left:446px;top:430.5px;width:12.7px;height:12.5px;box-sizing:border-box;border:1px solid #1c5180;background:#f4f4f0"></div>
<svg class="abs" style="left:446.3px;top:430.8px" width="12" height="12"><path d="M2.5 5.5 L4.8 8 L9.5 3" fill="none" stroke="#21a121" stroke-width="2.2"/></svg>
<div class="t" style="left:461px;top:431.70px;font-size:11px;color:#000;letter-spacing:0.14px;">Нанеси тези резултати върху графиката</div>
<div class="t" style="left:465.5px;top:457.70px;font-size:11px;color:#000;">Цвят на оптимума</div>
<div class="edit" style="left:570px;top:452.4px;width:89px;height:21.2px;border-color:#7f9db9"></div>
<div class="abs" style="left:576px;top:457.2px;width:29.8px;height:11.8px;background:#ff00ff;border:1px solid #000;box-sizing:border-box"></div>
<div class="t" style="left:608px;top:457.70px;font-size:11px;color:#000;">clFuch</div>
<div class="abs" style="left:641.7px;top:454.2px;width:15px;height:17.4px;box-sizing:border-box;border:1px solid #b8c8f0;border-radius:2px;background:linear-gradient(#dce6fa,#b6c8f2)"></div>
<svg class="abs" style="left:641px;top:454px" width="17" height="17"><path d="M4.5 6.5 L8.5 10.5 L12.5 6.5" fill="none" stroke="#4d6185" stroke-width="2"/></svg>
<div class="t" style="left:445px;top:488.70px;font-size:11px;color:#000;">Гъстота на мрежата по X (5 - 300)</div><div class="t" style="left:445px;top:512.71px;font-size:11px;color:#000;">Гъстота на мрежата по Y (5 - 300)</div>
<div class="edit" style="left:650px;top:484.5px;width:65px;height:20.5px"></div>
<div class="edit" style="left:650px;top:508.5px;width:65px;height:21px"></div>
<div class="t" style="left:652px;top:488.70px;font-size:11px;color:#000;">40</div><div class="t" style="left:652px;top:512.71px;font-size:11px;color:#000;">40</div>
<div class="abs spin" style="left:698px;top:487px"></div>
<div class="abs spin" style="left:698px;top:511px"></div>
<svg class="abs" style="left:698px;top:487px" width="13" height="40"><path d="M3.5 6 L6.5 3 L9.5 6 M3.5 9.5 L6.5 12.5 L9.5 9.5 M3.5 30 L6.5 27 L9.5 30 M3.5 33.5 L6.5 36.5 L9.5 33.5" fill="none" stroke="#4d6185" stroke-width="2"/></svg>
</body></html>
